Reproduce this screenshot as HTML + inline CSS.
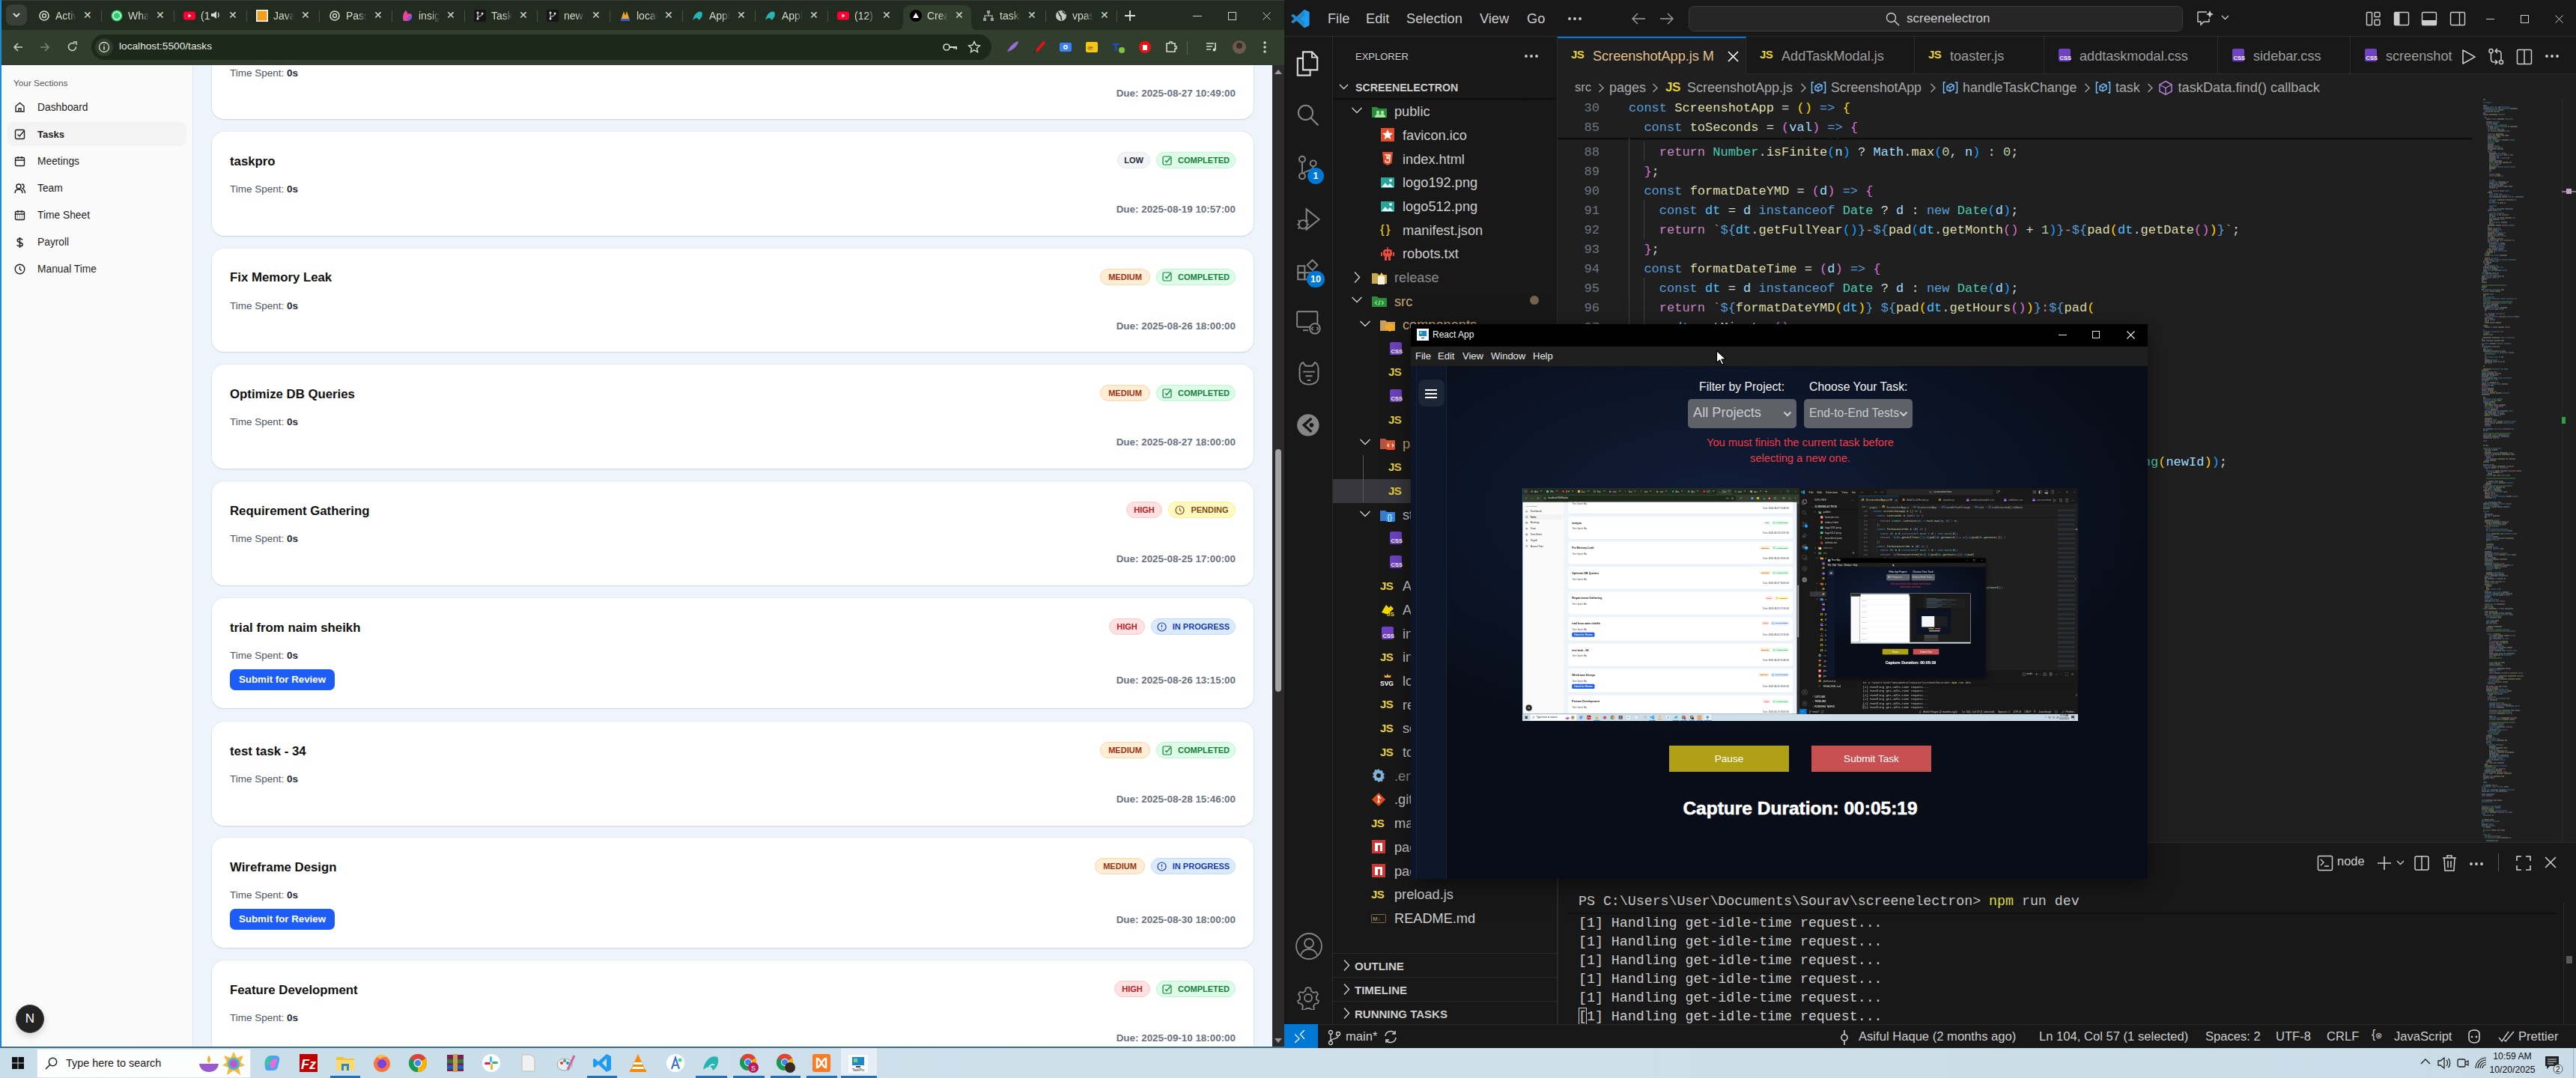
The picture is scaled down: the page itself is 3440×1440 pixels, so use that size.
<!DOCTYPE html><html><head><meta charset="utf-8"><style>
*{margin:0;padding:0;box-sizing:border-box}
html,body{width:3440px;height:1440px;overflow:hidden;background:#181818;font-family:"Liberation Sans",sans-serif}
.abs{position:absolute}
.mono{font-family:"Liberation Mono",monospace}
#browser{position:absolute;left:0;top:0;width:1715px;height:1400px;background:#212b20;overflow:hidden}
#tabstrip{position:absolute;left:0;top:0;width:1715px;height:40px;background:#212b20;border-top:1px solid #3b3b3b}
.tab{position:absolute;top:6px;height:34px;width:97px;color:#d5dacd;font-size:14px}
.tab .ic{position:absolute;left:12px;top:6px;width:16px;height:16px}
.tab .tt{position:absolute;left:35px;top:6px;width:28px;overflow:hidden;white-space:nowrap;-webkit-mask-image:linear-gradient(90deg,#000 60%,transparent)}
.tab .x{position:absolute;left:72px;top:5px;font-size:14px;color:#d5dacd}
.tab .sep{position:absolute;left:96px;top:7px;width:1px;height:15px;background:#4a5346}
#toolbar{position:absolute;left:0;top:40px;width:1715px;height:47px;background:#323e2d}
#omni{position:absolute;left:122px;top:6px;width:1202px;height:34px;border-radius:17px;background:#1c2819}
#page{position:absolute;left:0;top:87px;width:1715px;height:1313px;background:#eef4fc;overflow:hidden}
#side{position:absolute;left:0;top:0;width:258px;height:1313px;background:#fafafa;border-right:1px solid #e6e6e6}
.nav{position:absolute;left:10px;width:239px;height:32px;border-radius:8px;font-size:13.8px;color:#1f1f1f}
.nav span{position:absolute;left:40px;top:8.5px}
.nav svg{position:absolute;left:9px;top:9px}
.card{position:absolute;left:283px;width:1391px;background:#fff;border-radius:16px;box-shadow:0 1px 2px rgba(0,0,0,.10),0 0 0 1px rgba(0,0,0,.035)}
.ttl{position:absolute;left:24px;top:29.5px;font-size:16.8px;font-weight:bold;color:#111}
.ts{position:absolute;left:24px;font-size:13.5px;color:#4b5563}
.ts b{color:#1f2937;font-weight:bold}
.due{position:absolute;right:24px;font-size:13.4px;color:#6b7280;font-weight:bold}
.bdg{position:absolute;top:27px;height:22px;border-radius:11px;font-size:11px;font-weight:bold;line-height:20px;border:1px solid;white-space:nowrap;display:flex;align-items:center;justify-content:center}
.sfr{position:absolute;left:24px;width:140px;height:28px;border-radius:7px;background:#1d5cf5;color:#fff;font-size:13.3px;font-weight:bold;line-height:28px;text-align:center}
#scroll{position:absolute;left:1699px;top:87px;width:16px;height:1313px;background:#2b2b2b}


#vs{position:absolute;left:1715px;top:0;width:1725px;height:1400px;background:#1f1f1f;overflow:hidden;color:#cccccc}
#vtitle{position:absolute;left:0;top:0;width:1725px;height:49px;background:#181818;border-bottom:1px solid #2b2b2b}
.menu{position:absolute;top:15px;font-size:18.2px;color:#cccccc}
#act{position:absolute;left:0;top:49px;width:65px;height:1319px;background:#181818;border-right:1px solid #2b2b2b}
#exp{position:absolute;left:65px;top:49px;width:300px;height:1319px;background:#181818;border-right:1px solid #2b2b2b}
.row{position:absolute;left:0;width:299px;height:31.7px;font-size:18.2px;color:#cccccc;white-space:nowrap}
.row .nm{position:absolute;top:6.5px}
.chev{position:absolute;top:10px}
.fi{position:absolute;top:6px;width:20px;height:20px}
#edtabs{position:absolute;left:365px;top:49px;width:1360px;height:50px;background:#181818;border-bottom:1px solid #2b2b2b}
.etab{position:absolute;top:0;height:50px;border-right:1px solid #2b2b2b;font-size:18.1px;color:#9d9d9d;white-space:nowrap}
.etab .nm{position:absolute;top:16px}
#code{position:absolute;left:365px;top:99px;width:1360px;height:1026px;background:#1f1f1f}
.ln{position:absolute;left:0;width:56px;text-align:right;font-family:"Liberation Mono",monospace;font-size:17px;color:#6e7681;height:26px;line-height:26px}
.cl{position:absolute;left:95px;font-family:"Liberation Mono",monospace;font-size:17px;white-space:pre;height:26px;line-height:26px;color:#d4d4d4}
.k{color:#569cd6}.dt{color:#4fc1ff}.f{color:#dcdcaa}.r{color:#c586c0}.t{color:#4ec9b0}.v{color:#9cdcfe}.b1{color:#ffd700}.b2{color:#da70d6}.b3{color:#179fff}.nu{color:#b5cea8}.s{color:#ce9178}
#panel{position:absolute;left:365px;top:1125px;width:1360px;height:243px;background:#181818;border-top:1px solid #2b2b2b}
.term{position:absolute;left:28px;font-family:"Liberation Mono",monospace;font-size:18.27px;white-space:pre;color:#cccccc;height:25px;line-height:25px}
#status{position:absolute;left:0;top:1368px;width:1725px;height:32px;background:#181818;border-top:1px solid #2b2b2b;font-size:16.6px;color:#cccccc}
#status .si{position:absolute;top:6px;white-space:nowrap}
.sect{position:absolute;left:0;width:299px;height:32px;border-top:1px solid #2b2b2b;font-size:15px;font-weight:bold;color:#cccccc}
.sect span{position:absolute;left:29px;top:8px}


#rw{position:absolute;left:1884px;top:433px;width:984px;height:741px;background:#0a101c;box-shadow:0 0 0 1px #333,0 8px 30px rgba(0,0,0,.5);box-shadow:0 8px 30px rgba(0,0,0,.5);overflow:hidden}
#rtitle{position:absolute;left:0;top:0;width:984px;height:30px;background:#000}
#rmenu{position:absolute;left:0;top:30px;width:984px;height:26px;background:#1f1f1f;font-size:13px;color:#e6e6e6}
#rmenu span{position:absolute;top:5px}
#rcontent{position:absolute;left:0;top:56px;width:984px;height:685px;background:radial-gradient(ellipse 60% 45% at 42% 28%,#111d38 0%,#0c1528 55%,#080d18 100%)}
#rside{position:absolute;left:0;top:0;width:48px;height:685px;background:#0c1628;border-right:1px solid #1b2538}
.rlbl{position:absolute;top:19px;font-size:15.8px;color:#f0f0f0;white-space:nowrap}
.rsel{position:absolute;top:56px;height:39px;border-radius:5px;background:#5f6168;color:#c9cacd;font-size:17.5px;white-space:nowrap;overflow:hidden}
.rsel span{position:absolute;left:7px;top:9px}
.rsel svg{position:absolute;right:6px;top:16px}
</style></head><body>
<div id="browser">
<div class="abs" style="left:0;top:0;width:2px;height:1400px;background:#1f8ad2;z-index:50"></div>
<div id="tabstrip">
<div class="abs" style="left:8px;top:5px;width:28px;height:28px;border-radius:8px;background:#3a4038"></div>
<svg class="abs" style="left:16px;top:14px" width="12" height="10" viewBox="0 0 12 10"><path d="M2 3l4 4 4-4" stroke="#dfe3da" stroke-width="1.8" fill="none"/></svg>
<div class="tab" style="left:39px"><svg class="ic" viewBox="0 0 16 16"><circle cx="8" cy="8" r="6" fill="none" stroke="#d5dacd" stroke-width="1.6"/><circle cx="8" cy="8" r="2.5" fill="none" stroke="#d5dacd" stroke-width="1.4"/></svg><div class="tt">Activ</div><div class="x">&#x2715;</div><div class="sep"></div></div>
<div class="tab" style="left:136px"><svg class="ic" viewBox="0 0 16 16"><circle cx="8" cy="8" r="7.5" fill="#25d366"/><circle cx="8" cy="8" r="5" fill="none" stroke="#fff" stroke-width="1.3"/></svg><div class="tt">What</div><div class="x">&#x2715;</div><div class="sep"></div></div>
<div class="tab" style="left:233px"><svg class="ic" viewBox="0 0 16 16"><rect x="0" y="2.5" width="16" height="11" rx="3" fill="#ff0033"/><path d="M6.5 5.5v5l4-2.5z" fill="#fff"/></svg><div class="tt">(1</div><div class="x">&#x2715;</div><div class="sep"></div></div>
<div class="tab" style="left:330px"><svg class="ic" viewBox="0 0 16 16"><rect x="0" y="0" width="16" height="16" fill="#fff"/><rect x="1.5" y="1.5" width="13" height="13" fill="#f0a020"/></svg><div class="tt">Javas</div><div class="x">&#x2715;</div><div class="sep"></div></div>
<div class="tab" style="left:427px"><svg class="ic" viewBox="0 0 16 16"><circle cx="8" cy="8" r="6" fill="none" stroke="#d5dacd" stroke-width="1.6"/><circle cx="8" cy="8" r="2.5" fill="none" stroke="#d5dacd" stroke-width="1.4"/></svg><div class="tt">Pass</div><div class="x">&#x2715;</div><div class="sep"></div></div>
<div class="tab" style="left:524px"><svg class="ic" viewBox="0 0 16 16"><path d="M3 15C1 11 2 4 6 1c3 3 2 5 2 5s3-2 6 1c1 4-2 8-6 8z" fill="#e8459a"/><path d="M8 15c3 0 6-3 6-7-3-1-6 2-6 7z" fill="#6b5cf0"/></svg><div class="tt">insig</div><div class="x">&#x2715;</div><div class="sep"></div></div>
<div class="tab" style="left:621px"><svg class="ic" viewBox="0 0 16 16"><rect width="16" height="16" rx="2" fill="#151515"/><circle cx="5" cy="4" r="1.5" fill="#ddd"/><circle cx="5" cy="12" r="1.5" fill="#ddd"/><circle cx="11" cy="5" r="1.5" fill="#ddd"/><path d="M5 5v6M11 6c0 3-6 2-6 5" stroke="#ddd" fill="none"/></svg><div class="tt">Task</div><div class="x">&#x2715;</div><div class="sep"></div></div>
<div class="tab" style="left:718px"><svg class="ic" viewBox="0 0 16 16"><rect width="16" height="16" rx="2" fill="#151515"/><circle cx="5" cy="4" r="1.5" fill="#ddd"/><circle cx="5" cy="12" r="1.5" fill="#ddd"/><circle cx="11" cy="5" r="1.5" fill="#ddd"/><path d="M5 5v6M11 6c0 3-6 2-6 5" stroke="#ddd" fill="none"/></svg><div class="tt">new</div><div class="x">&#x2715;</div><div class="sep"></div></div>
<div class="tab" style="left:815px"><svg class="ic" viewBox="0 0 16 16"><path d="M2 14L6 2l2 6 2-6 4 12z" fill="#f5a623"/><rect x="2" y="12" width="12" height="3" fill="#3b5bdb"/></svg><div class="tt">local</div><div class="x">&#x2715;</div><div class="sep"></div></div>
<div class="tab" style="left:912px"><svg class="ic" viewBox="0 0 16 16"><path d="M1 14C3 6 8 1 13 3c2 3 0 9-4 11-1-4-4-4-8 0z" fill="#26b5b0"/></svg><div class="tt">Appl</div><div class="x">&#x2715;</div><div class="sep"></div></div>
<div class="tab" style="left:1009px"><svg class="ic" viewBox="0 0 16 16"><path d="M1 14C3 6 8 1 13 3c2 3 0 9-4 11-1-4-4-4-8 0z" fill="#26b5b0"/></svg><div class="tt">Appl</div><div class="x">&#x2715;</div><div class="sep"></div></div>
<div class="tab" style="left:1106px"><svg class="ic" viewBox="0 0 16 16"><rect x="0" y="2.5" width="16" height="11" rx="3" fill="#ff0033"/><path d="M6.5 5.5v5l4-2.5z" fill="#fff"/></svg><div class="tt">(12) V</div><div class="x">&#x2715;</div></div>
<div class="abs" style="left:1206px;top:6px;width:91px;height:34px;background:#323e2d;border-radius:9px 9px 0 0"></div>
<div class="abs" style="left:1197px;top:31px;width:9px;height:9px;background:radial-gradient(circle at 0 0,#212b20 8.5px,#323e2d 9px)"></div>
<div class="abs" style="left:1297px;top:31px;width:9px;height:9px;background:radial-gradient(circle at 100% 0,#212b20 8.5px,#323e2d 9px)"></div>
<div class="tab" style="left:1203px"><svg class="ic" viewBox="0 0 16 16"><circle cx="8" cy="8" r="8" fill="#000"/><path d="M8 4l4 7H4z" fill="#fff"/></svg><div class="tt">Crea</div><div class="x">&#x2715;</div></div>
<div class="tab" style="left:1300px"><svg class="ic" viewBox="0 0 16 16"><rect x="6" y="1" width="4" height="4" fill="#9aa096"/><rect x="1" y="11" width="4" height="4" fill="#9aa096"/><rect x="11" y="11" width="4" height="4" fill="#9aa096"/><path d="M8 5v3M3 11V8h10v3" stroke="#9aa096" stroke-width="1.5" fill="none"/></svg><div class="tt">taskp</div><div class="x">&#x2715;</div><div class="sep"></div></div>
<div class="tab" style="left:1397px"><svg class="ic" viewBox="0 0 16 16"><circle cx="8" cy="8" r="7" fill="#c5cac0"/><path d="M4 3c2 2 1 4 3 5s0 4 2 6M10 2c0 2 3 2 4 4" stroke="#212b20" stroke-width="1.6" fill="none"/></svg><div class="tt">vpas</div><div class="x">&#x2715;</div></div>
<svg class="abs" style="left:281px;top:12px" width="13" height="14" viewBox="0 0 13 14"><path d="M1 5h3l4-3v10L4 9H1z" fill="#d5dacd"/><path d="M10 4c1.5 1.5 1.5 4.5 0 6" stroke="#d5dacd" stroke-width="1.3" fill="none"/></svg>
<div class="abs" style="left:1491px;top:13px;width:1px;height:15px;background:#4a5346"></div>
<svg class="abs" style="left:1502px;top:13px" width="14" height="14" viewBox="0 0 14 14"><path d="M7 0v14M0 7h14" stroke="#dfe3da" stroke-width="1.8"/></svg>
<div class="abs" style="left:1593px;top:20px;width:12px;height:1px;background:#c9cdc4"></div>
<div class="abs" style="left:1640px;top:15px;width:11px;height:11px;border:1px solid #c9cdc4"></div>
<svg class="abs" style="left:1686px;top:15px" width="11" height="11" viewBox="0 0 11 11"><path d="M0.5 0.5l10 10M10.5 0.5l-10 10" stroke="#c9cdc4" stroke-width="1"/></svg>
</div>
<div id="toolbar">
<svg class="abs" style="left:17px;top:16px" width="14" height="14" viewBox="0 0 14 14"><path d="M13 7H2M7 2L2 7l5 5" stroke="#c9cdc4" stroke-width="1.6" fill="none"/></svg>
<svg class="abs" style="left:53px;top:16px" width="14" height="14" viewBox="0 0 14 14"><path d="M1 7h11M7 2l5 5-5 5" stroke="#7c8578" stroke-width="1.6" fill="none"/></svg>
<svg class="abs" style="left:89px;top:15px" width="15" height="15" viewBox="0 0 15 15"><path d="M12.5 7.5A5 5 0 1 1 10.5 3.5" stroke="#c9cdc4" stroke-width="1.6" fill="none"/><path d="M9 1h4v4" stroke="#c9cdc4" stroke-width="1.6" fill="none"/></svg>
<div id="omni">
<div class="abs" style="left:5px;top:5px;width:24px;height:24px;border-radius:12px;background:#2f3b2b"></div>
<svg class="abs" style="left:9px;top:9px" width="16" height="16" viewBox="0 0 16 16"><circle cx="8" cy="8" r="6.5" stroke="#d5dacd" stroke-width="1.3" fill="none"/><path d="M8 7v4.5M8 4.5v1" stroke="#d5dacd" stroke-width="1.6"/></svg>
<div class="abs" style="left:37px;top:8px;font-size:13.7px;color:#e8ebe4">localhost:5500/tasks</div>
<svg class="abs" style="left:1137px;top:10px" width="20" height="14" viewBox="0 0 20 14"><circle cx="5" cy="7" r="4" stroke="#d5dacd" stroke-width="1.6" fill="none"/><path d="M9 7h9v3M15 7v2" stroke="#d5dacd" stroke-width="2" fill="none"/></svg>
<svg class="abs" style="left:1170px;top:8px" width="18" height="18" viewBox="0 0 18 18"><path d="M9 1.5l2.2 4.8 5.2.6-3.9 3.5 1.1 5.1L9 12.9l-4.6 2.6 1.1-5.1L1.6 6.9l5.2-.6z" stroke="#d5dacd" stroke-width="1.4" fill="none"/></svg>
</div>
<svg class="abs" style="left:1343px;top:13px" width="20" height="20" viewBox="0 0 20 20"><path d="M2 16C6 8 12 3 17 2c-1 6-6 11-14 14z" fill="#9b6ad6"/></svg>
<svg class="abs" style="left:1378px;top:13px" width="20" height="20" viewBox="0 0 20 20"><path d="M4 17l2-4 9-11 3 2-9 11z" fill="#e11"/><path d="M2 18l3-2-1-2z" fill="#222"/></svg>
<svg class="abs" style="left:1413px;top:13px" width="20" height="20" viewBox="0 0 20 20"><rect x="2" y="4" width="16" height="12" rx="2" fill="#3b82f6"/><circle cx="10" cy="10" r="3" fill="#fff"/><circle cx="10" cy="10" r="1.5" fill="#3b82f6"/></svg>
<svg class="abs" style="left:1448px;top:13px" width="20" height="20" viewBox="0 0 20 20"><rect x="2" y="3" width="16" height="14" rx="2" fill="#f5c518"/><text x="4" y="14" font-size="8" fill="#333">বং</text></svg>
<svg class="abs" style="left:1484px;top:13px" width="20" height="20" viewBox="0 0 20 20"><text x="2" y="15" font-size="15" font-weight="bold" fill="#1d4ed8">T</text><circle cx="14" cy="14" r="4" fill="#7fc241"/></svg>
<svg class="abs" style="left:1519px;top:13px" width="20" height="20" viewBox="0 0 20 20"><circle cx="10" cy="10" r="8" fill="#e11"/><path d="M7 14V7h6v7z" fill="#fff"/></svg>
<svg class="abs" style="left:1554px;top:13px" width="20" height="20" viewBox="0 0 20 20"><path d="M4 5h4V3h3v2h4v4h2v3h-2v4H4z" stroke="#d5dacd" stroke-width="1.6" fill="none"/></svg>
<svg class="abs" style="left:1609px;top:13px" width="20" height="20" viewBox="0 0 20 20"><path d="M2 5h10M2 9h8M2 13h6M14 4v9" stroke="#d5dacd" stroke-width="1.6" fill="none"/><circle cx="12.5" cy="13.5" r="2" fill="#d5dacd"/></svg>
<svg class="abs" style="left:1645px;top:13px" width="20" height="20" viewBox="0 0 20 20"><circle cx="10" cy="10" r="9" fill="#6b5a4e"/><circle cx="10" cy="8" r="4" fill="#3a2c24"/></svg>
<div class="abs" style="left:1585px;top:15px;width:1px;height:18px;background:#59645a"></div>
<svg class="abs" style="left:1686px;top:14px" width="6" height="18" viewBox="0 0 6 18"><circle cx="3" cy="3" r="1.7" fill="#d5dacd"/><circle cx="3" cy="9" r="1.7" fill="#d5dacd"/><circle cx="3" cy="15" r="1.7" fill="#d5dacd"/></svg>
</div>
<div id="page">
<div id="side">
<div class="abs" style="left:18px;top:17px;font-size:11.8px;color:#555">Your Sections</div>
<div class="nav" style="top:40px;"><svg width="15" height="15" viewBox="0 0 15 15"><path d="M2 13V6l5.5-4.5L13 6v7zM6 13V9h3v4" stroke="#222" stroke-width="1.4" fill="none"/></svg><span>Dashboard</span></div>
<div class="nav" style="top:76px;background:#f3f3f3;font-weight:bold;font-size:13px;"><svg width="15" height="15" viewBox="0 0 15 15"><rect x="1.5" y="1.5" width="12" height="12" rx="1.5" stroke="#222" stroke-width="1.4" fill="none"/><path d="M4.5 7.5l2.5 2.5 6-7" stroke="#222" stroke-width="1.4" fill="none"/></svg><span>Tasks</span></div>
<div class="nav" style="top:112px;"><svg width="15" height="15" viewBox="0 0 15 15"><rect x="1.5" y="2.5" width="12" height="11" rx="1.5" stroke="#222" stroke-width="1.4" fill="none"/><path d="M1.5 6h12M5 1v3M10 1v3" stroke="#222" stroke-width="1.4"/></svg><span>Meetings</span></div>
<div class="nav" style="top:148px;"><svg width="15" height="15" viewBox="0 0 15 15"><circle cx="6" cy="5" r="3" stroke="#222" stroke-width="1.4" fill="none"/><path d="M1 14c0-4 2-5 5-5s5 1 5 5M10 2a3 3 0 0 1 0 6M12 9c2 1 2.5 3 2.5 5" stroke="#222" stroke-width="1.4" fill="none"/></svg><span>Team</span></div>
<div class="nav" style="top:184px;"><svg width="15" height="15" viewBox="0 0 15 15"><rect x="1.5" y="2.5" width="12" height="11" rx="1.5" stroke="#222" stroke-width="1.4" fill="none"/><path d="M1.5 6h12M5 1v3M10 1v3" stroke="#222" stroke-width="1.4"/><path d="M4 8.5h1M7 8.5h1M10 8.5h1M4 11h1M7 11h1M10 11h1" stroke="#222" stroke-width="1.2"/></svg><span>Time Sheet</span></div>
<div class="nav" style="top:220px;"><svg width="15" height="15" viewBox="0 0 15 15"><path d="M11 4.5C10 3 9 2.8 7.5 2.8 5.5 2.8 4.2 3.8 4.2 5.3c0 3.4 7 1.8 7 5.2 0 1.5-1.5 2.5-3.6 2.5-1.8 0-3-.6-3.8-1.8M7.5 1v14" stroke="#222" stroke-width="1.5" fill="none"/></svg><span>Payroll</span></div>
<div class="nav" style="top:256px;"><svg width="15" height="15" viewBox="0 0 15 15"><circle cx="7.5" cy="7.5" r="6.3" stroke="#222" stroke-width="1.4" fill="none"/><path d="M7.5 4v4l2.5 1.5" stroke="#222" stroke-width="1.4" fill="none"/></svg><span>Manual Time</span></div>
<div class="abs" style="left:21px;top:1255px;width:38px;height:38px;border-radius:19px;background:#232323;border:1.5px solid #444;box-shadow:0 4px 10px rgba(0,0,0,.15);color:#fff;font-size:17px;text-align:center;line-height:35px">N</div>
</div>
<div class="card" style="top:-70px;height:142px">
<div class="ts" style="top:72.5px">Time Spent: <b>0s</b></div>
<div class="due" style="top:99.5px">Due: 2025-08-27 10:49:00</div>
</div>
<div class="card" style="top:89px;height:138.5px">
<div class="ttl">taskpro</div>
<div class="ts" style="top:69px">Time Spent: <b>0s</b></div>
<div class="due" style="top:96.0px">Due: 2025-08-19 10:57:00</div>
<div class="bdg" style="right:24px;width:106px;background:#dcfce7;border-color:#bbf7d0;color:#15803d"><svg width="13" height="13" viewBox="0 0 13 13" style="margin-right:8px"><rect x="1" y="1" width="11" height="11" rx="1.5" stroke="#15803d" stroke-width="1.2" fill="none"/><path d="M4 6.5l2 2 5-6" stroke="#15803d" stroke-width="1.2" fill="none"/></svg>COMPLETED</div>
<div class="bdg" style="right:138px;width:44px;background:#f3f4f6;border-color:#e5e7eb;color:#1f2937">LOW</div>
</div>
<div class="card" style="top:244.6px;height:138.5px">
<div class="ttl">Fix Memory Leak</div>
<div class="ts" style="top:69px">Time Spent: <b>0s</b></div>
<div class="due" style="top:96.0px">Due: 2025-08-26 18:00:00</div>
<div class="bdg" style="right:24px;width:106px;background:#dcfce7;border-color:#bbf7d0;color:#15803d"><svg width="13" height="13" viewBox="0 0 13 13" style="margin-right:8px"><rect x="1" y="1" width="11" height="11" rx="1.5" stroke="#15803d" stroke-width="1.2" fill="none"/><path d="M4 6.5l2 2 5-6" stroke="#15803d" stroke-width="1.2" fill="none"/></svg>COMPLETED</div>
<div class="bdg" style="right:138px;width:67px;background:#ffedd5;border-color:#fed7aa;color:#9a3412">MEDIUM</div>
</div>
<div class="card" style="top:400px;height:138.5px">
<div class="ttl">Optimize DB Queries</div>
<div class="ts" style="top:69px">Time Spent: <b>0s</b></div>
<div class="due" style="top:96.0px">Due: 2025-08-27 18:00:00</div>
<div class="bdg" style="right:24px;width:106px;background:#dcfce7;border-color:#bbf7d0;color:#15803d"><svg width="13" height="13" viewBox="0 0 13 13" style="margin-right:8px"><rect x="1" y="1" width="11" height="11" rx="1.5" stroke="#15803d" stroke-width="1.2" fill="none"/><path d="M4 6.5l2 2 5-6" stroke="#15803d" stroke-width="1.2" fill="none"/></svg>COMPLETED</div>
<div class="bdg" style="right:138px;width:67px;background:#ffedd5;border-color:#fed7aa;color:#9a3412">MEDIUM</div>
</div>
<div class="card" style="top:556px;height:138.5px">
<div class="ttl">Requirement Gathering</div>
<div class="ts" style="top:69px">Time Spent: <b>0s</b></div>
<div class="due" style="top:96.0px">Due: 2025-08-25 17:00:00</div>
<div class="bdg" style="right:24px;width:90px;background:#fef9c3;border-color:#fef08a;color:#854d0e"><svg width="13" height="13" viewBox="0 0 13 13" style="margin-right:8px"><circle cx="6.5" cy="6.5" r="5.5" stroke="#854d0e" stroke-width="1.2" fill="none"/><path d="M6.5 3.5v3l2 1.5" stroke="#854d0e" stroke-width="1.2" fill="none"/></svg>PENDING</div>
<div class="bdg" style="right:122px;width:48px;background:#fee2e2;border-color:#fecaca;color:#b91c1c">HIGH</div>
</div>
<div class="card" style="top:712.4px;height:147px">
<div class="ttl">trial from naim sheikh</div>
<div class="ts" style="top:69px">Time Spent: <b>0s</b></div>
<div class="sfr" style="top:95px">Submit for Review</div>
<div class="due" style="top:102px">Due: 2025-08-26 13:15:00</div>
<div class="bdg" style="right:24px;width:113px;background:#dbeafe;border-color:#bfdbfe;color:#1e40af"><svg width="13" height="13" viewBox="0 0 13 13" style="margin-right:8px"><circle cx="6.5" cy="6.5" r="5.5" stroke="#1e40af" stroke-width="1.2" fill="none"/><path d="M6.5 3.5v3.5M6.5 8.5v1" stroke="#1e40af" stroke-width="1.2" fill="none"/></svg>IN PROGRESS</div>
<div class="bdg" style="right:145px;width:48px;background:#fee2e2;border-color:#fecaca;color:#b91c1c">HIGH</div>
</div>
<div class="card" style="top:877px;height:138.5px">
<div class="ttl">test task - 34</div>
<div class="ts" style="top:69px">Time Spent: <b>0s</b></div>
<div class="due" style="top:96.0px">Due: 2025-08-28 15:46:00</div>
<div class="bdg" style="right:24px;width:106px;background:#dcfce7;border-color:#bbf7d0;color:#15803d"><svg width="13" height="13" viewBox="0 0 13 13" style="margin-right:8px"><rect x="1" y="1" width="11" height="11" rx="1.5" stroke="#15803d" stroke-width="1.2" fill="none"/><path d="M4 6.5l2 2 5-6" stroke="#15803d" stroke-width="1.2" fill="none"/></svg>COMPLETED</div>
<div class="bdg" style="right:138px;width:67px;background:#ffedd5;border-color:#fed7aa;color:#9a3412">MEDIUM</div>
</div>
<div class="card" style="top:1032px;height:147px">
<div class="ttl">Wireframe Design</div>
<div class="ts" style="top:69px">Time Spent: <b>0s</b></div>
<div class="sfr" style="top:95px">Submit for Review</div>
<div class="due" style="top:102px">Due: 2025-08-30 18:00:00</div>
<div class="bdg" style="right:24px;width:113px;background:#dbeafe;border-color:#bfdbfe;color:#1e40af"><svg width="13" height="13" viewBox="0 0 13 13" style="margin-right:8px"><circle cx="6.5" cy="6.5" r="5.5" stroke="#1e40af" stroke-width="1.2" fill="none"/><path d="M6.5 3.5v3.5M6.5 8.5v1" stroke="#1e40af" stroke-width="1.2" fill="none"/></svg>IN PROGRESS</div>
<div class="bdg" style="right:145px;width:67px;background:#ffedd5;border-color:#fed7aa;color:#9a3412">MEDIUM</div>
</div>
<div class="card" style="top:1196.3px;height:138.5px">
<div class="ttl">Feature Development</div>
<div class="ts" style="top:69px">Time Spent: <b>0s</b></div>
<div class="due" style="top:96.0px">Due: 2025-09-10 18:00:00</div>
<div class="bdg" style="right:24px;width:106px;background:#dcfce7;border-color:#bbf7d0;color:#15803d"><svg width="13" height="13" viewBox="0 0 13 13" style="margin-right:8px"><rect x="1" y="1" width="11" height="11" rx="1.5" stroke="#15803d" stroke-width="1.2" fill="none"/><path d="M4 6.5l2 2 5-6" stroke="#15803d" stroke-width="1.2" fill="none"/></svg>COMPLETED</div>
<div class="bdg" style="right:138px;width:48px;background:#fee2e2;border-color:#fecaca;color:#b91c1c">HIGH</div>
</div>
</div>
<div class="abs" style="left:0;top:1398px;width:1715px;height:2px;background:#3f6f86;z-index:60"></div>
<div id="scroll"><svg class="abs" style="left:3px;top:6px" width="10" height="6"><path d="M0 6L5 0l5 6z" fill="#9a9a9a"/></svg><div class="abs" style="left:4px;top:513px;width:8px;height:324px;border-radius:4px;background:#a3a3a3"></div><svg class="abs" style="left:3px;top:1300px" width="10" height="6"><path d="M0 0h10L5 6z" fill="#9a9a9a"/></svg></div>
</div>

<div id="vs">
<div id="vtitle">
<svg class="abs" style="left:9px;top:13px" width="25" height="24" viewBox="0 0 100 100"><path d="M96 10.8L75.4 1a6.2 6.2 0 0 0-7.1 1.2L29 38.1 11.9 25.1a4.2 4.2 0 0 0-5.3.2L1.1 30.3a4.2 4.2 0 0 0 0 6.2L15.9 50 1.1 63.5a4.2 4.2 0 0 0 0 6.2l5.5 5a4.2 4.2 0 0 0 5.3.2L29 61.9l39.3 35.9a6.2 6.2 0 0 0 7.1 1.2L96 89.2a6.2 6.2 0 0 0 3.5-5.6V16.4a6.2 6.2 0 0 0-3.5-5.6zM75 72.7L45.2 50 75 27.3z" fill="#2489ca"/><path d="M75 27.3L45.2 50 75 72.7V27.3zM96 10.8L75.4 1a6.2 6.2 0 0 0-7.1 1.2L75 27.3V72.7l-6.7 25.1a6.2 6.2 0 0 0 7.1 1.2L96 89.2a6.2 6.2 0 0 0 3.5-5.6V16.4a6.2 6.2 0 0 0-3.5-5.6z" fill="#1f9cf0"/></svg>
<div class="menu" style="left:58px">File</div>
<div class="menu" style="left:109px">Edit</div>
<div class="menu" style="left:163px">Selection</div>
<div class="menu" style="left:261px">View</div>
<div class="menu" style="left:324px">Go</div>
<svg class="abs" style="left:378px;top:22px" width="20" height="6" viewBox="0 0 20 6"><circle cx="3" cy="3" r="1.9" fill="#cccccc"/><circle cx="10" cy="3" r="1.9" fill="#cccccc"/><circle cx="17" cy="3" r="1.9" fill="#cccccc"/></svg>
<svg class="abs" style="left:463px;top:16px" width="20" height="18" viewBox="0 0 20 18"><path d="M19 9H2M9 2L2 9l7 7" stroke="#9d9d9d" stroke-width="1.4" fill="none"/></svg>
<svg class="abs" style="left:501px;top:16px" width="20" height="18" viewBox="0 0 20 18"><path d="M1 9h17M11 2l7 7-7 7" stroke="#9d9d9d" stroke-width="1.4" fill="none"/></svg>
<div class="abs" style="left:540px;top:8px;width:660px;height:34px;border-radius:7px;background:#262626;border:1px solid #3a3a3a"></div>
<svg class="abs" style="left:803px;top:16px" width="19" height="19" viewBox="0 0 19 19"><circle cx="7.5" cy="7.5" r="6" stroke="#cccccc" stroke-width="1.4" fill="none"/><path d="M12 12l6 6" stroke="#cccccc" stroke-width="1.5"/></svg>
<div class="abs" style="left:831px;top:15px;font-size:17px;color:#cccccc">screenelectron</div>
<svg class="abs" style="left:1218px;top:13px" width="24" height="22" viewBox="0 0 24 22"><path d="M2 3h12M2 3v13h4v4l4-4h7v-4" stroke="#cccccc" stroke-width="1.4" fill="none"/><path d="M18 1l1.5 3.5L23 6l-3.5 1.5L18 11l-1.5-3.5L13 6l3.5-1.5z" fill="#cccccc"/></svg>
<svg class="abs" style="left:1251px;top:20px" width="11" height="7" viewBox="0 0 11 7"><path d="M1 1l4.5 4.5L10 1" stroke="#cccccc" stroke-width="1.3" fill="none"/></svg>
<svg class="abs" style="left:1444px;top:14px" width="22" height="22" viewBox="0 0 22 22"><rect x="1.5" y="2.5" width="7" height="17" rx="1" stroke="#cccccc" stroke-width="1.4" fill="none"/><rect x="12" y="2.5" width="7" height="6" rx="1" stroke="#cccccc" stroke-width="1.4" fill="none"/><rect x="12" y="12.5" width="7" height="7" rx="1" stroke="#cccccc" stroke-width="1.4" fill="none"/></svg>
<svg class="abs" style="left:1481px;top:14px" width="22" height="22" viewBox="0 0 22 22"><rect x="1.5" y="2.5" width="19" height="17" rx="1.5" stroke="#cccccc" stroke-width="1.4" fill="none"/><rect x="1.5" y="2.5" width="7" height="17" fill="#cccccc"/></svg>
<svg class="abs" style="left:1518px;top:14px" width="22" height="22" viewBox="0 0 22 22"><rect x="1.5" y="2.5" width="19" height="17" rx="1.5" stroke="#cccccc" stroke-width="1.4" fill="none"/><rect x="1.5" y="13" width="19" height="6.5" fill="#cccccc"/></svg>
<svg class="abs" style="left:1556px;top:14px" width="22" height="22" viewBox="0 0 22 22"><rect x="1.5" y="2.5" width="19" height="17" rx="1.5" stroke="#cccccc" stroke-width="1.4" fill="none"/><path d="M13.5 2.5v17" stroke="#cccccc" stroke-width="1.4"/></svg>
<div class="abs" style="left:1605px;top:25px;width:11px;height:1px;background:#cccccc"></div>
<div class="abs" style="left:1651px;top:20px;width:10.5px;height:10.5px;border:1px solid #cccccc"></div>
<svg class="abs" style="left:1697px;top:20px" width="11" height="11" viewBox="0 0 11 11"><path d="M0.5 0.5l10 10M10.5 0.5l-10 10" stroke="#cccccc" stroke-width="1"/></svg>
</div>
<div id="act">
<svg class="abs" style="left:15px;top:18px" width="32" height="36" viewBox="-1 -1 26 30"><path d="M7 1h10l6 6v14H7z" stroke="#d7d7d7" stroke-width="1.8" fill="none"/><path d="M17 1v6h6" stroke="#d7d7d7" stroke-width="1.6" fill="none"/><path d="M7 8H1v19h14v-6" stroke="#d7d7d7" stroke-width="1.8" fill="none"/></svg>
<svg class="abs" style="left:16px;top:88.5px" width="34" height="34" viewBox="0 0 30 30"><circle cx="11" cy="11" r="8.5" stroke="#858585" stroke-width="1.8" fill="none"/><path d="M17 17l9 9" stroke="#858585" stroke-width="1.9"/></svg>
<svg class="abs" style="left:16px;top:157.5px" width="34" height="34" viewBox="0 0 30 30"><circle cx="7" cy="5" r="3.5" stroke="#858585" stroke-width="1.7" fill="none"/><circle cx="7" cy="25" r="3.5" stroke="#858585" stroke-width="1.7" fill="none"/><circle cx="20" cy="10" r="3.5" stroke="#858585" stroke-width="1.7" fill="none"/><path d="M7 9v12M20 14c0 5-9 4-12 8" stroke="#858585" stroke-width="1.7" fill="none"/></svg>
<svg class="abs" style="left:16px;top:226.5px" width="34" height="34" viewBox="0 0 30 30"><path d="M12 3v24l15-12z" stroke="#858585" stroke-width="1.8" fill="none"/><circle cx="8" cy="21" r="5" stroke="#858585" stroke-width="1.7" fill="#181818"/><path d="M1 21h3M12 21h3M2 16l3 2M14 16l-3 2M2 26l3-2M14 26l-3-2" stroke="#858585" stroke-width="1.4"/></svg>
<svg class="abs" style="left:16px;top:295.5px" width="34" height="34" viewBox="0 0 30 30"><rect x="2" y="9" width="8" height="8" stroke="#858585" stroke-width="1.7" fill="none"/><rect x="2" y="17" width="8" height="8" stroke="#858585" stroke-width="1.7" fill="none"/><rect x="10" y="17" width="8" height="8" stroke="#858585" stroke-width="1.7" fill="none"/><path d="M19 2l6 6-6 6-6-6z" stroke="#858585" stroke-width="1.7" fill="none"/></svg>
<svg class="abs" style="left:16px;top:364.5px" width="34" height="34" viewBox="0 0 30 30"><rect x="1" y="2" width="24" height="18" rx="1" stroke="#858585" stroke-width="1.7" fill="none"/><path d="M8 24h6" stroke="#858585" stroke-width="1.7"/><circle cx="22" cy="22" r="6" stroke="#858585" stroke-width="1.7" fill="#181818"/><path d="M20 20l-2 2 2 2M24 20l2 2-2 2" stroke="#858585" stroke-width="1.2" fill="none"/></svg>
<svg class="abs" style="left:16px;top:433.5px" width="34" height="34" viewBox="0 0 30 30"><path d="M4 8c0-5 4-7 4-7l3 4h8l3-4s4 2 4 7v10c0 6-5 9-11 9S4 24 4 18z" stroke="#858585" stroke-width="1.7" fill="none"/><path d="M8 12h14M11 17h8M13 22h4" stroke="#858585" stroke-width="1.7"/></svg>
<svg class="abs" style="left:16px;top:502.5px" width="34" height="34" viewBox="0 0 30 30"><circle cx="14" cy="14" r="13" fill="#858585"/><path d="M18 6L9 14l9 8" stroke="#181818" stroke-width="3" fill="none"/><circle cx="18" cy="14" r="2.5" fill="#181818"/></svg>
<div class="abs" style="left:31px;top:175px;width:22px;height:22px;border-radius:11px;background:#0078d4;color:#fff;font-size:12.5px;font-weight:bold;text-align:center;line-height:22px">1</div>
<div class="abs" style="left:30px;top:313px;width:24px;height:22px;border-radius:11px;background:#0078d4;color:#fff;font-size:12.5px;font-weight:bold;text-align:center;line-height:22px">10</div>
<svg class="abs" style="left:14px;top:1196px" width="38" height="38" viewBox="0 0 38 38"><circle cx="19" cy="19" r="17" stroke="#858585" stroke-width="1.8" fill="none"/><circle cx="19" cy="15" r="6" stroke="#858585" stroke-width="1.8" fill="none"/><path d="M8 31c2-6 6-8 11-8s9 2 11 8" stroke="#858585" stroke-width="1.8" fill="none"/></svg>
<svg class="abs" style="left:16px;top:1268px" width="32" height="32" viewBox="0 0 32 32"><path d="M16 2l3 1 1 4 3 2 4-1 2 3-2 3v4l3 2-1 3-4 1-2 3 1 4-3 1-3-2h-4l-3 2-3-1 1-4-2-3-4-1-1-3 3-2v-4l-2-3 2-3 4 1 3-2 1-4z" stroke="#858585" stroke-width="1.8" fill="none"/><circle cx="16" cy="16" r="5" stroke="#858585" stroke-width="1.8" fill="none"/></svg>
</div>
<div id="exp">
<div class="abs" style="left:30px;top:18.5px;font-size:13px;color:#cccccc">EXPLORER</div>
<svg class="abs" style="left:255px;top:23px" width="20" height="6" viewBox="0 0 20 6"><circle cx="3" cy="3" r="1.9" fill="#cccccc"/><circle cx="10" cy="3" r="1.9" fill="#cccccc"/><circle cx="17" cy="3" r="1.9" fill="#cccccc"/></svg>
<svg class="abs" style="left:8px;top:63px" width="13" height="8" viewBox="0 0 13 8"><path d="M1 1l5.5 5.5L12 1" stroke="#cccccc" stroke-width="1.4" fill="none"/></svg>
<div class="abs" style="left:30px;top:60px;font-size:14.2px;font-weight:bold;color:#cccccc">SCREENELECTRON</div>
<div class="abs" style="left:0;top:82px;width:299px;height:4px;background:linear-gradient(#0b0b0b,transparent)"></div>
<div class="row" style="top:83.7px;">
<svg class="chev" style="left:24px;top:9px" width="16" height="11" viewBox="0 0 16 11"><path d="M1.5 2l6.5 6.5L14.5 2" stroke="#cccccc" stroke-width="1.4" fill="none"/></svg>
<svg class="fi" style="left:51px;width:22px" viewBox="0 0 22 20"><path d="M1 4h7l2 2h11v12H1z" fill="#2e8b3e"/><circle cx="9" cy="11" r="2.2" fill="#9fe89f"/><circle cx="15" cy="11" r="2.2" fill="#9fe89f"/><path d="M5 18c0-3 2-5 4-5s4 2 4 5zM11 18c0-3 2-5 4-5s4 2 4 5z" fill="#9fe89f"/></svg>
<div class="nm" style="left:82px;color:#cccccc">public</div>
</div>
<div class="row" style="top:115.3px;">
<svg class="fi" style="left:63px" viewBox="0 0 20 20"><rect x="1" y="1" width="18" height="18" fill="#e54a2a"/><path d="M10 3l2 4.5 5 .5-3.8 3.3 1.2 4.9L10 13.6l-4.4 2.6 1.2-4.9L3 8l5-.5z" fill="#fff"/></svg>
<div class="nm" style="left:93px;color:#cccccc">favicon.ico</div>
</div>
<div class="row" style="top:147.1px;">
<svg class="fi" style="left:63px" viewBox="0 0 20 20"><path d="M3 1h14l-1.5 15L10 19l-5.5-3z" fill="#e44d26"/><path d="M6.5 5h7l-.3 2.5H9l.2 2h3.8l-.5 4.5-2.5 1-2.5-1-.2-2" stroke="#fff" stroke-width="1.3" fill="none"/></svg>
<div class="nm" style="left:93px;color:#cccccc">index.html</div>
</div>
<div class="row" style="top:178.8px;">
<svg class="fi" style="left:63px" viewBox="0 0 20 20"><rect x="1" y="3" width="18" height="14" rx="1" fill="#26a69a"/><path d="M2 16l5-6 3 4 3-3 5 5z" fill="#e0f2f1"/><circle cx="14" cy="7" r="2" fill="#e0f2f1"/></svg>
<div class="nm" style="left:93px;color:#cccccc">logo192.png</div>
</div>
<div class="row" style="top:210.5px;">
<svg class="fi" style="left:63px" viewBox="0 0 20 20"><rect x="1" y="3" width="18" height="14" rx="1" fill="#26a69a"/><path d="M2 16l5-6 3 4 3-3 5 5z" fill="#e0f2f1"/><circle cx="14" cy="7" r="2" fill="#e0f2f1"/></svg>
<div class="nm" style="left:93px;color:#cccccc">logo512.png</div>
</div>
<div class="row" style="top:242.2px;">
<div class="fi" style="left:63px;color:#f1d700;font-size:17px;line-height:19px;letter-spacing:2px">{}</div>
<div class="nm" style="left:93px;color:#cccccc">manifest.json</div>
</div>
<div class="row" style="top:273.8px;">
<svg class="fi" style="left:63px" viewBox="0 0 20 20"><rect x="4" y="4" width="12" height="10" rx="4" fill="#e74c3c"/><rect x="6" y="14" width="3" height="5" fill="#e74c3c"/><rect x="11" y="14" width="3" height="5" fill="#e74c3c"/><rect x="1" y="8" width="2" height="5" fill="#e74c3c"/><rect x="17" y="8" width="2" height="5" fill="#e74c3c"/><circle cx="8" cy="8" r="1.2" fill="#181818"/><circle cx="12" cy="8" r="1.2" fill="#181818"/><path d="M10 1v3" stroke="#e74c3c" stroke-width="1.5"/></svg>
<div class="nm" style="left:93px;color:#cccccc">robots.txt</div>
</div>
<div class="row" style="top:305.5px;">
<svg class="chev" style="left:27px;top:7px" width="11" height="17" viewBox="0 0 11 17"><path d="M2 1.5l6.5 7L2 15.5" stroke="#cccccc" stroke-width="1.4" fill="none"/></svg>
<svg class="fi" style="left:51px;width:22px" viewBox="0 0 22 20"><path d="M1 4h7l2 2h11v12H1z" fill="#c9a74e"/><rect x="9" y="8" width="9" height="11" fill="#f5f0e0"/><path d="M11 8l3-5 3 5z" fill="#ffd84d"/></svg>
<div class="nm" style="left:82px;color:#8c8c8c">release</div>
</div>
<div class="row" style="top:337.2px;">
<svg class="chev" style="left:24px;top:9px" width="16" height="11" viewBox="0 0 16 11"><path d="M1.5 2l6.5 6.5L14.5 2" stroke="#cccccc" stroke-width="1.4" fill="none"/></svg>
<svg class="fi" style="left:51px;width:22px" viewBox="0 0 22 20"><path d="M1 4h7l2 2h11v12H1z" fill="#2e8b3e"/><path d="M8 10l-2.5 2.5L8 15M14 10l2.5 2.5L14 15M12 9l-2 7" stroke="#7ee87e" stroke-width="1.4" fill="none"/></svg>
<div class="nm" style="left:82px;color:#c5a572">src</div>
</div>
<div class="row" style="top:368.9px;">
<svg class="chev" style="left:35px;top:9px" width="16" height="11" viewBox="0 0 16 11"><path d="M1.5 2l6.5 6.5L14.5 2" stroke="#cccccc" stroke-width="1.4" fill="none"/></svg>
<svg class="fi" style="left:62px;width:22px" viewBox="0 0 22 20"><path d="M1 4h7l2 2h11v12H1z" fill="#c9a060"/><path d="M8 10l6-3 6 3v6l-6 3-6-3z" fill="#f4a928"/></svg>
<div class="nm" style="left:93px;color:#c5a572">components</div>
</div>
<div class="row" style="top:400.6px;">
<svg class="fi" style="left:74px" viewBox="0 0 20 20"><path d="M2 3c0-1 1-2 2-2h12c1 0 2 1 2 2v13c0 1-1 2-2 2H4c-1 0-2-1-2-2z" fill="#6f42c1"/><text x="3.5" y="16" font-size="7.5" font-weight="bold" fill="#fff" font-family="Liberation Sans">CSS</text></svg>
<div class="nm" style="left:104px;color:#cccccc">x</div>
</div>
<div class="row" style="top:432.3px;">
<div class="fi" style="left:74px;color:#e8cf3c;font-weight:bold;font-size:15px;line-height:20px;letter-spacing:-0.5px">JS</div>
<div class="nm" style="left:104px;color:#cccccc">x</div>
</div>
<div class="row" style="top:464.0px;">
<svg class="fi" style="left:74px" viewBox="0 0 20 20"><path d="M2 3c0-1 1-2 2-2h12c1 0 2 1 2 2v13c0 1-1 2-2 2H4c-1 0-2-1-2-2z" fill="#6f42c1"/><text x="3.5" y="16" font-size="7.5" font-weight="bold" fill="#fff" font-family="Liberation Sans">CSS</text></svg>
<div class="nm" style="left:104px;color:#cccccc">x</div>
</div>
<div class="row" style="top:495.7px;">
<div class="fi" style="left:74px;color:#e8cf3c;font-weight:bold;font-size:15px;line-height:20px;letter-spacing:-0.5px">JS</div>
<div class="nm" style="left:104px;color:#cccccc">x</div>
</div>
<div class="row" style="top:527.4px;">
<svg class="chev" style="left:35px;top:9px" width="16" height="11" viewBox="0 0 16 11"><path d="M1.5 2l6.5 6.5L14.5 2" stroke="#cccccc" stroke-width="1.4" fill="none"/></svg>
<svg class="fi" style="left:62px;width:22px" viewBox="0 0 22 20"><path d="M1 4h7l2 2h11v12H1z" fill="#b35543"/><rect x="9" y="7" width="12" height="12" rx="2" fill="#e0552f"/><path d="M13 11l-2 2 2 2M17 11l2 2-2 2" stroke="#fff" stroke-width="1.2" fill="none"/></svg>
<div class="nm" style="left:93px;color:#c5a572">pages</div>
</div>
<div class="row" style="top:559.1px;">
<div class="fi" style="left:74px;color:#e8cf3c;font-weight:bold;font-size:15px;line-height:20px;letter-spacing:-0.5px">JS</div>
<div class="nm" style="left:104px;color:#cccccc">x</div>
</div>
<div class="row" style="top:590.9px;background:#37373d;">
<div class="fi" style="left:74px;color:#e8cf3c;font-weight:bold;font-size:15px;line-height:20px;letter-spacing:-0.5px">JS</div>
<div class="nm" style="left:104px;color:#cccccc">x</div>
</div>
<div class="row" style="top:622.5px;">
<svg class="chev" style="left:35px;top:9px" width="16" height="11" viewBox="0 0 16 11"><path d="M1.5 2l6.5 6.5L14.5 2" stroke="#cccccc" stroke-width="1.4" fill="none"/></svg>
<svg class="fi" style="left:62px;width:22px" viewBox="0 0 22 20"><path d="M1 4h7l2 2h11v12H1z" fill="#3f7ac9"/><rect x="9" y="6" width="12" height="13" rx="2" fill="#2f8ee6"/><text x="10.5" y="16.5" font-size="10" fill="#fff" font-family="Liberation Sans">{}</text></svg>
<div class="nm" style="left:93px;color:#cccccc">styles</div>
</div>
<div class="row" style="top:654.2px;">
<svg class="fi" style="left:74px" viewBox="0 0 20 20"><path d="M2 3c0-1 1-2 2-2h12c1 0 2 1 2 2v13c0 1-1 2-2 2H4c-1 0-2-1-2-2z" fill="#6f42c1"/><text x="3.5" y="16" font-size="7.5" font-weight="bold" fill="#fff" font-family="Liberation Sans">CSS</text></svg>
<div class="nm" style="left:104px;color:#cccccc">x</div>
</div>
<div class="row" style="top:685.9px;">
<svg class="fi" style="left:74px" viewBox="0 0 20 20"><path d="M2 3c0-1 1-2 2-2h12c1 0 2 1 2 2v13c0 1-1 2-2 2H4c-1 0-2-1-2-2z" fill="#6f42c1"/><text x="3.5" y="16" font-size="7.5" font-weight="bold" fill="#fff" font-family="Liberation Sans">CSS</text></svg>
<div class="nm" style="left:104px;color:#cccccc">x</div>
</div>
<div class="row" style="top:717.6px;">
<div class="fi" style="left:63px;color:#e8cf3c;font-weight:bold;font-size:15px;line-height:20px;letter-spacing:-0.5px">JS</div>
<div class="nm" style="left:93px;color:#cccccc">App.js</div>
</div>
<div class="row" style="top:749.3px;">
<svg class="fi" style="left:63px" viewBox="0 0 20 20"><path d="M2 14l6-10 4 4 2-3 4 4-8 8z" fill="#f1d700"/><text x="9" y="19" font-size="8" font-weight="bold" fill="#f1d700" font-family="Liberation Sans">JS</text></svg>
<div class="nm" style="left:93px;color:#cccccc">App.test.js</div>
</div>
<div class="row" style="top:781.0px;">
<svg class="fi" style="left:63px" viewBox="0 0 20 20"><path d="M2 3c0-1 1-2 2-2h12c1 0 2 1 2 2v13c0 1-1 2-2 2H4c-1 0-2-1-2-2z" fill="#6f42c1"/><text x="3.5" y="16" font-size="7.5" font-weight="bold" fill="#fff" font-family="Liberation Sans">CSS</text></svg>
<div class="nm" style="left:93px;color:#cccccc">index.css</div>
</div>
<div class="row" style="top:812.8px;">
<div class="fi" style="left:63px;color:#e8cf3c;font-weight:bold;font-size:15px;line-height:20px;letter-spacing:-0.5px">JS</div>
<div class="nm" style="left:93px;color:#cccccc">index.js</div>
</div>
<div class="row" style="top:844.4px;">
<svg class="fi" style="left:63px" viewBox="0 0 20 20"><path d="M10 1l1.5 3 3-1.5-.5 3.5h-8l-.5-3.5 3 1.5z" fill="#ffb13b"/><text x="0" y="17" font-size="8.5" font-weight="bold" fill="#fff" font-family="Liberation Sans">SVG</text></svg>
<div class="nm" style="left:93px;color:#cccccc">logo.svg</div>
</div>
<div class="row" style="top:876.1px;">
<div class="fi" style="left:63px;color:#e8cf3c;font-weight:bold;font-size:15px;line-height:20px;letter-spacing:-0.5px">JS</div>
<div class="nm" style="left:93px;color:#cccccc">reportWebVitals.js</div>
</div>
<div class="row" style="top:907.8px;">
<div class="fi" style="left:63px;color:#e8cf3c;font-weight:bold;font-size:15px;line-height:20px;letter-spacing:-0.5px">JS</div>
<div class="nm" style="left:93px;color:#cccccc">setupTests.js</div>
</div>
<div class="row" style="top:939.5px;">
<div class="fi" style="left:63px;color:#e8cf3c;font-weight:bold;font-size:15px;line-height:20px;letter-spacing:-0.5px">JS</div>
<div class="nm" style="left:93px;color:#cccccc">toaster.js</div>
</div>
<div class="row" style="top:971.2px;">
<svg class="fi" style="left:51px" viewBox="0 0 20 20"><path d="M10 1l2 2.5 3-.5.5 3 2.5 2-1.5 2.5 1.5 2.5-2.5 2-.5 3-3-.5L10 19l-2-2.5-3 .5-.5-3L2 12l1.5-2.5L2 7l2.5-2 .5-3 3 .5z" fill="#7fb2d4"/><circle cx="10" cy="10" r="3" fill="#181818"/></svg>
<div class="nm" style="left:82px;color:#8c8c8c">.env</div>
</div>
<div class="row" style="top:1002.9px;">
<svg class="fi" style="left:51px" viewBox="0 0 20 20"><path d="M10 1l9 9-9 9-9-9z" fill="#e64a19"/><circle cx="10" cy="6" r="1.5" fill="#fff"/><circle cx="10" cy="13" r="1.5" fill="#fff"/><path d="M10 6v7M10 6l3 3" stroke="#fff" stroke-width="1.2"/></svg>
<div class="nm" style="left:82px;color:#cccccc">.gitignore</div>
</div>
<div class="row" style="top:1034.7px;">
<div class="fi" style="left:51px;color:#e8cf3c;font-weight:bold;font-size:15px;line-height:20px;letter-spacing:-0.5px">JS</div>
<div class="nm" style="left:82px;color:#cccccc">main.js</div>
</div>
<div class="row" style="top:1066.3px;">
<svg class="fi" style="left:51px" viewBox="0 0 20 20"><rect x="1" y="1" width="18" height="18" fill="#cb3837"/><path d="M5 16V5h10v11h-3V8h-3v8z" fill="#fff"/></svg>
<div class="nm" style="left:82px;color:#cccccc">package.json</div>
</div>
<div class="row" style="top:1098.1px;">
<svg class="fi" style="left:51px" viewBox="0 0 20 20"><rect x="1" y="1" width="18" height="18" fill="#cb3837"/><path d="M5 16V5h10v11h-3V8h-3v8z" fill="#fff"/></svg>
<div class="nm" style="left:82px;color:#cccccc">package-lock.json</div>
</div>
<div class="row" style="top:1129.8px;">
<div class="fi" style="left:51px;color:#e8cf3c;font-weight:bold;font-size:15px;line-height:20px;letter-spacing:-0.5px">JS</div>
<div class="nm" style="left:82px;color:#cccccc">preload.js</div>
</div>
<div class="row" style="top:1161.5px;">
<svg class="fi" style="left:51px" viewBox="0 0 20 20"><rect x="0.5" y="4.5" width="19" height="11" rx="1" stroke="#7a6a4a" fill="none"/><text x="2" y="13" font-size="8" font-weight="bold" fill="#8a7a5a" font-family="Liberation Sans">M↓</text></svg>
<div class="nm" style="left:82px;color:#cccccc">README.md</div>
</div>
<div class="abs" style="left:40px;top:559px;width:1px;height:63px;background:#585858"></div>
<div class="abs" style="left:263px;top:346px;width:12px;height:12px;border-radius:6px;background:#73644c"></div>
<div class="sect" style="top:1224px"><svg class="chev" style="left:13px;top:7px" width="11" height="17" viewBox="0 0 11 17"><path d="M2 1.5l6.5 7L2 15.5" stroke="#cccccc" stroke-width="1.4" fill="none"/></svg><span>OUTLINE</span></div>
<div class="sect" style="top:1256px"><svg class="chev" style="left:13px;top:7px" width="11" height="17" viewBox="0 0 11 17"><path d="M2 1.5l6.5 7L2 15.5" stroke="#cccccc" stroke-width="1.4" fill="none"/></svg><span>TIMELINE</span></div>
<div class="sect" style="top:1288px"><svg class="chev" style="left:13px;top:7px" width="11" height="17" viewBox="0 0 11 17"><path d="M2 1.5l6.5 7L2 15.5" stroke="#cccccc" stroke-width="1.4" fill="none"/></svg><span>RUNNING TASKS</span></div>
</div>
<div id="edtabs">
<div class="etab" style="left:0px;width:252px;background:#1f1f1f;border-top:2px solid #0078d4;">
<div class="abs" style="left:18px;top:13px;color:#e8cf3c;font-weight:bold;font-size:15px;letter-spacing:-0.5px">JS</div>
<div class="nm" style="left:47px;top:14px;color:#e2c08d">ScreenshotApp.js M</div>
<svg class="abs" style="left:227px;top:17px" width="15" height="15" viewBox="0 0 15 15"><path d="M1 1l13 13M14 1L1 14" stroke="#ffffff" stroke-width="1.6"/></svg>
</div>
<div class="etab" style="left:252px;width:225px;">
<div class="abs" style="left:18px;top:15px;color:#e8cf3c;font-weight:bold;font-size:15px;letter-spacing:-0.5px">JS</div>
<div class="nm" style="left:47px;color:#9d9d9d">AddTaskModal.js</div>
</div>
<div class="etab" style="left:477px;width:173px;">
<div class="abs" style="left:18px;top:15px;color:#e8cf3c;font-weight:bold;font-size:15px;letter-spacing:-0.5px">JS</div>
<div class="nm" style="left:47px;color:#9d9d9d">toaster.js</div>
</div>
<div class="etab" style="left:650px;width:232px;">
<svg class="abs" style="left:17px;top:15px" width="20" height="20" viewBox="0 0 20 20"><path d="M2 3c0-1 1-2 2-2h12c1 0 2 1 2 2v13c0 1-1 2-2 2H4c-1 0-2-1-2-2z" fill="#6f42c1"/><text x="3.5" y="16" font-size="7.5" font-weight="bold" fill="#fff" font-family="Liberation Sans">CSS</text></svg>
<div class="nm" style="left:47px;color:#9d9d9d">addtaskmodal.css</div>
</div>
<div class="etab" style="left:882px;width:177px;">
<svg class="abs" style="left:17px;top:15px" width="20" height="20" viewBox="0 0 20 20"><path d="M2 3c0-1 1-2 2-2h12c1 0 2 1 2 2v13c0 1-1 2-2 2H4c-1 0-2-1-2-2z" fill="#6f42c1"/><text x="3.5" y="16" font-size="7.5" font-weight="bold" fill="#fff" font-family="Liberation Sans">CSS</text></svg>
<div class="nm" style="left:47px;color:#9d9d9d">sidebar.css</div>
</div>
<div class="etab" style="left:1059px;width:171px;border-right:none;">
<svg class="abs" style="left:17px;top:15px" width="20" height="20" viewBox="0 0 20 20"><path d="M2 3c0-1 1-2 2-2h12c1 0 2 1 2 2v13c0 1-1 2-2 2H4c-1 0-2-1-2-2z" fill="#6f42c1"/><text x="3.5" y="16" font-size="7.5" font-weight="bold" fill="#fff" font-family="Liberation Sans">CSS</text></svg>
<div class="nm" style="left:47px;color:#9d9d9d">screenshot</div>
</div>
<svg class="abs" style="left:1206px;top:16px" width="22" height="22" viewBox="0 0 22 22"><path d="M3 2l16 9-16 9z" stroke="#cccccc" stroke-width="1.6" stroke-linejoin="round" fill="none"/></svg>
<svg class="abs" style="left:1242px;top:15px" width="23" height="23" viewBox="0 0 23 23"><circle cx="4.5" cy="4" r="2.6" stroke="#cccccc" stroke-width="1.5" fill="none"/><circle cx="18" cy="19" r="2.6" stroke="#cccccc" stroke-width="1.5" fill="none"/><path d="M4.5 7v8c0 3 2 4 4 4h4M10 16l3 3-3 3M18 16V8c0-3-2-4-4-4H11M13 1l-3 3 3 3" stroke="#cccccc" stroke-width="1.5" fill="none"/></svg>
<svg class="abs" style="left:1280px;top:16px" width="22" height="22" viewBox="0 0 22 22"><rect x="1.5" y="1.5" width="19" height="19" rx="1.5" stroke="#cccccc" stroke-width="1.5" fill="none"/><path d="M11 1.5v19" stroke="#cccccc" stroke-width="1.5"/></svg>
<svg class="abs" style="left:1318px;top:23px" width="20" height="6" viewBox="0 0 20 6"><circle cx="3" cy="3" r="1.9" fill="#cccccc"/><circle cx="10" cy="3" r="1.9" fill="#cccccc"/><circle cx="17" cy="3" r="1.9" fill="#cccccc"/></svg>
</div>
<div id="code">
<div class="abs" style="left:23px;top:8.4px;font-size:16.5px;color:#a9a9a9;white-space:nowrap">src</div><svg class="abs" style="left:54px;top:12px" width="9" height="13" viewBox="0 0 9 13"><path d="M1.5 1l5.5 5.5L1.5 12" stroke="#a9a9a9" stroke-width="1.3" fill="none"/></svg><div class="abs" style="left:69px;top:7.6px;font-size:17.99px;color:#a9a9a9;white-space:nowrap">pages</div><svg class="abs" style="left:126px;top:12px" width="9" height="13" viewBox="0 0 9 13"><path d="M1.5 1l5.5 5.5L1.5 12" stroke="#a9a9a9" stroke-width="1.3" fill="none"/></svg><div class="abs" style="left:144px;top:8px;color:#e8cf3c;font-weight:bold;font-size:17px;letter-spacing:-0.5px">JS</div><div class="abs" style="left:173px;top:7.6px;font-size:17.99px;color:#a9a9a9;white-space:nowrap">ScreenshotApp.js</div><svg class="abs" style="left:324px;top:12px" width="9" height="13" viewBox="0 0 9 13"><path d="M1.5 1l5.5 5.5L1.5 12" stroke="#a9a9a9" stroke-width="1.3" fill="none"/></svg><svg class="abs" style="left:338px;top:9px" width="21" height="18" viewBox="0 0 21 18"><path d="M4 2H1.5v14H4M17 2h2.5v14H17" stroke="#75beff" stroke-width="1.5" fill="none"/><path d="M6 7l5-3 4 2v5l-5 3-4-2z" stroke="#75beff" stroke-width="1.4" fill="none"/><path d="M6 7l4 2 5-3M10 9v5" stroke="#75beff" stroke-width="1.2" fill="none"/></svg><div class="abs" style="left:365px;top:7.7px;font-size:17.7px;color:#a9a9a9;white-space:nowrap">ScreenshotApp</div><svg class="abs" style="left:497px;top:12px" width="9" height="13" viewBox="0 0 9 13"><path d="M1.5 1l5.5 5.5L1.5 12" stroke="#a9a9a9" stroke-width="1.3" fill="none"/></svg><svg class="abs" style="left:514px;top:9px" width="21" height="18" viewBox="0 0 21 18"><path d="M4 2H1.5v14H4M17 2h2.5v14H17" stroke="#75beff" stroke-width="1.5" fill="none"/><path d="M6 7l5-3 4 2v5l-5 3-4-2z" stroke="#75beff" stroke-width="1.4" fill="none"/><path d="M6 7l4 2 5-3M10 9v5" stroke="#75beff" stroke-width="1.2" fill="none"/></svg><div class="abs" style="left:541px;top:7.7px;font-size:17.81px;color:#a9a9a9;white-space:nowrap">handleTaskChange</div><svg class="abs" style="left:703px;top:12px" width="9" height="13" viewBox="0 0 9 13"><path d="M1.5 1l5.5 5.5L1.5 12" stroke="#a9a9a9" stroke-width="1.3" fill="none"/></svg><svg class="abs" style="left:718px;top:9px" width="21" height="18" viewBox="0 0 21 18"><path d="M4 2H1.5v14H4M17 2h2.5v14H17" stroke="#75beff" stroke-width="1.5" fill="none"/><path d="M6 7l5-3 4 2v5l-5 3-4-2z" stroke="#75beff" stroke-width="1.4" fill="none"/><path d="M6 7l4 2 5-3M10 9v5" stroke="#75beff" stroke-width="1.2" fill="none"/></svg><div class="abs" style="left:745px;top:7.7px;font-size:17.83px;color:#a9a9a9;white-space:nowrap">task</div><svg class="abs" style="left:787px;top:12px" width="9" height="13" viewBox="0 0 9 13"><path d="M1.5 1l5.5 5.5L1.5 12" stroke="#a9a9a9" stroke-width="1.3" fill="none"/></svg><svg class="abs" style="left:802px;top:8px" width="20" height="21" viewBox="0 0 20 21"><path d="M10 1.5l8 4.5v9l-8 4.5-8-4.5v-9z" stroke="#b180d7" stroke-width="1.5" fill="none"/><path d="M2 6l8 4.5L18 6M10 10.5v9" stroke="#b180d7" stroke-width="1.4" fill="none"/></svg><div class="abs" style="left:828.5px;top:7.4px;font-size:18.23px;color:#a9a9a9;white-space:nowrap">taskData.find() callback</div>
<div class="ln" style="top:65.5px">87</div><div class="cl" style="top:65.5px">      <span class="k">const</span> n = <span class="f">Number</span><span class="b3">(</span><span class="v">val</span><span class="b3">)</span>;</div>
<div class="ln" style="top:91.5px">88</div><div class="cl" style="top:91.5px">    <span class="r">return</span> <span class="t">Number</span>.<span class="f">isFinite</span><span class="b3">(</span><span class="v">n</span><span class="b3">)</span> ? <span class="v">Math</span>.<span class="f">max</span><span class="b3">(</span><span class="nu">0</span>, <span class="v">n</span><span class="b3">)</span> : <span class="nu">0</span>;</div>
<div class="ln" style="top:117.5px">89</div><div class="cl" style="top:117.5px">  <span class="b2">}</span>;</div>
<div class="ln" style="top:143.5px">90</div><div class="cl" style="top:143.5px">  <span class="k">const</span> <span class="f">formatDateYMD</span> = <span class="b2">(</span><span class="v">d</span><span class="b2">)</span> <span class="k">=&gt;</span> <span class="b2">{</span></div>
<div class="ln" style="top:169.5px">91</div><div class="cl" style="top:169.5px">    <span class="k">const</span> <span class="dt">dt</span> = <span class="v">d</span> <span class="k">instanceof</span> <span class="t">Date</span> ? <span class="v">d</span> : <span class="k">new</span> <span class="t">Date</span><span class="b3">(</span><span class="v">d</span><span class="b3">)</span>;</div>
<div class="ln" style="top:195.5px">92</div><div class="cl" style="top:195.5px">    <span class="r">return</span> <span class="s">`</span><span class="k">${</span><span class="dt">dt</span>.<span class="f">getFullYear</span><span class="b3">()</span><span class="k">}</span><span class="s">-</span><span class="k">${</span><span class="f">pad</span><span class="b3">(</span><span class="dt">dt</span>.<span class="f">getMonth</span><span class="b2">()</span> + <span class="nu">1</span><span class="b3">)</span><span class="k">}</span><span class="s">-</span><span class="k">${</span><span class="f">pad</span><span class="b1">(</span><span class="dt">dt</span>.<span class="f">getDate</span><span class="b2">()</span><span class="b1">)</span><span class="k">}</span><span class="s">`</span>;</div>
<div class="ln" style="top:221.5px">93</div><div class="cl" style="top:221.5px">  <span class="b2">}</span>;</div>
<div class="ln" style="top:247.5px">94</div><div class="cl" style="top:247.5px">  <span class="k">const</span> <span class="f">formatDateTime</span> = <span class="b2">(</span><span class="v">d</span><span class="b2">)</span> <span class="k">=&gt;</span> <span class="b2">{</span></div>
<div class="ln" style="top:273.5px">95</div><div class="cl" style="top:273.5px">    <span class="k">const</span> <span class="dt">dt</span> = <span class="v">d</span> <span class="k">instanceof</span> <span class="t">Date</span> ? <span class="v">d</span> : <span class="k">new</span> <span class="t">Date</span><span class="b3">(</span><span class="v">d</span><span class="b3">)</span>;</div>
<div class="ln" style="top:299.5px">96</div><div class="cl" style="top:299.5px">    <span class="r">return</span> <span class="s">`</span><span class="k">${</span><span class="f">formatDateYMD</span><span class="b1">(</span><span class="dt">dt</span><span class="b1">)</span><span class="k">}</span><span class="s"> </span><span class="k">${</span><span class="f">pad</span><span class="b1">(</span><span class="dt">dt</span>.<span class="f">getHours</span><span class="b2">()</span><span class="b1">)</span><span class="k">}</span><span class="s">:</span><span class="k">${</span><span class="f">pad</span><span class="b1">(</span></div>
<div class="ln" style="top:325.5px">97</div><div class="cl" style="top:325.5px">      <span class="dt">dt</span>.<span class="f">getMinutes</span><span class="b2">()</span></div>
<div class="cl" style="top:506px;left:781.8px"><span class="t">ng</span><span class="b1">(</span><span class="v">newId</span><span class="b1">)</span><span class="b3">)</span>;</div>
<div class="abs" style="left:0;top:33px;width:1222px;height:52px;background:#1f1f1f"></div><div class="abs" style="left:0;top:85px;width:1222px;height:4px;background:linear-gradient(rgba(0,0,0,.75),rgba(0,0,0,0))"></div>
<div class="ln" style="top:33px">30</div><div class="cl" style="top:33px"><span class="k">const</span> <span class="f">ScreenshotApp</span> = <span class="b1">()</span> <span class="k">=&gt;</span> <span class="b1">{</span></div>
<div class="ln" style="top:59px">85</div><div class="cl" style="top:59px">  <span class="k">const</span> <span class="f">toSeconds</span> = <span class="b2">(</span><span class="v">val</span><span class="b2">)</span> <span class="k">=&gt;</span> <span class="b2">{</span></div>
<div class="abs" style="left:95px;top:85px;width:1px;height:260px;background:#404040"></div>
<div class="abs" style="left:115px;top:90px;width:1px;height:26px;background:#404040"></div>
<div class="abs" style="left:115px;top:168px;width:1px;height:52px;background:#404040"></div>
<div class="abs" style="left:115px;top:272px;width:1px;height:80px;background:#404040"></div>
<div id="minimap" class="abs" style="left:1234px;top:33px;width:110px;height:993px"><svg width="110" height="993" viewBox="0 0 110 993" style="position:absolute;left:0;top:0"><path d="M2 5h2M5 5h8M2 11h8M11 11h5M17 11h4M27 11h11M14 13h7M26 13h11M4 15h7M17 15h5M22 21h9M13 27h7M31 27h11M15 31h9M6 35h5M12 35h4M17 35h5M23 35h11M8 39h2M21 39h2M8 41h11M8 43h3M32 43h6M8 47h10M8 55h6M8 57h9M17 63h7M26 65h2M8 69h2M8 71h5M14 71h5M21 73h4M19 75h10M24 79h2M27 79h6M19 87h7M14 89h9M21 91h8M30 91h7M38 91h7M10 97h3M10 103h7M26 103h3M10 109h3M10 111h11M17 113h5M10 115h2M10 123h4M31 123h6M10 127h5M16 127h6M23 127h4M10 129h5M16 129h2M19 129h3M23 129h11M35 129h2M35 131h9M10 135h10M10 137h3M10 139h10M10 143h10M10 145h6M22 149h4M10 153h9M20 153h10M20 155h2M10 159h10M41 159h4M24 161h7M14 165h11M15 173h10M22 175h5M8 177h4M18 179h10M29 179h3M16 183h9M26 183h7M8 185h3M8 187h2M24 189h5M12 191h2M15 191h4M21 193h3M10 195h11M22 195h10M20 197h10M10 199h2M23 199h8M6 203h3M16 203h5M22 203h5M28 203h6M16 209h7M12 213h3M16 213h6M17 215h8M26 215h9M11 217h8M19 223h3M25 225h4M2 227h11M8 229h4M27 229h7M0 233h4M2 235h7M10 235h6M17 235h5M6 237h8M6 239h7M14 239h6M21 239h2M0 253h5M4 255h10M15 255h10M2 265h4M7 265h10M14 267h10M25 267h7M33 267h10M44 267h3M2 269h6M25 273h9M35 273h5M2 275h3M6 275h5M12 279h9M9 281h8M23 281h7M4 287h3M19 287h4M28 287h3M4 289h5M13 291h9M34 291h9M12 305h2M2 309h2M2 311h10M13 311h11M25 311h4M25 319h5M31 319h2M34 319h10M0 327h10M20 327h9M30 327h9M0 331h2M6 333h2M7 335h7M4 339h11M16 339h4M21 339h2M4 343h2M8 345h8M17 345h5M23 345h2M4 347h4M15 349h6M8 353h6M14 361h10M25 361h4M0 365h7M10 371h7M0 373h5M22 373h6M29 373h11M12 375h4M17 375h5M0 377h3M0 379h6M7 379h3M7 381h4M12 381h8M0 385h8M0 391h10M0 393h10M28 393h9M2 401h11M14 401h5M2 403h9M14 407h5M9 411h8M4 413h11M16 413h2M6 415h5M36 417h6M20 419h10M21 421h2M12 423h3M24 423h2M13 429h7M15 431h5M29 431h10M40 431h6M29 433h7M37 433h6M4 437h8M16 441h11M40 441h3M14 449h7M12 467h2M15 467h11M36 473h6M4 477h9M6 481h4M2 491h5M8 491h5M20 493h3M24 493h11M6 495h2M6 497h11M8 499h3M6 503h8M26 503h5M6 511h2M14 513h8M33 513h9M13 521h2M11 523h4M8 525h9M18 525h10M16 529h6M12 531h9M22 531h10M41 531h8M15 533h4M4 539h4M22 541h9M2 543h5M8 543h7M2 545h10M2 551h3M6 551h4M4 553h2M12 557h2M16 563h8M13 571h10M6 573h5M9 575h2M12 575h11M24 575h11M6 577h3M10 577h10M27 577h6M6 581h6M30 581h10M6 583h10M6 585h8M6 587h6M13 587h7M14 589h9M6 591h2M6 597h10M15 599h7M4 601h10M15 601h9M25 607h9M15 609h7M33 609h6M10 613h2M39 623h3M6 625h10M6 627h10M6 629h8M15 633h11M27 633h2M4 637h3M8 637h3M10 639h4M18 641h2M28 645h3M4 647h8M13 647h9M12 655h7M20 655h2M4 657h5M14 659h5M20 659h7M4 661h10M4 663h10M30 663h8M4 667h7M12 667h3M4 669h5M10 669h6M17 669h6M19 671h4M12 675h3M16 675h3M21 681h2M4 687h5M9 689h5M15 689h10M26 689h10M6 693h4M6 697h6M9 701h5M15 701h6M6 709h11M28 709h9M8 715h5M14 715h2M10 717h4M38 717h7M10 719h5M27 721h3M31 721h5M10 725h2M10 729h9M19 731h11M33 737h8M42 737h5M30 743h10M16 745h3M10 753h6M10 761h9M17 763h9M10 765h9M20 771h2M8 775h11M10 777h2M13 777h11M8 779h8M23 789h7M31 789h5M22 791h11M24 793h11M15 801h3M22 801h11M8 803h2M19 809h7M10 811h8M44 811h7M10 813h4M15 813h4M10 821h10M32 821h6M10 827h10M21 827h4M10 829h9M10 835h2M10 837h2M13 837h8M22 837h7M10 839h9M10 841h6M17 841h7M22 843h9M11 845h9M8 849h6M15 849h7M15 853h2M13 855h7M21 855h3M6 857h2M9 857h10M6 861h3M10 861h4M8 863h10M10 869h2M16 871h3M21 879h11M33 879h4M10 881h10M21 881h7M24 883h8M6 887h3M15 891h8M24 891h10M6 895h6M13 895h9M2 901h7M16 901h3M2 909h3M0 919h2M3 919h10M14 919h6M21 919h8M0 921h6M0 923h6M7 923h4M33 923h11M11 925h7M0 931h5M0 937h4M0 939h10M11 939h3M0 945h8M12 945h4M17 945h9M0 951h3M18 951h8M27 951h7M0 953h10M31 953h3M0 955h5M0 963h2M4 965h9M14 965h10M0 967h2M9 969h7M9 971h9M2 973h3M2 979h2M2 983h5M8 983h4M4 987h3M8 987h11" stroke="#4f7fa8" stroke-width="1.1" opacity="0.7"/><path d="M38 13h10M23 15h6M16 17h3M10 21h11M21 27h9M6 31h8M35 37h2M38 37h10M11 39h5M17 39h3M22 43h9M19 47h10M19 49h6M26 49h4M31 49h5M8 53h5M18 57h5M11 69h3M10 73h10M30 75h4M34 79h3M10 81h9M10 83h6M23 85h4M28 85h8M10 89h3M10 91h10M10 93h8M19 101h6M21 103h4M14 109h3M10 113h6M24 115h5M36 117h5M8 125h6M15 131h11M24 139h5M30 139h2M20 147h3M10 155h5M25 159h5M31 159h9M10 161h4M15 161h8M10 165h3M8 169h10M8 173h6M15 175h6M8 179h9M21 181h8M12 185h5M25 193h6M10 197h9M8 201h5M10 203h5M6 205h9M7 207h4M4 213h7M4 215h5M20 217h2M6 219h7M14 227h7M2 229h5M5 233h8M0 237h5M15 237h5M0 241h7M0 245h7M0 251h7M26 255h4M18 257h7M2 263h3M2 277h3M4 279h7M25 279h9M18 281h4M4 293h4M4 299h6M19 299h7M22 305h8M2 315h6M2 319h11M0 323h5M26 323h4M0 329h3M2 337h10M24 337h2M4 349h7M12 349h2M4 351h10M25 351h2M28 351h3M2 357h2M2 361h11M17 365h3M0 367h6M7 367h10M16 373h5M0 375h11M11 379h8M20 379h2M0 381h6M7 387h9M11 391h5M11 393h7M0 395h11M2 399h3M21 403h5M10 405h8M4 407h9M4 409h4M9 409h6M16 409h6M23 409h9M12 415h9M8 419h6M15 419h4M4 421h5M24 421h7M4 423h7M4 427h10M21 431h7M6 443h2M9 449h4M34 449h2M14 451h8M21 453h2M2 463h2M14 469h7M9 471h3M4 473h9M24 473h11M27 475h11M39 475h5M14 477h2M22 481h9M11 483h8M2 485h8M14 491h6M21 491h11M18 497h6M15 499h9M8 501h6M15 503h4M6 513h7M23 513h9M28 519h3M8 521h4M2 523h8M4 525h3M4 527h7M4 531h7M33 531h7M11 541h2M14 541h7M2 547h9M4 557h3M15 557h9M4 559h3M4 563h11M13 565h11M10 571h2M13 581h11M25 581h4M15 585h7M32 587h11M6 595h10M6 599h8M25 601h4M4 605h9M23 609h9M8 611h7M15 615h8M4 621h10M16 623h11M17 627h5M6 635h10M12 637h10M4 639h5M4 641h3M30 641h2M4 645h6M4 649h7M6 651h7M6 653h3M6 655h5M23 655h2M28 659h8M4 679h4M9 681h11M18 685h3M10 687h3M14 687h8M31 687h9M4 689h4M18 697h5M6 701h2M8 705h7M16 705h11M22 717h7M30 717h7M25 725h10M19 727h3M28 727h4M33 727h2M20 729h7M34 733h7M18 737h8M15 743h10M17 753h4M20 761h11M10 763h6M35 771h11M10 773h11M22 773h7M25 775h9M35 775h9M45 775h7M6 785h3M14 787h8M6 789h10M21 821h10M10 825h5M26 827h11M43 827h4M28 829h8M13 835h8M6 851h8M20 857h10M31 857h3M10 867h8M19 867h10M30 867h4M32 871h2M31 873h2M34 873h9M10 875h8M19 875h3M13 883h2M6 885h7M17 887h3M4 889h4M4 891h10M19 897h8M13 899h6M10 901h5M20 901h9M30 901h10M16 905h9M26 905h4M19 925h3M16 937h4M9 949h7M9 951h8M11 953h9M3 963h7M11 963h5M5 971h3M6 973h6M2 977h2M13 977h6" stroke="#b5b38a" stroke-width="1.1" opacity="0.7"/><path d="M2 9h5M22 11h4M2 13h11M22 13h3M12 15h4M2 21h7M8 37h7M20 41h5M26 41h4M15 49h3M20 67h9M38 75h4M10 77h9M20 77h3M37 85h3M23 113h10M13 115h10M10 117h9M29 117h6M24 123h6M10 131h4M45 131h11M14 137h4M21 139h2M31 147h11M8 149h6M15 149h6M10 157h3M10 167h6M8 191h3M20 191h2M10 193h10M22 201h7M2 217h2M13 229h3M17 229h9M2 231h6M21 237h5M27 237h3M0 243h3M2 273h4M7 273h5M6 277h9M16 277h6M22 279h2M4 283h2M10 289h7M44 291h6M9 293h6M8 295h2M11 299h7M15 305h6M0 321h2M6 323h10M3 331h10M13 337h10M27 337h5M15 351h6M4 353h3M0 369h10M11 369h11M0 371h9M6 373h9M12 383h4M2 405h7M19 413h3M4 417h4M21 417h3M4 419h3M10 421h10M16 423h7M4 429h8M5 441h10M2 443h3M22 449h11M2 451h11M23 451h2M26 451h11M2 453h8M11 453h3M4 469h9M11 481h10M32 481h3M4 483h6M2 489h8M12 493h7M12 499h2M17 511h5M23 511h6M4 521h3M16 521h9M29 525h5M9 539h11M21 539h5M16 543h7M29 545h8M4 555h11M4 565h8M34 577h7M21 587h10M6 589h7M4 607h11M4 609h10M13 613h6M4 615h10M4 617h11M17 625h6M23 627h2M17 635h4M22 635h8M23 637h9M33 637h2M8 641h9M21 641h8M15 661h9M25 661h6M32 661h9M15 663h3M19 663h3M9 679h2M12 679h4M31 681h11M23 687h7M37 689h5M11 693h9M13 697h4M6 699h4M16 719h3M15 721h11M10 733h11M22 733h11M24 735h5M10 737h7M27 737h5M17 741h5M23 741h5M33 741h11M26 743h3M10 745h5M22 753h3M26 753h5M32 761h7M28 779h7M23 785h4M6 791h8M10 797h4M11 803h10M10 809h8M36 809h3M32 811h11M22 817h4M27 817h11M39 821h2M10 843h11M6 853h2M10 865h9M10 873h10M10 877h3M14 877h10M10 879h10M8 883h4M4 899h8M2 903h3M2 907h8M11 907h6M2 913h5M2 917h2M30 919h6M12 923h10M23 923h9M0 925h10M6 929h11M18 947h7M14 957h2M0 969h8M0 971h4M20 987h5" stroke="#7fa9c4" stroke-width="1.1" opacity="0.7"/><path d="M2 1h3M20 17h4M2 19h3M4 25h2M6 27h6M15 33h6M8 51h11M20 51h5M14 53h7M27 55h9M8 61h8M8 63h8M8 65h8M17 65h3M8 67h11M10 75h8M10 79h9M17 83h10M17 85h5M18 103h2M22 111h10M19 119h2M27 131h7M21 135h10M32 135h11M44 135h2M24 147h6M23 155h3M14 157h4M21 159h3M10 163h5M26 165h8M19 169h7M8 175h6M8 181h6M8 183h7M11 187h8M18 189h5M14 201h7M4 209h7M24 209h10M10 215h6M5 217h5M4 221h6M4 223h2M2 225h8M11 225h8M14 233h5M20 233h3M0 239h5M0 255h3M11 257h6M2 261h8M12 275h10M4 281h4M4 295h3M2 303h6M4 305h7M5 313h5M14 319h10M17 323h8M11 327h8M2 335h4M26 345h3M22 351h2M0 363h9M27 381h8M0 389h7M8 389h8M19 393h8M17 403h3M25 417h10M4 431h10M19 433h9M4 435h8M2 441h2M5 463h4M9 467h2M12 475h2M15 475h11M6 479h6M36 481h9M25 497h9M47 497h6M9 511h7M4 515h9M10 519h4M19 519h8M16 523h11M13 529h2M4 533h10M2 541h8M13 545h7M21 545h7M8 557h3M34 565h2M6 567h8M15 567h11M27 567h7M6 575h2M40 609h6M4 611h3M24 615h10M28 623h10M6 633h8M4 659h9M23 663h6M4 665h8M4 671h9M20 675h11M4 685h5M10 685h7M21 693h5M11 699h9M17 715h8M15 717h6M10 741h6M29 741h3M10 755h7M18 755h7M17 767h8M23 771h11M20 775h4M10 785h6M17 789h5M34 791h6M8 795h8M17 795h3M34 801h3M27 809h8M20 813h10M39 817h5M45 817h6M37 829h7M20 839h11M8 845h2M9 853h5M6 855h3M10 871h5M20 871h11M25 877h11M16 883h7M21 887h9M4 897h11M16 897h2M5 917h8M23 925h11M0 929h5M5 937h10M21 937h6M0 947h10M4 951h4M0 965h3M26 977h5M26 987h10M37 987h2M6 991h11M18 991h4" stroke="#a7a7a7" stroke-width="1.1" opacity="0.7"/><path d="M6 33h8M26 73h7M35 75h2M20 79h3M10 87h3M10 101h8M15 123h8M10 147h9M27 169h8M13 177h10M15 181h5M13 199h9M2 219h3M13 273h11M8 287h10M6 291h6M31 305h7M2 333h3M4 345h3M8 365h8M0 383h11M0 387h6M17 391h3M18 411h11M4 433h6M28 441h11M2 449h6M15 453h5M2 457h5M4 475h7M11 489h6M33 491h10M4 493h7M25 499h3M2 519h7M4 529h8M4 571h5M16 607h8M26 621h4M4 623h11M24 625h10M24 671h7M4 675h7M24 681h6M20 719h8M10 723h2M13 725h11M10 727h8M23 727h4M10 735h10M21 735h2M10 739h5M10 743h4M10 767h6M26 767h11M10 771h9M8 781h10M17 785h5M6 787h7M21 795h7M8 801h6M19 811h9M10 817h11M38 827h4M20 829h7M32 839h9M32 843h2M23 895h9M20 899h8M11 905h4M19 917h2M6 931h8M21 953h9M35 953h6" stroke="#a57aa1" stroke-width="1.1" opacity="0.7"/><path d="M16 37h7M24 37h10M15 55h11M37 55h7M8 59h9M10 85h6M14 87h4M16 155h3M36 169h8M8 171h2M41 189h3M16 205h2M12 209h3M36 215h10M7 223h11M20 225h4M2 257h8M11 261h5M2 267h11M2 313h2M24 339h11M30 361h5M21 381h5M20 401h8M12 403h4M4 411h4M2 467h6M14 473h9M32 503h6M15 519h3M32 541h8M21 577h5M41 581h6M15 621h10M4 643h4M14 671h4M2 681h6M18 709h9M49 767h6M15 791h6M8 793h3M12 793h11M29 811h2M16 825h3M22 835h8M19 863h10M13 869h10M29 899h4M9 945h2M11 947h6M2 957h11M5 977h7" stroke="#4a9a86" stroke-width="1.1" opacity="0.7"/><path d="M4 17h11M12 43h9M8 49h6M21 65h4M10 95h3M33 111h3M20 117h8M10 119h8M27 155h9M20 187h9M8 189h9M30 189h10M4 207h2M9 269h2M24 287h3M23 291h10M11 295h7M4 297h6M9 315h6M14 331h10M36 339h7M18 367h8M4 377h4M9 417h11M11 433h7M4 471h4M35 497h11M20 503h5M12 527h6M25 565h8M4 613h5M11 645h6M18 645h9M12 649h2M6 707h9M10 721h4M10 731h8M38 767h10M47 771h9M17 779h10M28 785h6M19 801h2M21 845h4M10 855h2M6 859h7M21 873h9M10 887h6M2 905h8M14 917h4M0 949h8M20 977h5" stroke="#b08a6e" stroke-width="1.1" opacity="0.7"/><path d="M0 249h33M2 271h39M4 341h14M2 447h37M6 507h39M2 517h39M6 569h26M4 619h12M4 677h11M6 691h21M6 711h39M10 747h17M10 757h18M8 799h11M10 807h20M10 819h30M10 833h35M10 847h13M4 893h15M4 985h22" stroke="#5c8f4f" stroke-width="1.1" opacity="0.7"/></svg></div>
<div class="abs" style="left:1341px;top:33px;width:19px;height:993px;background:#1f1f1f;border-left:1px solid #2b2b2b"></div>
<div class="abs" style="left:1341px;top:156px;width:19px;height:2px;background:#777"></div><div class="abs" style="left:1347px;top:153px;width:7px;height:7px;background:#c4a0c8"></div>
<div class="abs" style="left:1341px;top:458px;width:5px;height:9px;background:#2ea043"></div>
</div>
<div id="panel">
<div class="term" style="top:65.5px">PS C:\Users\User\Documents\Sourav\screenelectron> <span style="color:#e5e53a">npm</span> run dev</div>
<div class="abs" style="left:14px;top:92.5px;width:1320px;height:2px;background:#101010"></div>
<div class="term" style="top:94.5px">[1] Handling get-idle-time request...</div>
<div class="term" style="top:119.5px">[1] Handling get-idle-time request...</div>
<div class="term" style="top:144.5px">[1] Handling get-idle-time request...</div>
<div class="term" style="top:169.5px">[1] Handling get-idle-time request...</div>
<div class="term" style="top:194.5px">[1] Handling get-idle-time request...</div>
<div class="term" style="top:219.5px">[1] Handling get-idle-time request...</div>
<div class="abs" style="left:28px;top:219.5px;width:11px;height:25px;border:1px solid #cccccc"></div>
<div class="abs" style="left:0;top:0;width:1px;height:243px;background:#2b2b2b"></div>
<div class="abs" style="left:1343px;top:80px;width:17px;height:163px;border-left:1px solid #2b2b2b"></div>
<div class="abs" style="left:1347px;top:151px;width:8px;height:10px;background:#5a5a5a"></div>
<svg class="abs" style="left:1014px;top:16px" width="22" height="22" viewBox="0 0 22 22"><rect x="1.5" y="1.5" width="19" height="19" rx="1.5" stroke="#cccccc" stroke-width="1.4" fill="none"/><path d="M5 6l4 4-4 4M10 15h6" stroke="#cccccc" stroke-width="1.4" fill="none"/></svg>
<div class="abs" style="left:1041px;top:15px;font-size:16.5px;color:#cccccc">node</div>
<svg class="abs" style="left:1093px;top:16px" width="22" height="22" viewBox="0 0 22 22"><path d="M11 2v18M2 11h18" stroke="#cccccc" stroke-width="1.6"/></svg>
<svg class="abs" style="left:1120px;top:23px" width="11" height="8" viewBox="0 0 11 8"><path d="M1 1l4.5 4.5L10 1" stroke="#cccccc" stroke-width="1.3" fill="none"/></svg>
<svg class="abs" style="left:1143px;top:16px" width="22" height="22" viewBox="0 0 22 22"><rect x="2" y="2" width="18" height="18" rx="2" stroke="#cccccc" stroke-width="1.5" fill="none"/><path d="M11 2v18" stroke="#cccccc" stroke-width="1.5"/></svg>
<svg class="abs" style="left:1180px;top:15px" width="22" height="24" viewBox="0 0 22 24"><path d="M2 5h18M8 5V2h6v3M4 5l1 17h12l1-17M9 9v9M13 9v9" stroke="#cccccc" stroke-width="1.5" fill="none"/></svg>
<svg class="abs" style="left:1217px;top:25px" width="20" height="6" viewBox="0 0 20 6"><circle cx="3" cy="3" r="1.9" fill="#cccccc"/><circle cx="10" cy="3" r="1.9" fill="#cccccc"/><circle cx="17" cy="3" r="1.9" fill="#cccccc"/></svg>
<div class="abs" style="left:1256px;top:14px;width:1px;height:24px;background:#5a5a5a"></div>
<svg class="abs" style="left:1279px;top:16px" width="22" height="22" viewBox="0 0 22 22"><path d="M2 8V2h6M14 2h6v6M20 14v6h-6M8 20H2v-6" stroke="#cccccc" stroke-width="1.6" fill="none"/></svg>
<svg class="abs" style="left:1317px;top:17px" width="18" height="18" viewBox="0 0 18 18"><path d="M2 2l14 14M16 2L2 16" stroke="#cccccc" stroke-width="1.6"/></svg>
</div>
<div id="status">
<div class="abs" style="left:-1px;top:-1px;width:46px;height:32px;background:#0078d4"></div>
<svg class="abs" style="left:0;top:0" width="40" height="32" viewBox="0 0 40 32"><path d="M14.2 12.6l5.8 5.8-5.8 5.4M26.8 7.2l-5.4 5.4 5.4 6.1" stroke="#fff" stroke-width="1.3" fill="none"/></svg>
<svg class="abs" style="left:58px;top:6px" width="18" height="22" viewBox="0 0 18 22"><circle cx="4" cy="4" r="2.5" stroke="#cccccc" stroke-width="1.4" fill="none"/><circle cx="4" cy="18" r="2.5" stroke="#cccccc" stroke-width="1.4" fill="none"/><circle cx="14" cy="6" r="2.5" stroke="#cccccc" stroke-width="1.4" fill="none"/><path d="M4 7v8M14 9c0 4-8 3-10 6" stroke="#cccccc" stroke-width="1.4" fill="none"/></svg>
<div class="si" style="left:82px">main*</div>
<svg class="abs" style="left:132px;top:6px" width="20" height="20" viewBox="0 0 20 20"><path d="M3 9a7 7 0 0 1 13-3M17 11a7 7 0 0 1-13 3" stroke="#cccccc" stroke-width="1.5" fill="none"/><path d="M16 2v4h-4M4 18v-4h4" stroke="#cccccc" stroke-width="1.5" fill="none"/></svg>
<svg class="abs" style="left:741px;top:6px" width="14" height="22" viewBox="0 0 14 22"><circle cx="7" cy="11" r="4" stroke="#cccccc" stroke-width="1.6" fill="none"/><path d="M7 1v6M7 15v6" stroke="#cccccc" stroke-width="1.6"/></svg>
<div class="si" style="left:767px">Asiful Haque (2 months ago)</div>
<div class="si" style="left:1008px">Ln 104, Col 57 (1 selected)</div>
<div class="si" style="left:1230px">Spaces: 2</div>
<div class="si" style="left:1324px">UTF-8</div>
<div class="si" style="left:1392px">CRLF</div>
<div class="si" style="left:1482px">JavaScript</div>
<div class="si" style="left:1648px">Prettier</div>
<div class="si" style="left:1452px;top:4px;font-size:16px">{<span style="font-size:11px">&#x2297;</span></div>
<svg class="abs" style="left:1578px;top:6px" width="22" height="20" viewBox="0 0 22 20"><path d="M4 6c0-3 2-5 7-5s7 2 7 5v6c0 4-3 6-7 6s-7-2-7-6z" stroke="#cccccc" stroke-width="1.6" fill="none"/><circle cx="8" cy="10" r="1.3" fill="#cccccc"/><circle cx="14" cy="10" r="1.3" fill="#cccccc"/></svg>
<svg class="abs" style="left:1621px;top:8px" width="22" height="16" viewBox="0 0 22 16"><path d="M1 9l4 5 9-13M8 12l2 2 11-13" stroke="#cccccc" stroke-width="1.4" fill="none"/></svg>
</div>
</div>

<div id="rw">
<div id="rtitle">
<svg class="abs" style="left:8px;top:6px" width="16" height="16" viewBox="0 0 16 16"><rect width="16" height="16" fill="#f4f6f8"/><rect x="3" y="3" width="10" height="7" fill="#1e88c8"/><rect x="4" y="4" width="3" height="3" fill="#7fd07f"/><path d="M6 12h4v1H6z" fill="#333"/></svg>
<div class="abs" style="left:29px;top:7px;font-size:12px;color:#f2f2f2">React App</div>
<div class="abs" style="left:865px;top:14px;width:11px;height:1px;background:#e0e0e0"></div>
<div class="abs" style="left:910px;top:9px;width:10px;height:10px;border:1px solid #e0e0e0"></div>
<svg class="abs" style="left:956px;top:9px" width="11" height="11" viewBox="0 0 11 11"><path d="M0.5 0.5l10 10M10.5 0.5l-10 10" stroke="#e8e8e8" stroke-width="1.1"/></svg>
</div>
<div id="rmenu"><span style="left:6px">File</span><span style="left:36px">Edit</span><span style="left:69px">View</span><span style="left:107px">Window</span><span style="left:163px">Help</span></div>
<div id="rcontent">
<div id="rside"><div class="abs" style="left:7px;top:0;width:1px;height:685px;background:#18233a"></div></div>
<div class="abs" style="left:10px;top:18px;width:35px;height:36px;border-radius:8px;background:#1c2637"></div>
<div class="abs" style="left:19px;top:31px;width:16px;height:2px;background:#fff"></div><div class="abs" style="left:19px;top:36px;width:16px;height:2px;background:#fff"></div><div class="abs" style="left:19px;top:41px;width:16px;height:2px;background:#fff"></div>
<div class="rlbl" style="left:385px">Filter by Project:</div>
<div class="rlbl" style="left:532px">Choose Your Task:</div>
<div class="rsel" style="left:370px;width:145px;top:44px"><span style="font-size:18.2px;top:8px">All Projects</span><svg width="12" height="8" viewBox="0 0 12 8"><path d="M1.5 1.5l4.5 4.5 4.5-4.5" stroke="#d0d0d0" stroke-width="2" fill="none"/></svg></div>
<div class="rsel" style="left:525px;width:145px;top:44px"><span style="font-size:15.7px;top:10px">End-to-End Tests</span><svg width="12" height="8" viewBox="0 0 12 8"><path d="M1.5 1.5l4.5 4.5 4.5-4.5" stroke="#d0d0d0" stroke-width="2" fill="none"/></svg></div>
<div class="abs" style="left:0;width:984px;top:92px;text-align:center;padding-left:56px;font-size:14.7px;line-height:20.5px;color:#ef3b4b">You must finish the current task before<br>selecting a new one.</div>
<div id="thumb" class="abs" style="left:149px;top:163px;width:742px;height:311px;overflow:hidden;background:#fff"><div class="abs" style="left:0;top:0;width:3440px;height:1440px;transform:scale(0.215698);transform-origin:0 0">
<div id="browser">
<div class="abs" style="left:0;top:0;width:2px;height:1400px;background:#1f8ad2;z-index:50"></div>
<div id="tabstrip">
<div class="abs" style="left:8px;top:5px;width:28px;height:28px;border-radius:8px;background:#3a4038"></div>
<svg class="abs" style="left:16px;top:14px" width="12" height="10" viewBox="0 0 12 10"><path d="M2 3l4 4 4-4" stroke="#dfe3da" stroke-width="1.8" fill="none"/></svg>
<div class="tab" style="left:39px"><svg class="ic" viewBox="0 0 16 16"><circle cx="8" cy="8" r="6" fill="none" stroke="#d5dacd" stroke-width="1.6"/><circle cx="8" cy="8" r="2.5" fill="none" stroke="#d5dacd" stroke-width="1.4"/></svg><div class="tt">Activ</div><div class="x">&#x2715;</div><div class="sep"></div></div>
<div class="tab" style="left:136px"><svg class="ic" viewBox="0 0 16 16"><circle cx="8" cy="8" r="7.5" fill="#25d366"/><circle cx="8" cy="8" r="5" fill="none" stroke="#fff" stroke-width="1.3"/></svg><div class="tt">What</div><div class="x">&#x2715;</div><div class="sep"></div></div>
<div class="tab" style="left:233px"><svg class="ic" viewBox="0 0 16 16"><rect x="0" y="2.5" width="16" height="11" rx="3" fill="#ff0033"/><path d="M6.5 5.5v5l4-2.5z" fill="#fff"/></svg><div class="tt">(1</div><div class="x">&#x2715;</div><div class="sep"></div></div>
<div class="tab" style="left:330px"><svg class="ic" viewBox="0 0 16 16"><rect x="0" y="0" width="16" height="16" fill="#fff"/><rect x="1.5" y="1.5" width="13" height="13" fill="#f0a020"/></svg><div class="tt">Javas</div><div class="x">&#x2715;</div><div class="sep"></div></div>
<div class="tab" style="left:427px"><svg class="ic" viewBox="0 0 16 16"><circle cx="8" cy="8" r="6" fill="none" stroke="#d5dacd" stroke-width="1.6"/><circle cx="8" cy="8" r="2.5" fill="none" stroke="#d5dacd" stroke-width="1.4"/></svg><div class="tt">Pass</div><div class="x">&#x2715;</div><div class="sep"></div></div>
<div class="tab" style="left:524px"><svg class="ic" viewBox="0 0 16 16"><path d="M3 15C1 11 2 4 6 1c3 3 2 5 2 5s3-2 6 1c1 4-2 8-6 8z" fill="#e8459a"/><path d="M8 15c3 0 6-3 6-7-3-1-6 2-6 7z" fill="#6b5cf0"/></svg><div class="tt">insig</div><div class="x">&#x2715;</div><div class="sep"></div></div>
<div class="tab" style="left:621px"><svg class="ic" viewBox="0 0 16 16"><rect width="16" height="16" rx="2" fill="#151515"/><circle cx="5" cy="4" r="1.5" fill="#ddd"/><circle cx="5" cy="12" r="1.5" fill="#ddd"/><circle cx="11" cy="5" r="1.5" fill="#ddd"/><path d="M5 5v6M11 6c0 3-6 2-6 5" stroke="#ddd" fill="none"/></svg><div class="tt">Task</div><div class="x">&#x2715;</div><div class="sep"></div></div>
<div class="tab" style="left:718px"><svg class="ic" viewBox="0 0 16 16"><rect width="16" height="16" rx="2" fill="#151515"/><circle cx="5" cy="4" r="1.5" fill="#ddd"/><circle cx="5" cy="12" r="1.5" fill="#ddd"/><circle cx="11" cy="5" r="1.5" fill="#ddd"/><path d="M5 5v6M11 6c0 3-6 2-6 5" stroke="#ddd" fill="none"/></svg><div class="tt">new</div><div class="x">&#x2715;</div><div class="sep"></div></div>
<div class="tab" style="left:815px"><svg class="ic" viewBox="0 0 16 16"><path d="M2 14L6 2l2 6 2-6 4 12z" fill="#f5a623"/><rect x="2" y="12" width="12" height="3" fill="#3b5bdb"/></svg><div class="tt">local</div><div class="x">&#x2715;</div><div class="sep"></div></div>
<div class="tab" style="left:912px"><svg class="ic" viewBox="0 0 16 16"><path d="M1 14C3 6 8 1 13 3c2 3 0 9-4 11-1-4-4-4-8 0z" fill="#26b5b0"/></svg><div class="tt">Appl</div><div class="x">&#x2715;</div><div class="sep"></div></div>
<div class="tab" style="left:1009px"><svg class="ic" viewBox="0 0 16 16"><path d="M1 14C3 6 8 1 13 3c2 3 0 9-4 11-1-4-4-4-8 0z" fill="#26b5b0"/></svg><div class="tt">Appl</div><div class="x">&#x2715;</div><div class="sep"></div></div>
<div class="tab" style="left:1106px"><svg class="ic" viewBox="0 0 16 16"><rect x="0" y="2.5" width="16" height="11" rx="3" fill="#ff0033"/><path d="M6.5 5.5v5l4-2.5z" fill="#fff"/></svg><div class="tt">(12) V</div><div class="x">&#x2715;</div></div>
<div class="abs" style="left:1206px;top:6px;width:91px;height:34px;background:#323e2d;border-radius:9px 9px 0 0"></div>
<div class="abs" style="left:1197px;top:31px;width:9px;height:9px;background:radial-gradient(circle at 0 0,#212b20 8.5px,#323e2d 9px)"></div>
<div class="abs" style="left:1297px;top:31px;width:9px;height:9px;background:radial-gradient(circle at 100% 0,#212b20 8.5px,#323e2d 9px)"></div>
<div class="tab" style="left:1203px"><svg class="ic" viewBox="0 0 16 16"><circle cx="8" cy="8" r="8" fill="#000"/><path d="M8 4l4 7H4z" fill="#fff"/></svg><div class="tt">Crea</div><div class="x">&#x2715;</div></div>
<div class="tab" style="left:1300px"><svg class="ic" viewBox="0 0 16 16"><rect x="6" y="1" width="4" height="4" fill="#9aa096"/><rect x="1" y="11" width="4" height="4" fill="#9aa096"/><rect x="11" y="11" width="4" height="4" fill="#9aa096"/><path d="M8 5v3M3 11V8h10v3" stroke="#9aa096" stroke-width="1.5" fill="none"/></svg><div class="tt">taskp</div><div class="x">&#x2715;</div><div class="sep"></div></div>
<div class="tab" style="left:1397px"><svg class="ic" viewBox="0 0 16 16"><circle cx="8" cy="8" r="7" fill="#c5cac0"/><path d="M4 3c2 2 1 4 3 5s0 4 2 6M10 2c0 2 3 2 4 4" stroke="#212b20" stroke-width="1.6" fill="none"/></svg><div class="tt">vpas</div><div class="x">&#x2715;</div></div>
<svg class="abs" style="left:281px;top:12px" width="13" height="14" viewBox="0 0 13 14"><path d="M1 5h3l4-3v10L4 9H1z" fill="#d5dacd"/><path d="M10 4c1.5 1.5 1.5 4.5 0 6" stroke="#d5dacd" stroke-width="1.3" fill="none"/></svg>
<div class="abs" style="left:1491px;top:13px;width:1px;height:15px;background:#4a5346"></div>
<svg class="abs" style="left:1502px;top:13px" width="14" height="14" viewBox="0 0 14 14"><path d="M7 0v14M0 7h14" stroke="#dfe3da" stroke-width="1.8"/></svg>
<div class="abs" style="left:1593px;top:20px;width:12px;height:1px;background:#c9cdc4"></div>
<div class="abs" style="left:1640px;top:15px;width:11px;height:11px;border:1px solid #c9cdc4"></div>
<svg class="abs" style="left:1686px;top:15px" width="11" height="11" viewBox="0 0 11 11"><path d="M0.5 0.5l10 10M10.5 0.5l-10 10" stroke="#c9cdc4" stroke-width="1"/></svg>
</div>
<div id="toolbar">
<svg class="abs" style="left:17px;top:16px" width="14" height="14" viewBox="0 0 14 14"><path d="M13 7H2M7 2L2 7l5 5" stroke="#c9cdc4" stroke-width="1.6" fill="none"/></svg>
<svg class="abs" style="left:53px;top:16px" width="14" height="14" viewBox="0 0 14 14"><path d="M1 7h11M7 2l5 5-5 5" stroke="#7c8578" stroke-width="1.6" fill="none"/></svg>
<svg class="abs" style="left:89px;top:15px" width="15" height="15" viewBox="0 0 15 15"><path d="M12.5 7.5A5 5 0 1 1 10.5 3.5" stroke="#c9cdc4" stroke-width="1.6" fill="none"/><path d="M9 1h4v4" stroke="#c9cdc4" stroke-width="1.6" fill="none"/></svg>
<div id="omni">
<div class="abs" style="left:5px;top:5px;width:24px;height:24px;border-radius:12px;background:#2f3b2b"></div>
<svg class="abs" style="left:9px;top:9px" width="16" height="16" viewBox="0 0 16 16"><circle cx="8" cy="8" r="6.5" stroke="#d5dacd" stroke-width="1.3" fill="none"/><path d="M8 7v4.5M8 4.5v1" stroke="#d5dacd" stroke-width="1.6"/></svg>
<div class="abs" style="left:37px;top:8px;font-size:13.7px;color:#e8ebe4">localhost:5500/tasks</div>
<svg class="abs" style="left:1137px;top:10px" width="20" height="14" viewBox="0 0 20 14"><circle cx="5" cy="7" r="4" stroke="#d5dacd" stroke-width="1.6" fill="none"/><path d="M9 7h9v3M15 7v2" stroke="#d5dacd" stroke-width="2" fill="none"/></svg>
<svg class="abs" style="left:1170px;top:8px" width="18" height="18" viewBox="0 0 18 18"><path d="M9 1.5l2.2 4.8 5.2.6-3.9 3.5 1.1 5.1L9 12.9l-4.6 2.6 1.1-5.1L1.6 6.9l5.2-.6z" stroke="#d5dacd" stroke-width="1.4" fill="none"/></svg>
</div>
<svg class="abs" style="left:1343px;top:13px" width="20" height="20" viewBox="0 0 20 20"><path d="M2 16C6 8 12 3 17 2c-1 6-6 11-14 14z" fill="#9b6ad6"/></svg>
<svg class="abs" style="left:1378px;top:13px" width="20" height="20" viewBox="0 0 20 20"><path d="M4 17l2-4 9-11 3 2-9 11z" fill="#e11"/><path d="M2 18l3-2-1-2z" fill="#222"/></svg>
<svg class="abs" style="left:1413px;top:13px" width="20" height="20" viewBox="0 0 20 20"><rect x="2" y="4" width="16" height="12" rx="2" fill="#3b82f6"/><circle cx="10" cy="10" r="3" fill="#fff"/><circle cx="10" cy="10" r="1.5" fill="#3b82f6"/></svg>
<svg class="abs" style="left:1448px;top:13px" width="20" height="20" viewBox="0 0 20 20"><rect x="2" y="3" width="16" height="14" rx="2" fill="#f5c518"/><text x="4" y="14" font-size="8" fill="#333">বং</text></svg>
<svg class="abs" style="left:1484px;top:13px" width="20" height="20" viewBox="0 0 20 20"><text x="2" y="15" font-size="15" font-weight="bold" fill="#1d4ed8">T</text><circle cx="14" cy="14" r="4" fill="#7fc241"/></svg>
<svg class="abs" style="left:1519px;top:13px" width="20" height="20" viewBox="0 0 20 20"><circle cx="10" cy="10" r="8" fill="#e11"/><path d="M7 14V7h6v7z" fill="#fff"/></svg>
<svg class="abs" style="left:1554px;top:13px" width="20" height="20" viewBox="0 0 20 20"><path d="M4 5h4V3h3v2h4v4h2v3h-2v4H4z" stroke="#d5dacd" stroke-width="1.6" fill="none"/></svg>
<svg class="abs" style="left:1609px;top:13px" width="20" height="20" viewBox="0 0 20 20"><path d="M2 5h10M2 9h8M2 13h6M14 4v9" stroke="#d5dacd" stroke-width="1.6" fill="none"/><circle cx="12.5" cy="13.5" r="2" fill="#d5dacd"/></svg>
<svg class="abs" style="left:1645px;top:13px" width="20" height="20" viewBox="0 0 20 20"><circle cx="10" cy="10" r="9" fill="#6b5a4e"/><circle cx="10" cy="8" r="4" fill="#3a2c24"/></svg>
<div class="abs" style="left:1585px;top:15px;width:1px;height:18px;background:#59645a"></div>
<svg class="abs" style="left:1686px;top:14px" width="6" height="18" viewBox="0 0 6 18"><circle cx="3" cy="3" r="1.7" fill="#d5dacd"/><circle cx="3" cy="9" r="1.7" fill="#d5dacd"/><circle cx="3" cy="15" r="1.7" fill="#d5dacd"/></svg>
</div>
<div id="page">
<div id="side">
<div class="abs" style="left:18px;top:17px;font-size:11.8px;color:#555">Your Sections</div>
<div class="nav" style="top:40px;"><svg width="15" height="15" viewBox="0 0 15 15"><path d="M2 13V6l5.5-4.5L13 6v7zM6 13V9h3v4" stroke="#222" stroke-width="1.4" fill="none"/></svg><span>Dashboard</span></div>
<div class="nav" style="top:76px;background:#f3f3f3;font-weight:bold;font-size:13px;"><svg width="15" height="15" viewBox="0 0 15 15"><rect x="1.5" y="1.5" width="12" height="12" rx="1.5" stroke="#222" stroke-width="1.4" fill="none"/><path d="M4.5 7.5l2.5 2.5 6-7" stroke="#222" stroke-width="1.4" fill="none"/></svg><span>Tasks</span></div>
<div class="nav" style="top:112px;"><svg width="15" height="15" viewBox="0 0 15 15"><rect x="1.5" y="2.5" width="12" height="11" rx="1.5" stroke="#222" stroke-width="1.4" fill="none"/><path d="M1.5 6h12M5 1v3M10 1v3" stroke="#222" stroke-width="1.4"/></svg><span>Meetings</span></div>
<div class="nav" style="top:148px;"><svg width="15" height="15" viewBox="0 0 15 15"><circle cx="6" cy="5" r="3" stroke="#222" stroke-width="1.4" fill="none"/><path d="M1 14c0-4 2-5 5-5s5 1 5 5M10 2a3 3 0 0 1 0 6M12 9c2 1 2.5 3 2.5 5" stroke="#222" stroke-width="1.4" fill="none"/></svg><span>Team</span></div>
<div class="nav" style="top:184px;"><svg width="15" height="15" viewBox="0 0 15 15"><rect x="1.5" y="2.5" width="12" height="11" rx="1.5" stroke="#222" stroke-width="1.4" fill="none"/><path d="M1.5 6h12M5 1v3M10 1v3" stroke="#222" stroke-width="1.4"/><path d="M4 8.5h1M7 8.5h1M10 8.5h1M4 11h1M7 11h1M10 11h1" stroke="#222" stroke-width="1.2"/></svg><span>Time Sheet</span></div>
<div class="nav" style="top:220px;"><svg width="15" height="15" viewBox="0 0 15 15"><path d="M11 4.5C10 3 9 2.8 7.5 2.8 5.5 2.8 4.2 3.8 4.2 5.3c0 3.4 7 1.8 7 5.2 0 1.5-1.5 2.5-3.6 2.5-1.8 0-3-.6-3.8-1.8M7.5 1v14" stroke="#222" stroke-width="1.5" fill="none"/></svg><span>Payroll</span></div>
<div class="nav" style="top:256px;"><svg width="15" height="15" viewBox="0 0 15 15"><circle cx="7.5" cy="7.5" r="6.3" stroke="#222" stroke-width="1.4" fill="none"/><path d="M7.5 4v4l2.5 1.5" stroke="#222" stroke-width="1.4" fill="none"/></svg><span>Manual Time</span></div>
<div class="abs" style="left:21px;top:1255px;width:38px;height:38px;border-radius:19px;background:#232323;border:1.5px solid #444;box-shadow:0 4px 10px rgba(0,0,0,.15);color:#fff;font-size:17px;text-align:center;line-height:35px">N</div>
</div>
<div class="card" style="top:-70px;height:142px">
<div class="ts" style="top:72.5px">Time Spent: <b>0s</b></div>
<div class="due" style="top:99.5px">Due: 2025-08-27 10:49:00</div>
</div>
<div class="card" style="top:89px;height:138.5px">
<div class="ttl">taskpro</div>
<div class="ts" style="top:69px">Time Spent: <b>0s</b></div>
<div class="due" style="top:96.0px">Due: 2025-08-19 10:57:00</div>
<div class="bdg" style="right:24px;width:106px;background:#dcfce7;border-color:#bbf7d0;color:#15803d"><svg width="13" height="13" viewBox="0 0 13 13" style="margin-right:8px"><rect x="1" y="1" width="11" height="11" rx="1.5" stroke="#15803d" stroke-width="1.2" fill="none"/><path d="M4 6.5l2 2 5-6" stroke="#15803d" stroke-width="1.2" fill="none"/></svg>COMPLETED</div>
<div class="bdg" style="right:138px;width:44px;background:#f3f4f6;border-color:#e5e7eb;color:#1f2937">LOW</div>
</div>
<div class="card" style="top:244.6px;height:138.5px">
<div class="ttl">Fix Memory Leak</div>
<div class="ts" style="top:69px">Time Spent: <b>0s</b></div>
<div class="due" style="top:96.0px">Due: 2025-08-26 18:00:00</div>
<div class="bdg" style="right:24px;width:106px;background:#dcfce7;border-color:#bbf7d0;color:#15803d"><svg width="13" height="13" viewBox="0 0 13 13" style="margin-right:8px"><rect x="1" y="1" width="11" height="11" rx="1.5" stroke="#15803d" stroke-width="1.2" fill="none"/><path d="M4 6.5l2 2 5-6" stroke="#15803d" stroke-width="1.2" fill="none"/></svg>COMPLETED</div>
<div class="bdg" style="right:138px;width:67px;background:#ffedd5;border-color:#fed7aa;color:#9a3412">MEDIUM</div>
</div>
<div class="card" style="top:400px;height:138.5px">
<div class="ttl">Optimize DB Queries</div>
<div class="ts" style="top:69px">Time Spent: <b>0s</b></div>
<div class="due" style="top:96.0px">Due: 2025-08-27 18:00:00</div>
<div class="bdg" style="right:24px;width:106px;background:#dcfce7;border-color:#bbf7d0;color:#15803d"><svg width="13" height="13" viewBox="0 0 13 13" style="margin-right:8px"><rect x="1" y="1" width="11" height="11" rx="1.5" stroke="#15803d" stroke-width="1.2" fill="none"/><path d="M4 6.5l2 2 5-6" stroke="#15803d" stroke-width="1.2" fill="none"/></svg>COMPLETED</div>
<div class="bdg" style="right:138px;width:67px;background:#ffedd5;border-color:#fed7aa;color:#9a3412">MEDIUM</div>
</div>
<div class="card" style="top:556px;height:138.5px">
<div class="ttl">Requirement Gathering</div>
<div class="ts" style="top:69px">Time Spent: <b>0s</b></div>
<div class="due" style="top:96.0px">Due: 2025-08-25 17:00:00</div>
<div class="bdg" style="right:24px;width:90px;background:#fef9c3;border-color:#fef08a;color:#854d0e"><svg width="13" height="13" viewBox="0 0 13 13" style="margin-right:8px"><circle cx="6.5" cy="6.5" r="5.5" stroke="#854d0e" stroke-width="1.2" fill="none"/><path d="M6.5 3.5v3l2 1.5" stroke="#854d0e" stroke-width="1.2" fill="none"/></svg>PENDING</div>
<div class="bdg" style="right:122px;width:48px;background:#fee2e2;border-color:#fecaca;color:#b91c1c">HIGH</div>
</div>
<div class="card" style="top:712.4px;height:147px">
<div class="ttl">trial from naim sheikh</div>
<div class="ts" style="top:69px">Time Spent: <b>0s</b></div>
<div class="sfr" style="top:95px">Submit for Review</div>
<div class="due" style="top:102px">Due: 2025-08-26 13:15:00</div>
<div class="bdg" style="right:24px;width:113px;background:#dbeafe;border-color:#bfdbfe;color:#1e40af"><svg width="13" height="13" viewBox="0 0 13 13" style="margin-right:8px"><circle cx="6.5" cy="6.5" r="5.5" stroke="#1e40af" stroke-width="1.2" fill="none"/><path d="M6.5 3.5v3.5M6.5 8.5v1" stroke="#1e40af" stroke-width="1.2" fill="none"/></svg>IN PROGRESS</div>
<div class="bdg" style="right:145px;width:48px;background:#fee2e2;border-color:#fecaca;color:#b91c1c">HIGH</div>
</div>
<div class="card" style="top:877px;height:138.5px">
<div class="ttl">test task - 34</div>
<div class="ts" style="top:69px">Time Spent: <b>0s</b></div>
<div class="due" style="top:96.0px">Due: 2025-08-28 15:46:00</div>
<div class="bdg" style="right:24px;width:106px;background:#dcfce7;border-color:#bbf7d0;color:#15803d"><svg width="13" height="13" viewBox="0 0 13 13" style="margin-right:8px"><rect x="1" y="1" width="11" height="11" rx="1.5" stroke="#15803d" stroke-width="1.2" fill="none"/><path d="M4 6.5l2 2 5-6" stroke="#15803d" stroke-width="1.2" fill="none"/></svg>COMPLETED</div>
<div class="bdg" style="right:138px;width:67px;background:#ffedd5;border-color:#fed7aa;color:#9a3412">MEDIUM</div>
</div>
<div class="card" style="top:1032px;height:147px">
<div class="ttl">Wireframe Design</div>
<div class="ts" style="top:69px">Time Spent: <b>0s</b></div>
<div class="sfr" style="top:95px">Submit for Review</div>
<div class="due" style="top:102px">Due: 2025-08-30 18:00:00</div>
<div class="bdg" style="right:24px;width:113px;background:#dbeafe;border-color:#bfdbfe;color:#1e40af"><svg width="13" height="13" viewBox="0 0 13 13" style="margin-right:8px"><circle cx="6.5" cy="6.5" r="5.5" stroke="#1e40af" stroke-width="1.2" fill="none"/><path d="M6.5 3.5v3.5M6.5 8.5v1" stroke="#1e40af" stroke-width="1.2" fill="none"/></svg>IN PROGRESS</div>
<div class="bdg" style="right:145px;width:67px;background:#ffedd5;border-color:#fed7aa;color:#9a3412">MEDIUM</div>
</div>
<div class="card" style="top:1196.3px;height:138.5px">
<div class="ttl">Feature Development</div>
<div class="ts" style="top:69px">Time Spent: <b>0s</b></div>
<div class="due" style="top:96.0px">Due: 2025-09-10 18:00:00</div>
<div class="bdg" style="right:24px;width:106px;background:#dcfce7;border-color:#bbf7d0;color:#15803d"><svg width="13" height="13" viewBox="0 0 13 13" style="margin-right:8px"><rect x="1" y="1" width="11" height="11" rx="1.5" stroke="#15803d" stroke-width="1.2" fill="none"/><path d="M4 6.5l2 2 5-6" stroke="#15803d" stroke-width="1.2" fill="none"/></svg>COMPLETED</div>
<div class="bdg" style="right:138px;width:48px;background:#fee2e2;border-color:#fecaca;color:#b91c1c">HIGH</div>
</div>
</div>
<div class="abs" style="left:0;top:1398px;width:1715px;height:2px;background:#3f6f86;z-index:60"></div>
<div id="scroll"><svg class="abs" style="left:3px;top:6px" width="10" height="6"><path d="M0 6L5 0l5 6z" fill="#9a9a9a"/></svg><div class="abs" style="left:4px;top:513px;width:8px;height:324px;border-radius:4px;background:#a3a3a3"></div><svg class="abs" style="left:3px;top:1300px" width="10" height="6"><path d="M0 0h10L5 6z" fill="#9a9a9a"/></svg></div>
</div>

<div id="vs">
<div id="vtitle">
<svg class="abs" style="left:9px;top:13px" width="25" height="24" viewBox="0 0 100 100"><path d="M96 10.8L75.4 1a6.2 6.2 0 0 0-7.1 1.2L29 38.1 11.9 25.1a4.2 4.2 0 0 0-5.3.2L1.1 30.3a4.2 4.2 0 0 0 0 6.2L15.9 50 1.1 63.5a4.2 4.2 0 0 0 0 6.2l5.5 5a4.2 4.2 0 0 0 5.3.2L29 61.9l39.3 35.9a6.2 6.2 0 0 0 7.1 1.2L96 89.2a6.2 6.2 0 0 0 3.5-5.6V16.4a6.2 6.2 0 0 0-3.5-5.6zM75 72.7L45.2 50 75 27.3z" fill="#2489ca"/><path d="M75 27.3L45.2 50 75 72.7V27.3zM96 10.8L75.4 1a6.2 6.2 0 0 0-7.1 1.2L75 27.3V72.7l-6.7 25.1a6.2 6.2 0 0 0 7.1 1.2L96 89.2a6.2 6.2 0 0 0 3.5-5.6V16.4a6.2 6.2 0 0 0-3.5-5.6z" fill="#1f9cf0"/></svg>
<div class="menu" style="left:58px">File</div>
<div class="menu" style="left:109px">Edit</div>
<div class="menu" style="left:163px">Selection</div>
<div class="menu" style="left:261px">View</div>
<div class="menu" style="left:324px">Go</div>
<svg class="abs" style="left:378px;top:22px" width="20" height="6" viewBox="0 0 20 6"><circle cx="3" cy="3" r="1.9" fill="#cccccc"/><circle cx="10" cy="3" r="1.9" fill="#cccccc"/><circle cx="17" cy="3" r="1.9" fill="#cccccc"/></svg>
<svg class="abs" style="left:463px;top:16px" width="20" height="18" viewBox="0 0 20 18"><path d="M19 9H2M9 2L2 9l7 7" stroke="#9d9d9d" stroke-width="1.4" fill="none"/></svg>
<svg class="abs" style="left:501px;top:16px" width="20" height="18" viewBox="0 0 20 18"><path d="M1 9h17M11 2l7 7-7 7" stroke="#9d9d9d" stroke-width="1.4" fill="none"/></svg>
<div class="abs" style="left:540px;top:8px;width:660px;height:34px;border-radius:7px;background:#262626;border:1px solid #3a3a3a"></div>
<svg class="abs" style="left:803px;top:16px" width="19" height="19" viewBox="0 0 19 19"><circle cx="7.5" cy="7.5" r="6" stroke="#cccccc" stroke-width="1.4" fill="none"/><path d="M12 12l6 6" stroke="#cccccc" stroke-width="1.5"/></svg>
<div class="abs" style="left:831px;top:15px;font-size:17px;color:#cccccc">screenelectron</div>
<svg class="abs" style="left:1218px;top:13px" width="24" height="22" viewBox="0 0 24 22"><path d="M2 3h12M2 3v13h4v4l4-4h7v-4" stroke="#cccccc" stroke-width="1.4" fill="none"/><path d="M18 1l1.5 3.5L23 6l-3.5 1.5L18 11l-1.5-3.5L13 6l3.5-1.5z" fill="#cccccc"/></svg>
<svg class="abs" style="left:1251px;top:20px" width="11" height="7" viewBox="0 0 11 7"><path d="M1 1l4.5 4.5L10 1" stroke="#cccccc" stroke-width="1.3" fill="none"/></svg>
<svg class="abs" style="left:1444px;top:14px" width="22" height="22" viewBox="0 0 22 22"><rect x="1.5" y="2.5" width="7" height="17" rx="1" stroke="#cccccc" stroke-width="1.4" fill="none"/><rect x="12" y="2.5" width="7" height="6" rx="1" stroke="#cccccc" stroke-width="1.4" fill="none"/><rect x="12" y="12.5" width="7" height="7" rx="1" stroke="#cccccc" stroke-width="1.4" fill="none"/></svg>
<svg class="abs" style="left:1481px;top:14px" width="22" height="22" viewBox="0 0 22 22"><rect x="1.5" y="2.5" width="19" height="17" rx="1.5" stroke="#cccccc" stroke-width="1.4" fill="none"/><rect x="1.5" y="2.5" width="7" height="17" fill="#cccccc"/></svg>
<svg class="abs" style="left:1518px;top:14px" width="22" height="22" viewBox="0 0 22 22"><rect x="1.5" y="2.5" width="19" height="17" rx="1.5" stroke="#cccccc" stroke-width="1.4" fill="none"/><rect x="1.5" y="13" width="19" height="6.5" fill="#cccccc"/></svg>
<svg class="abs" style="left:1556px;top:14px" width="22" height="22" viewBox="0 0 22 22"><rect x="1.5" y="2.5" width="19" height="17" rx="1.5" stroke="#cccccc" stroke-width="1.4" fill="none"/><path d="M13.5 2.5v17" stroke="#cccccc" stroke-width="1.4"/></svg>
<div class="abs" style="left:1605px;top:25px;width:11px;height:1px;background:#cccccc"></div>
<div class="abs" style="left:1651px;top:20px;width:10.5px;height:10.5px;border:1px solid #cccccc"></div>
<svg class="abs" style="left:1697px;top:20px" width="11" height="11" viewBox="0 0 11 11"><path d="M0.5 0.5l10 10M10.5 0.5l-10 10" stroke="#cccccc" stroke-width="1"/></svg>
</div>
<div id="act">
<svg class="abs" style="left:15px;top:18px" width="32" height="36" viewBox="-1 -1 26 30"><path d="M7 1h10l6 6v14H7z" stroke="#d7d7d7" stroke-width="1.8" fill="none"/><path d="M17 1v6h6" stroke="#d7d7d7" stroke-width="1.6" fill="none"/><path d="M7 8H1v19h14v-6" stroke="#d7d7d7" stroke-width="1.8" fill="none"/></svg>
<svg class="abs" style="left:16px;top:88.5px" width="34" height="34" viewBox="0 0 30 30"><circle cx="11" cy="11" r="8.5" stroke="#858585" stroke-width="1.8" fill="none"/><path d="M17 17l9 9" stroke="#858585" stroke-width="1.9"/></svg>
<svg class="abs" style="left:16px;top:157.5px" width="34" height="34" viewBox="0 0 30 30"><circle cx="7" cy="5" r="3.5" stroke="#858585" stroke-width="1.7" fill="none"/><circle cx="7" cy="25" r="3.5" stroke="#858585" stroke-width="1.7" fill="none"/><circle cx="20" cy="10" r="3.5" stroke="#858585" stroke-width="1.7" fill="none"/><path d="M7 9v12M20 14c0 5-9 4-12 8" stroke="#858585" stroke-width="1.7" fill="none"/></svg>
<svg class="abs" style="left:16px;top:226.5px" width="34" height="34" viewBox="0 0 30 30"><path d="M12 3v24l15-12z" stroke="#858585" stroke-width="1.8" fill="none"/><circle cx="8" cy="21" r="5" stroke="#858585" stroke-width="1.7" fill="#181818"/><path d="M1 21h3M12 21h3M2 16l3 2M14 16l-3 2M2 26l3-2M14 26l-3-2" stroke="#858585" stroke-width="1.4"/></svg>
<svg class="abs" style="left:16px;top:295.5px" width="34" height="34" viewBox="0 0 30 30"><rect x="2" y="9" width="8" height="8" stroke="#858585" stroke-width="1.7" fill="none"/><rect x="2" y="17" width="8" height="8" stroke="#858585" stroke-width="1.7" fill="none"/><rect x="10" y="17" width="8" height="8" stroke="#858585" stroke-width="1.7" fill="none"/><path d="M19 2l6 6-6 6-6-6z" stroke="#858585" stroke-width="1.7" fill="none"/></svg>
<svg class="abs" style="left:16px;top:364.5px" width="34" height="34" viewBox="0 0 30 30"><rect x="1" y="2" width="24" height="18" rx="1" stroke="#858585" stroke-width="1.7" fill="none"/><path d="M8 24h6" stroke="#858585" stroke-width="1.7"/><circle cx="22" cy="22" r="6" stroke="#858585" stroke-width="1.7" fill="#181818"/><path d="M20 20l-2 2 2 2M24 20l2 2-2 2" stroke="#858585" stroke-width="1.2" fill="none"/></svg>
<svg class="abs" style="left:16px;top:433.5px" width="34" height="34" viewBox="0 0 30 30"><path d="M4 8c0-5 4-7 4-7l3 4h8l3-4s4 2 4 7v10c0 6-5 9-11 9S4 24 4 18z" stroke="#858585" stroke-width="1.7" fill="none"/><path d="M8 12h14M11 17h8M13 22h4" stroke="#858585" stroke-width="1.7"/></svg>
<svg class="abs" style="left:16px;top:502.5px" width="34" height="34" viewBox="0 0 30 30"><circle cx="14" cy="14" r="13" fill="#858585"/><path d="M18 6L9 14l9 8" stroke="#181818" stroke-width="3" fill="none"/><circle cx="18" cy="14" r="2.5" fill="#181818"/></svg>
<div class="abs" style="left:31px;top:175px;width:22px;height:22px;border-radius:11px;background:#0078d4;color:#fff;font-size:12.5px;font-weight:bold;text-align:center;line-height:22px">1</div>
<div class="abs" style="left:30px;top:313px;width:24px;height:22px;border-radius:11px;background:#0078d4;color:#fff;font-size:12.5px;font-weight:bold;text-align:center;line-height:22px">10</div>
<svg class="abs" style="left:14px;top:1196px" width="38" height="38" viewBox="0 0 38 38"><circle cx="19" cy="19" r="17" stroke="#858585" stroke-width="1.8" fill="none"/><circle cx="19" cy="15" r="6" stroke="#858585" stroke-width="1.8" fill="none"/><path d="M8 31c2-6 6-8 11-8s9 2 11 8" stroke="#858585" stroke-width="1.8" fill="none"/></svg>
<svg class="abs" style="left:16px;top:1268px" width="32" height="32" viewBox="0 0 32 32"><path d="M16 2l3 1 1 4 3 2 4-1 2 3-2 3v4l3 2-1 3-4 1-2 3 1 4-3 1-3-2h-4l-3 2-3-1 1-4-2-3-4-1-1-3 3-2v-4l-2-3 2-3 4 1 3-2 1-4z" stroke="#858585" stroke-width="1.8" fill="none"/><circle cx="16" cy="16" r="5" stroke="#858585" stroke-width="1.8" fill="none"/></svg>
</div>
<div id="exp">
<div class="abs" style="left:30px;top:18.5px;font-size:13px;color:#cccccc">EXPLORER</div>
<svg class="abs" style="left:255px;top:23px" width="20" height="6" viewBox="0 0 20 6"><circle cx="3" cy="3" r="1.9" fill="#cccccc"/><circle cx="10" cy="3" r="1.9" fill="#cccccc"/><circle cx="17" cy="3" r="1.9" fill="#cccccc"/></svg>
<svg class="abs" style="left:8px;top:63px" width="13" height="8" viewBox="0 0 13 8"><path d="M1 1l5.5 5.5L12 1" stroke="#cccccc" stroke-width="1.4" fill="none"/></svg>
<div class="abs" style="left:30px;top:60px;font-size:14.2px;font-weight:bold;color:#cccccc">SCREENELECTRON</div>
<div class="abs" style="left:0;top:82px;width:299px;height:4px;background:linear-gradient(#0b0b0b,transparent)"></div>
<div class="row" style="top:83.7px;">
<svg class="chev" style="left:24px;top:9px" width="16" height="11" viewBox="0 0 16 11"><path d="M1.5 2l6.5 6.5L14.5 2" stroke="#cccccc" stroke-width="1.4" fill="none"/></svg>
<svg class="fi" style="left:51px;width:22px" viewBox="0 0 22 20"><path d="M1 4h7l2 2h11v12H1z" fill="#2e8b3e"/><circle cx="9" cy="11" r="2.2" fill="#9fe89f"/><circle cx="15" cy="11" r="2.2" fill="#9fe89f"/><path d="M5 18c0-3 2-5 4-5s4 2 4 5zM11 18c0-3 2-5 4-5s4 2 4 5z" fill="#9fe89f"/></svg>
<div class="nm" style="left:82px;color:#cccccc">public</div>
</div>
<div class="row" style="top:115.3px;">
<svg class="fi" style="left:63px" viewBox="0 0 20 20"><rect x="1" y="1" width="18" height="18" fill="#e54a2a"/><path d="M10 3l2 4.5 5 .5-3.8 3.3 1.2 4.9L10 13.6l-4.4 2.6 1.2-4.9L3 8l5-.5z" fill="#fff"/></svg>
<div class="nm" style="left:93px;color:#cccccc">favicon.ico</div>
</div>
<div class="row" style="top:147.1px;">
<svg class="fi" style="left:63px" viewBox="0 0 20 20"><path d="M3 1h14l-1.5 15L10 19l-5.5-3z" fill="#e44d26"/><path d="M6.5 5h7l-.3 2.5H9l.2 2h3.8l-.5 4.5-2.5 1-2.5-1-.2-2" stroke="#fff" stroke-width="1.3" fill="none"/></svg>
<div class="nm" style="left:93px;color:#cccccc">index.html</div>
</div>
<div class="row" style="top:178.8px;">
<svg class="fi" style="left:63px" viewBox="0 0 20 20"><rect x="1" y="3" width="18" height="14" rx="1" fill="#26a69a"/><path d="M2 16l5-6 3 4 3-3 5 5z" fill="#e0f2f1"/><circle cx="14" cy="7" r="2" fill="#e0f2f1"/></svg>
<div class="nm" style="left:93px;color:#cccccc">logo192.png</div>
</div>
<div class="row" style="top:210.5px;">
<svg class="fi" style="left:63px" viewBox="0 0 20 20"><rect x="1" y="3" width="18" height="14" rx="1" fill="#26a69a"/><path d="M2 16l5-6 3 4 3-3 5 5z" fill="#e0f2f1"/><circle cx="14" cy="7" r="2" fill="#e0f2f1"/></svg>
<div class="nm" style="left:93px;color:#cccccc">logo512.png</div>
</div>
<div class="row" style="top:242.2px;">
<div class="fi" style="left:63px;color:#f1d700;font-size:17px;line-height:19px;letter-spacing:2px">{}</div>
<div class="nm" style="left:93px;color:#cccccc">manifest.json</div>
</div>
<div class="row" style="top:273.8px;">
<svg class="fi" style="left:63px" viewBox="0 0 20 20"><rect x="4" y="4" width="12" height="10" rx="4" fill="#e74c3c"/><rect x="6" y="14" width="3" height="5" fill="#e74c3c"/><rect x="11" y="14" width="3" height="5" fill="#e74c3c"/><rect x="1" y="8" width="2" height="5" fill="#e74c3c"/><rect x="17" y="8" width="2" height="5" fill="#e74c3c"/><circle cx="8" cy="8" r="1.2" fill="#181818"/><circle cx="12" cy="8" r="1.2" fill="#181818"/><path d="M10 1v3" stroke="#e74c3c" stroke-width="1.5"/></svg>
<div class="nm" style="left:93px;color:#cccccc">robots.txt</div>
</div>
<div class="row" style="top:305.5px;">
<svg class="chev" style="left:27px;top:7px" width="11" height="17" viewBox="0 0 11 17"><path d="M2 1.5l6.5 7L2 15.5" stroke="#cccccc" stroke-width="1.4" fill="none"/></svg>
<svg class="fi" style="left:51px;width:22px" viewBox="0 0 22 20"><path d="M1 4h7l2 2h11v12H1z" fill="#c9a74e"/><rect x="9" y="8" width="9" height="11" fill="#f5f0e0"/><path d="M11 8l3-5 3 5z" fill="#ffd84d"/></svg>
<div class="nm" style="left:82px;color:#8c8c8c">release</div>
</div>
<div class="row" style="top:337.2px;">
<svg class="chev" style="left:24px;top:9px" width="16" height="11" viewBox="0 0 16 11"><path d="M1.5 2l6.5 6.5L14.5 2" stroke="#cccccc" stroke-width="1.4" fill="none"/></svg>
<svg class="fi" style="left:51px;width:22px" viewBox="0 0 22 20"><path d="M1 4h7l2 2h11v12H1z" fill="#2e8b3e"/><path d="M8 10l-2.5 2.5L8 15M14 10l2.5 2.5L14 15M12 9l-2 7" stroke="#7ee87e" stroke-width="1.4" fill="none"/></svg>
<div class="nm" style="left:82px;color:#c5a572">src</div>
</div>
<div class="row" style="top:368.9px;">
<svg class="chev" style="left:35px;top:9px" width="16" height="11" viewBox="0 0 16 11"><path d="M1.5 2l6.5 6.5L14.5 2" stroke="#cccccc" stroke-width="1.4" fill="none"/></svg>
<svg class="fi" style="left:62px;width:22px" viewBox="0 0 22 20"><path d="M1 4h7l2 2h11v12H1z" fill="#c9a060"/><path d="M8 10l6-3 6 3v6l-6 3-6-3z" fill="#f4a928"/></svg>
<div class="nm" style="left:93px;color:#c5a572">components</div>
</div>
<div class="row" style="top:400.6px;">
<svg class="fi" style="left:74px" viewBox="0 0 20 20"><path d="M2 3c0-1 1-2 2-2h12c1 0 2 1 2 2v13c0 1-1 2-2 2H4c-1 0-2-1-2-2z" fill="#6f42c1"/><text x="3.5" y="16" font-size="7.5" font-weight="bold" fill="#fff" font-family="Liberation Sans">CSS</text></svg>
<div class="nm" style="left:104px;color:#cccccc">x</div>
</div>
<div class="row" style="top:432.3px;">
<div class="fi" style="left:74px;color:#e8cf3c;font-weight:bold;font-size:15px;line-height:20px;letter-spacing:-0.5px">JS</div>
<div class="nm" style="left:104px;color:#cccccc">x</div>
</div>
<div class="row" style="top:464.0px;">
<svg class="fi" style="left:74px" viewBox="0 0 20 20"><path d="M2 3c0-1 1-2 2-2h12c1 0 2 1 2 2v13c0 1-1 2-2 2H4c-1 0-2-1-2-2z" fill="#6f42c1"/><text x="3.5" y="16" font-size="7.5" font-weight="bold" fill="#fff" font-family="Liberation Sans">CSS</text></svg>
<div class="nm" style="left:104px;color:#cccccc">x</div>
</div>
<div class="row" style="top:495.7px;">
<div class="fi" style="left:74px;color:#e8cf3c;font-weight:bold;font-size:15px;line-height:20px;letter-spacing:-0.5px">JS</div>
<div class="nm" style="left:104px;color:#cccccc">x</div>
</div>
<div class="row" style="top:527.4px;">
<svg class="chev" style="left:35px;top:9px" width="16" height="11" viewBox="0 0 16 11"><path d="M1.5 2l6.5 6.5L14.5 2" stroke="#cccccc" stroke-width="1.4" fill="none"/></svg>
<svg class="fi" style="left:62px;width:22px" viewBox="0 0 22 20"><path d="M1 4h7l2 2h11v12H1z" fill="#b35543"/><rect x="9" y="7" width="12" height="12" rx="2" fill="#e0552f"/><path d="M13 11l-2 2 2 2M17 11l2 2-2 2" stroke="#fff" stroke-width="1.2" fill="none"/></svg>
<div class="nm" style="left:93px;color:#c5a572">pages</div>
</div>
<div class="row" style="top:559.1px;">
<div class="fi" style="left:74px;color:#e8cf3c;font-weight:bold;font-size:15px;line-height:20px;letter-spacing:-0.5px">JS</div>
<div class="nm" style="left:104px;color:#cccccc">x</div>
</div>
<div class="row" style="top:590.9px;background:#37373d;">
<div class="fi" style="left:74px;color:#e8cf3c;font-weight:bold;font-size:15px;line-height:20px;letter-spacing:-0.5px">JS</div>
<div class="nm" style="left:104px;color:#cccccc">x</div>
</div>
<div class="row" style="top:622.5px;">
<svg class="chev" style="left:35px;top:9px" width="16" height="11" viewBox="0 0 16 11"><path d="M1.5 2l6.5 6.5L14.5 2" stroke="#cccccc" stroke-width="1.4" fill="none"/></svg>
<svg class="fi" style="left:62px;width:22px" viewBox="0 0 22 20"><path d="M1 4h7l2 2h11v12H1z" fill="#3f7ac9"/><rect x="9" y="6" width="12" height="13" rx="2" fill="#2f8ee6"/><text x="10.5" y="16.5" font-size="10" fill="#fff" font-family="Liberation Sans">{}</text></svg>
<div class="nm" style="left:93px;color:#cccccc">styles</div>
</div>
<div class="row" style="top:654.2px;">
<svg class="fi" style="left:74px" viewBox="0 0 20 20"><path d="M2 3c0-1 1-2 2-2h12c1 0 2 1 2 2v13c0 1-1 2-2 2H4c-1 0-2-1-2-2z" fill="#6f42c1"/><text x="3.5" y="16" font-size="7.5" font-weight="bold" fill="#fff" font-family="Liberation Sans">CSS</text></svg>
<div class="nm" style="left:104px;color:#cccccc">x</div>
</div>
<div class="row" style="top:685.9px;">
<svg class="fi" style="left:74px" viewBox="0 0 20 20"><path d="M2 3c0-1 1-2 2-2h12c1 0 2 1 2 2v13c0 1-1 2-2 2H4c-1 0-2-1-2-2z" fill="#6f42c1"/><text x="3.5" y="16" font-size="7.5" font-weight="bold" fill="#fff" font-family="Liberation Sans">CSS</text></svg>
<div class="nm" style="left:104px;color:#cccccc">x</div>
</div>
<div class="row" style="top:717.6px;">
<div class="fi" style="left:63px;color:#e8cf3c;font-weight:bold;font-size:15px;line-height:20px;letter-spacing:-0.5px">JS</div>
<div class="nm" style="left:93px;color:#cccccc">App.js</div>
</div>
<div class="row" style="top:749.3px;">
<svg class="fi" style="left:63px" viewBox="0 0 20 20"><path d="M2 14l6-10 4 4 2-3 4 4-8 8z" fill="#f1d700"/><text x="9" y="19" font-size="8" font-weight="bold" fill="#f1d700" font-family="Liberation Sans">JS</text></svg>
<div class="nm" style="left:93px;color:#cccccc">App.test.js</div>
</div>
<div class="row" style="top:781.0px;">
<svg class="fi" style="left:63px" viewBox="0 0 20 20"><path d="M2 3c0-1 1-2 2-2h12c1 0 2 1 2 2v13c0 1-1 2-2 2H4c-1 0-2-1-2-2z" fill="#6f42c1"/><text x="3.5" y="16" font-size="7.5" font-weight="bold" fill="#fff" font-family="Liberation Sans">CSS</text></svg>
<div class="nm" style="left:93px;color:#cccccc">index.css</div>
</div>
<div class="row" style="top:812.8px;">
<div class="fi" style="left:63px;color:#e8cf3c;font-weight:bold;font-size:15px;line-height:20px;letter-spacing:-0.5px">JS</div>
<div class="nm" style="left:93px;color:#cccccc">index.js</div>
</div>
<div class="row" style="top:844.4px;">
<svg class="fi" style="left:63px" viewBox="0 0 20 20"><path d="M10 1l1.5 3 3-1.5-.5 3.5h-8l-.5-3.5 3 1.5z" fill="#ffb13b"/><text x="0" y="17" font-size="8.5" font-weight="bold" fill="#fff" font-family="Liberation Sans">SVG</text></svg>
<div class="nm" style="left:93px;color:#cccccc">logo.svg</div>
</div>
<div class="row" style="top:876.1px;">
<div class="fi" style="left:63px;color:#e8cf3c;font-weight:bold;font-size:15px;line-height:20px;letter-spacing:-0.5px">JS</div>
<div class="nm" style="left:93px;color:#cccccc">reportWebVitals.js</div>
</div>
<div class="row" style="top:907.8px;">
<div class="fi" style="left:63px;color:#e8cf3c;font-weight:bold;font-size:15px;line-height:20px;letter-spacing:-0.5px">JS</div>
<div class="nm" style="left:93px;color:#cccccc">setupTests.js</div>
</div>
<div class="row" style="top:939.5px;">
<div class="fi" style="left:63px;color:#e8cf3c;font-weight:bold;font-size:15px;line-height:20px;letter-spacing:-0.5px">JS</div>
<div class="nm" style="left:93px;color:#cccccc">toaster.js</div>
</div>
<div class="row" style="top:971.2px;">
<svg class="fi" style="left:51px" viewBox="0 0 20 20"><path d="M10 1l2 2.5 3-.5.5 3 2.5 2-1.5 2.5 1.5 2.5-2.5 2-.5 3-3-.5L10 19l-2-2.5-3 .5-.5-3L2 12l1.5-2.5L2 7l2.5-2 .5-3 3 .5z" fill="#7fb2d4"/><circle cx="10" cy="10" r="3" fill="#181818"/></svg>
<div class="nm" style="left:82px;color:#8c8c8c">.env</div>
</div>
<div class="row" style="top:1002.9px;">
<svg class="fi" style="left:51px" viewBox="0 0 20 20"><path d="M10 1l9 9-9 9-9-9z" fill="#e64a19"/><circle cx="10" cy="6" r="1.5" fill="#fff"/><circle cx="10" cy="13" r="1.5" fill="#fff"/><path d="M10 6v7M10 6l3 3" stroke="#fff" stroke-width="1.2"/></svg>
<div class="nm" style="left:82px;color:#cccccc">.gitignore</div>
</div>
<div class="row" style="top:1034.7px;">
<div class="fi" style="left:51px;color:#e8cf3c;font-weight:bold;font-size:15px;line-height:20px;letter-spacing:-0.5px">JS</div>
<div class="nm" style="left:82px;color:#cccccc">main.js</div>
</div>
<div class="row" style="top:1066.3px;">
<svg class="fi" style="left:51px" viewBox="0 0 20 20"><rect x="1" y="1" width="18" height="18" fill="#cb3837"/><path d="M5 16V5h10v11h-3V8h-3v8z" fill="#fff"/></svg>
<div class="nm" style="left:82px;color:#cccccc">package.json</div>
</div>
<div class="row" style="top:1098.1px;">
<svg class="fi" style="left:51px" viewBox="0 0 20 20"><rect x="1" y="1" width="18" height="18" fill="#cb3837"/><path d="M5 16V5h10v11h-3V8h-3v8z" fill="#fff"/></svg>
<div class="nm" style="left:82px;color:#cccccc">package-lock.json</div>
</div>
<div class="row" style="top:1129.8px;">
<div class="fi" style="left:51px;color:#e8cf3c;font-weight:bold;font-size:15px;line-height:20px;letter-spacing:-0.5px">JS</div>
<div class="nm" style="left:82px;color:#cccccc">preload.js</div>
</div>
<div class="row" style="top:1161.5px;">
<svg class="fi" style="left:51px" viewBox="0 0 20 20"><rect x="0.5" y="4.5" width="19" height="11" rx="1" stroke="#7a6a4a" fill="none"/><text x="2" y="13" font-size="8" font-weight="bold" fill="#8a7a5a" font-family="Liberation Sans">M↓</text></svg>
<div class="nm" style="left:82px;color:#cccccc">README.md</div>
</div>
<div class="abs" style="left:40px;top:559px;width:1px;height:63px;background:#585858"></div>
<div class="abs" style="left:263px;top:346px;width:12px;height:12px;border-radius:6px;background:#73644c"></div>
<div class="sect" style="top:1224px"><svg class="chev" style="left:13px;top:7px" width="11" height="17" viewBox="0 0 11 17"><path d="M2 1.5l6.5 7L2 15.5" stroke="#cccccc" stroke-width="1.4" fill="none"/></svg><span>OUTLINE</span></div>
<div class="sect" style="top:1256px"><svg class="chev" style="left:13px;top:7px" width="11" height="17" viewBox="0 0 11 17"><path d="M2 1.5l6.5 7L2 15.5" stroke="#cccccc" stroke-width="1.4" fill="none"/></svg><span>TIMELINE</span></div>
<div class="sect" style="top:1288px"><svg class="chev" style="left:13px;top:7px" width="11" height="17" viewBox="0 0 11 17"><path d="M2 1.5l6.5 7L2 15.5" stroke="#cccccc" stroke-width="1.4" fill="none"/></svg><span>RUNNING TASKS</span></div>
</div>
<div id="edtabs">
<div class="etab" style="left:0px;width:252px;background:#1f1f1f;border-top:2px solid #0078d4;">
<div class="abs" style="left:18px;top:13px;color:#e8cf3c;font-weight:bold;font-size:15px;letter-spacing:-0.5px">JS</div>
<div class="nm" style="left:47px;top:14px;color:#e2c08d">ScreenshotApp.js M</div>
<svg class="abs" style="left:227px;top:17px" width="15" height="15" viewBox="0 0 15 15"><path d="M1 1l13 13M14 1L1 14" stroke="#ffffff" stroke-width="1.6"/></svg>
</div>
<div class="etab" style="left:252px;width:225px;">
<div class="abs" style="left:18px;top:15px;color:#e8cf3c;font-weight:bold;font-size:15px;letter-spacing:-0.5px">JS</div>
<div class="nm" style="left:47px;color:#9d9d9d">AddTaskModal.js</div>
</div>
<div class="etab" style="left:477px;width:173px;">
<div class="abs" style="left:18px;top:15px;color:#e8cf3c;font-weight:bold;font-size:15px;letter-spacing:-0.5px">JS</div>
<div class="nm" style="left:47px;color:#9d9d9d">toaster.js</div>
</div>
<div class="etab" style="left:650px;width:232px;">
<svg class="abs" style="left:17px;top:15px" width="20" height="20" viewBox="0 0 20 20"><path d="M2 3c0-1 1-2 2-2h12c1 0 2 1 2 2v13c0 1-1 2-2 2H4c-1 0-2-1-2-2z" fill="#6f42c1"/><text x="3.5" y="16" font-size="7.5" font-weight="bold" fill="#fff" font-family="Liberation Sans">CSS</text></svg>
<div class="nm" style="left:47px;color:#9d9d9d">addtaskmodal.css</div>
</div>
<div class="etab" style="left:882px;width:177px;">
<svg class="abs" style="left:17px;top:15px" width="20" height="20" viewBox="0 0 20 20"><path d="M2 3c0-1 1-2 2-2h12c1 0 2 1 2 2v13c0 1-1 2-2 2H4c-1 0-2-1-2-2z" fill="#6f42c1"/><text x="3.5" y="16" font-size="7.5" font-weight="bold" fill="#fff" font-family="Liberation Sans">CSS</text></svg>
<div class="nm" style="left:47px;color:#9d9d9d">sidebar.css</div>
</div>
<div class="etab" style="left:1059px;width:171px;border-right:none;">
<svg class="abs" style="left:17px;top:15px" width="20" height="20" viewBox="0 0 20 20"><path d="M2 3c0-1 1-2 2-2h12c1 0 2 1 2 2v13c0 1-1 2-2 2H4c-1 0-2-1-2-2z" fill="#6f42c1"/><text x="3.5" y="16" font-size="7.5" font-weight="bold" fill="#fff" font-family="Liberation Sans">CSS</text></svg>
<div class="nm" style="left:47px;color:#9d9d9d">screenshot</div>
</div>
<svg class="abs" style="left:1206px;top:16px" width="22" height="22" viewBox="0 0 22 22"><path d="M3 2l16 9-16 9z" stroke="#cccccc" stroke-width="1.6" stroke-linejoin="round" fill="none"/></svg>
<svg class="abs" style="left:1242px;top:15px" width="23" height="23" viewBox="0 0 23 23"><circle cx="4.5" cy="4" r="2.6" stroke="#cccccc" stroke-width="1.5" fill="none"/><circle cx="18" cy="19" r="2.6" stroke="#cccccc" stroke-width="1.5" fill="none"/><path d="M4.5 7v8c0 3 2 4 4 4h4M10 16l3 3-3 3M18 16V8c0-3-2-4-4-4H11M13 1l-3 3 3 3" stroke="#cccccc" stroke-width="1.5" fill="none"/></svg>
<svg class="abs" style="left:1280px;top:16px" width="22" height="22" viewBox="0 0 22 22"><rect x="1.5" y="1.5" width="19" height="19" rx="1.5" stroke="#cccccc" stroke-width="1.5" fill="none"/><path d="M11 1.5v19" stroke="#cccccc" stroke-width="1.5"/></svg>
<svg class="abs" style="left:1318px;top:23px" width="20" height="6" viewBox="0 0 20 6"><circle cx="3" cy="3" r="1.9" fill="#cccccc"/><circle cx="10" cy="3" r="1.9" fill="#cccccc"/><circle cx="17" cy="3" r="1.9" fill="#cccccc"/></svg>
</div>
<div id="code">
<div class="abs" style="left:23px;top:8.4px;font-size:16.5px;color:#a9a9a9;white-space:nowrap">src</div><svg class="abs" style="left:54px;top:12px" width="9" height="13" viewBox="0 0 9 13"><path d="M1.5 1l5.5 5.5L1.5 12" stroke="#a9a9a9" stroke-width="1.3" fill="none"/></svg><div class="abs" style="left:69px;top:7.6px;font-size:17.99px;color:#a9a9a9;white-space:nowrap">pages</div><svg class="abs" style="left:126px;top:12px" width="9" height="13" viewBox="0 0 9 13"><path d="M1.5 1l5.5 5.5L1.5 12" stroke="#a9a9a9" stroke-width="1.3" fill="none"/></svg><div class="abs" style="left:144px;top:8px;color:#e8cf3c;font-weight:bold;font-size:17px;letter-spacing:-0.5px">JS</div><div class="abs" style="left:173px;top:7.6px;font-size:17.99px;color:#a9a9a9;white-space:nowrap">ScreenshotApp.js</div><svg class="abs" style="left:324px;top:12px" width="9" height="13" viewBox="0 0 9 13"><path d="M1.5 1l5.5 5.5L1.5 12" stroke="#a9a9a9" stroke-width="1.3" fill="none"/></svg><svg class="abs" style="left:338px;top:9px" width="21" height="18" viewBox="0 0 21 18"><path d="M4 2H1.5v14H4M17 2h2.5v14H17" stroke="#75beff" stroke-width="1.5" fill="none"/><path d="M6 7l5-3 4 2v5l-5 3-4-2z" stroke="#75beff" stroke-width="1.4" fill="none"/><path d="M6 7l4 2 5-3M10 9v5" stroke="#75beff" stroke-width="1.2" fill="none"/></svg><div class="abs" style="left:365px;top:7.7px;font-size:17.7px;color:#a9a9a9;white-space:nowrap">ScreenshotApp</div><svg class="abs" style="left:497px;top:12px" width="9" height="13" viewBox="0 0 9 13"><path d="M1.5 1l5.5 5.5L1.5 12" stroke="#a9a9a9" stroke-width="1.3" fill="none"/></svg><svg class="abs" style="left:514px;top:9px" width="21" height="18" viewBox="0 0 21 18"><path d="M4 2H1.5v14H4M17 2h2.5v14H17" stroke="#75beff" stroke-width="1.5" fill="none"/><path d="M6 7l5-3 4 2v5l-5 3-4-2z" stroke="#75beff" stroke-width="1.4" fill="none"/><path d="M6 7l4 2 5-3M10 9v5" stroke="#75beff" stroke-width="1.2" fill="none"/></svg><div class="abs" style="left:541px;top:7.7px;font-size:17.81px;color:#a9a9a9;white-space:nowrap">handleTaskChange</div><svg class="abs" style="left:703px;top:12px" width="9" height="13" viewBox="0 0 9 13"><path d="M1.5 1l5.5 5.5L1.5 12" stroke="#a9a9a9" stroke-width="1.3" fill="none"/></svg><svg class="abs" style="left:718px;top:9px" width="21" height="18" viewBox="0 0 21 18"><path d="M4 2H1.5v14H4M17 2h2.5v14H17" stroke="#75beff" stroke-width="1.5" fill="none"/><path d="M6 7l5-3 4 2v5l-5 3-4-2z" stroke="#75beff" stroke-width="1.4" fill="none"/><path d="M6 7l4 2 5-3M10 9v5" stroke="#75beff" stroke-width="1.2" fill="none"/></svg><div class="abs" style="left:745px;top:7.7px;font-size:17.83px;color:#a9a9a9;white-space:nowrap">task</div><svg class="abs" style="left:787px;top:12px" width="9" height="13" viewBox="0 0 9 13"><path d="M1.5 1l5.5 5.5L1.5 12" stroke="#a9a9a9" stroke-width="1.3" fill="none"/></svg><svg class="abs" style="left:802px;top:8px" width="20" height="21" viewBox="0 0 20 21"><path d="M10 1.5l8 4.5v9l-8 4.5-8-4.5v-9z" stroke="#b180d7" stroke-width="1.5" fill="none"/><path d="M2 6l8 4.5L18 6M10 10.5v9" stroke="#b180d7" stroke-width="1.4" fill="none"/></svg><div class="abs" style="left:828.5px;top:7.4px;font-size:18.23px;color:#a9a9a9;white-space:nowrap">taskData.find() callback</div>
<div class="ln" style="top:65.5px">87</div><div class="cl" style="top:65.5px">      <span class="k">const</span> n = <span class="f">Number</span><span class="b3">(</span><span class="v">val</span><span class="b3">)</span>;</div>
<div class="ln" style="top:91.5px">88</div><div class="cl" style="top:91.5px">    <span class="r">return</span> <span class="t">Number</span>.<span class="f">isFinite</span><span class="b3">(</span><span class="v">n</span><span class="b3">)</span> ? <span class="v">Math</span>.<span class="f">max</span><span class="b3">(</span><span class="nu">0</span>, <span class="v">n</span><span class="b3">)</span> : <span class="nu">0</span>;</div>
<div class="ln" style="top:117.5px">89</div><div class="cl" style="top:117.5px">  <span class="b2">}</span>;</div>
<div class="ln" style="top:143.5px">90</div><div class="cl" style="top:143.5px">  <span class="k">const</span> <span class="f">formatDateYMD</span> = <span class="b2">(</span><span class="v">d</span><span class="b2">)</span> <span class="k">=&gt;</span> <span class="b2">{</span></div>
<div class="ln" style="top:169.5px">91</div><div class="cl" style="top:169.5px">    <span class="k">const</span> <span class="dt">dt</span> = <span class="v">d</span> <span class="k">instanceof</span> <span class="t">Date</span> ? <span class="v">d</span> : <span class="k">new</span> <span class="t">Date</span><span class="b3">(</span><span class="v">d</span><span class="b3">)</span>;</div>
<div class="ln" style="top:195.5px">92</div><div class="cl" style="top:195.5px">    <span class="r">return</span> <span class="s">`</span><span class="k">${</span><span class="dt">dt</span>.<span class="f">getFullYear</span><span class="b3">()</span><span class="k">}</span><span class="s">-</span><span class="k">${</span><span class="f">pad</span><span class="b3">(</span><span class="dt">dt</span>.<span class="f">getMonth</span><span class="b2">()</span> + <span class="nu">1</span><span class="b3">)</span><span class="k">}</span><span class="s">-</span><span class="k">${</span><span class="f">pad</span><span class="b1">(</span><span class="dt">dt</span>.<span class="f">getDate</span><span class="b2">()</span><span class="b1">)</span><span class="k">}</span><span class="s">`</span>;</div>
<div class="ln" style="top:221.5px">93</div><div class="cl" style="top:221.5px">  <span class="b2">}</span>;</div>
<div class="ln" style="top:247.5px">94</div><div class="cl" style="top:247.5px">  <span class="k">const</span> <span class="f">formatDateTime</span> = <span class="b2">(</span><span class="v">d</span><span class="b2">)</span> <span class="k">=&gt;</span> <span class="b2">{</span></div>
<div class="ln" style="top:273.5px">95</div><div class="cl" style="top:273.5px">    <span class="k">const</span> <span class="dt">dt</span> = <span class="v">d</span> <span class="k">instanceof</span> <span class="t">Date</span> ? <span class="v">d</span> : <span class="k">new</span> <span class="t">Date</span><span class="b3">(</span><span class="v">d</span><span class="b3">)</span>;</div>
<div class="ln" style="top:299.5px">96</div><div class="cl" style="top:299.5px">    <span class="r">return</span> <span class="s">`</span><span class="k">${</span><span class="f">formatDateYMD</span><span class="b1">(</span><span class="dt">dt</span><span class="b1">)</span><span class="k">}</span><span class="s"> </span><span class="k">${</span><span class="f">pad</span><span class="b1">(</span><span class="dt">dt</span>.<span class="f">getHours</span><span class="b2">()</span><span class="b1">)</span><span class="k">}</span><span class="s">:</span><span class="k">${</span><span class="f">pad</span><span class="b1">(</span></div>
<div class="ln" style="top:325.5px">97</div><div class="cl" style="top:325.5px">      <span class="dt">dt</span>.<span class="f">getMinutes</span><span class="b2">()</span></div>
<div class="cl" style="top:506px;left:781.8px"><span class="t">ng</span><span class="b1">(</span><span class="v">newId</span><span class="b1">)</span><span class="b3">)</span>;</div>
<div class="abs" style="left:0;top:33px;width:1222px;height:52px;background:#1f1f1f"></div><div class="abs" style="left:0;top:85px;width:1222px;height:4px;background:linear-gradient(rgba(0,0,0,.75),rgba(0,0,0,0))"></div>
<div class="ln" style="top:33px">30</div><div class="cl" style="top:33px"><span class="k">const</span> <span class="f">ScreenshotApp</span> = <span class="b1">()</span> <span class="k">=&gt;</span> <span class="b1">{</span></div>
<div class="ln" style="top:59px">85</div><div class="cl" style="top:59px">  <span class="k">const</span> <span class="f">toSeconds</span> = <span class="b2">(</span><span class="v">val</span><span class="b2">)</span> <span class="k">=&gt;</span> <span class="b2">{</span></div>
<div class="abs" style="left:95px;top:85px;width:1px;height:260px;background:#404040"></div>
<div class="abs" style="left:115px;top:90px;width:1px;height:26px;background:#404040"></div>
<div class="abs" style="left:115px;top:168px;width:1px;height:52px;background:#404040"></div>
<div class="abs" style="left:115px;top:272px;width:1px;height:80px;background:#404040"></div>
<div id="minimap" class="abs" style="left:1234px;top:33px;width:110px;height:993px"><div class="abs" style="left:0;top:0;width:110px;height:993px;background:repeating-linear-gradient(#3a4a5a 0 2px,#1f1f1f 2px 4px);opacity:.35"></div></div>
<div class="abs" style="left:1341px;top:33px;width:19px;height:993px;background:#1f1f1f;border-left:1px solid #2b2b2b"></div>
<div class="abs" style="left:1341px;top:156px;width:19px;height:2px;background:#777"></div><div class="abs" style="left:1347px;top:153px;width:7px;height:7px;background:#c4a0c8"></div>
<div class="abs" style="left:1341px;top:458px;width:5px;height:9px;background:#2ea043"></div>
</div>
<div id="panel">
<div class="term" style="top:65.5px">PS C:\Users\User\Documents\Sourav\screenelectron> <span style="color:#e5e53a">npm</span> run dev</div>
<div class="abs" style="left:14px;top:92.5px;width:1320px;height:2px;background:#101010"></div>
<div class="term" style="top:94.5px">[1] Handling get-idle-time request...</div>
<div class="term" style="top:119.5px">[1] Handling get-idle-time request...</div>
<div class="term" style="top:144.5px">[1] Handling get-idle-time request...</div>
<div class="term" style="top:169.5px">[1] Handling get-idle-time request...</div>
<div class="term" style="top:194.5px">[1] Handling get-idle-time request...</div>
<div class="term" style="top:219.5px">[1] Handling get-idle-time request...</div>
<div class="abs" style="left:28px;top:219.5px;width:11px;height:25px;border:1px solid #cccccc"></div>
<div class="abs" style="left:0;top:0;width:1px;height:243px;background:#2b2b2b"></div>
<div class="abs" style="left:1343px;top:80px;width:17px;height:163px;border-left:1px solid #2b2b2b"></div>
<div class="abs" style="left:1347px;top:151px;width:8px;height:10px;background:#5a5a5a"></div>
<svg class="abs" style="left:1014px;top:16px" width="22" height="22" viewBox="0 0 22 22"><rect x="1.5" y="1.5" width="19" height="19" rx="1.5" stroke="#cccccc" stroke-width="1.4" fill="none"/><path d="M5 6l4 4-4 4M10 15h6" stroke="#cccccc" stroke-width="1.4" fill="none"/></svg>
<div class="abs" style="left:1041px;top:15px;font-size:16.5px;color:#cccccc">node</div>
<svg class="abs" style="left:1093px;top:16px" width="22" height="22" viewBox="0 0 22 22"><path d="M11 2v18M2 11h18" stroke="#cccccc" stroke-width="1.6"/></svg>
<svg class="abs" style="left:1120px;top:23px" width="11" height="8" viewBox="0 0 11 8"><path d="M1 1l4.5 4.5L10 1" stroke="#cccccc" stroke-width="1.3" fill="none"/></svg>
<svg class="abs" style="left:1143px;top:16px" width="22" height="22" viewBox="0 0 22 22"><rect x="2" y="2" width="18" height="18" rx="2" stroke="#cccccc" stroke-width="1.5" fill="none"/><path d="M11 2v18" stroke="#cccccc" stroke-width="1.5"/></svg>
<svg class="abs" style="left:1180px;top:15px" width="22" height="24" viewBox="0 0 22 24"><path d="M2 5h18M8 5V2h6v3M4 5l1 17h12l1-17M9 9v9M13 9v9" stroke="#cccccc" stroke-width="1.5" fill="none"/></svg>
<svg class="abs" style="left:1217px;top:25px" width="20" height="6" viewBox="0 0 20 6"><circle cx="3" cy="3" r="1.9" fill="#cccccc"/><circle cx="10" cy="3" r="1.9" fill="#cccccc"/><circle cx="17" cy="3" r="1.9" fill="#cccccc"/></svg>
<div class="abs" style="left:1256px;top:14px;width:1px;height:24px;background:#5a5a5a"></div>
<svg class="abs" style="left:1279px;top:16px" width="22" height="22" viewBox="0 0 22 22"><path d="M2 8V2h6M14 2h6v6M20 14v6h-6M8 20H2v-6" stroke="#cccccc" stroke-width="1.6" fill="none"/></svg>
<svg class="abs" style="left:1317px;top:17px" width="18" height="18" viewBox="0 0 18 18"><path d="M2 2l14 14M16 2L2 16" stroke="#cccccc" stroke-width="1.6"/></svg>
</div>
<div id="status">
<div class="abs" style="left:-1px;top:-1px;width:46px;height:32px;background:#0078d4"></div>
<svg class="abs" style="left:0;top:0" width="40" height="32" viewBox="0 0 40 32"><path d="M14.2 12.6l5.8 5.8-5.8 5.4M26.8 7.2l-5.4 5.4 5.4 6.1" stroke="#fff" stroke-width="1.3" fill="none"/></svg>
<svg class="abs" style="left:58px;top:6px" width="18" height="22" viewBox="0 0 18 22"><circle cx="4" cy="4" r="2.5" stroke="#cccccc" stroke-width="1.4" fill="none"/><circle cx="4" cy="18" r="2.5" stroke="#cccccc" stroke-width="1.4" fill="none"/><circle cx="14" cy="6" r="2.5" stroke="#cccccc" stroke-width="1.4" fill="none"/><path d="M4 7v8M14 9c0 4-8 3-10 6" stroke="#cccccc" stroke-width="1.4" fill="none"/></svg>
<div class="si" style="left:82px">main*</div>
<svg class="abs" style="left:132px;top:6px" width="20" height="20" viewBox="0 0 20 20"><path d="M3 9a7 7 0 0 1 13-3M17 11a7 7 0 0 1-13 3" stroke="#cccccc" stroke-width="1.5" fill="none"/><path d="M16 2v4h-4M4 18v-4h4" stroke="#cccccc" stroke-width="1.5" fill="none"/></svg>
<svg class="abs" style="left:741px;top:6px" width="14" height="22" viewBox="0 0 14 22"><circle cx="7" cy="11" r="4" stroke="#cccccc" stroke-width="1.6" fill="none"/><path d="M7 1v6M7 15v6" stroke="#cccccc" stroke-width="1.6"/></svg>
<div class="si" style="left:767px">Asiful Haque (2 months ago)</div>
<div class="si" style="left:1008px">Ln 104, Col 57 (1 selected)</div>
<div class="si" style="left:1230px">Spaces: 2</div>
<div class="si" style="left:1324px">UTF-8</div>
<div class="si" style="left:1392px">CRLF</div>
<div class="si" style="left:1482px">JavaScript</div>
<div class="si" style="left:1648px">Prettier</div>
<div class="si" style="left:1452px;top:4px;font-size:16px">{<span style="font-size:11px">&#x2297;</span></div>
<svg class="abs" style="left:1578px;top:6px" width="22" height="20" viewBox="0 0 22 20"><path d="M4 6c0-3 2-5 7-5s7 2 7 5v6c0 4-3 6-7 6s-7-2-7-6z" stroke="#cccccc" stroke-width="1.6" fill="none"/><circle cx="8" cy="10" r="1.3" fill="#cccccc"/><circle cx="14" cy="10" r="1.3" fill="#cccccc"/></svg>
<svg class="abs" style="left:1621px;top:8px" width="22" height="16" viewBox="0 0 22 16"><path d="M1 9l4 5 9-13M8 12l2 2 11-13" stroke="#cccccc" stroke-width="1.4" fill="none"/></svg>
</div>
</div>

<div id="rw">
<div id="rtitle">
<svg class="abs" style="left:8px;top:6px" width="16" height="16" viewBox="0 0 16 16"><rect width="16" height="16" fill="#f4f6f8"/><rect x="3" y="3" width="10" height="7" fill="#1e88c8"/><rect x="4" y="4" width="3" height="3" fill="#7fd07f"/><path d="M6 12h4v1H6z" fill="#333"/></svg>
<div class="abs" style="left:29px;top:7px;font-size:12px;color:#f2f2f2">React App</div>
<div class="abs" style="left:865px;top:14px;width:11px;height:1px;background:#e0e0e0"></div>
<div class="abs" style="left:910px;top:9px;width:10px;height:10px;border:1px solid #e0e0e0"></div>
<svg class="abs" style="left:956px;top:9px" width="11" height="11" viewBox="0 0 11 11"><path d="M0.5 0.5l10 10M10.5 0.5l-10 10" stroke="#e8e8e8" stroke-width="1.1"/></svg>
</div>
<div id="rmenu"><span style="left:6px">File</span><span style="left:36px">Edit</span><span style="left:69px">View</span><span style="left:107px">Window</span><span style="left:163px">Help</span></div>
<div id="rcontent">
<div id="rside"><div class="abs" style="left:7px;top:0;width:1px;height:685px;background:#18233a"></div></div>
<div class="abs" style="left:10px;top:18px;width:35px;height:36px;border-radius:8px;background:#1c2637"></div>
<div class="abs" style="left:19px;top:31px;width:16px;height:2px;background:#fff"></div><div class="abs" style="left:19px;top:36px;width:16px;height:2px;background:#fff"></div><div class="abs" style="left:19px;top:41px;width:16px;height:2px;background:#fff"></div>
<div class="rlbl" style="left:385px">Filter by Project:</div>
<div class="rlbl" style="left:532px">Choose Your Task:</div>
<div class="rsel" style="left:370px;width:145px;top:44px"><span style="font-size:18.2px;top:8px">All Projects</span><svg width="12" height="8" viewBox="0 0 12 8"><path d="M1.5 1.5l4.5 4.5 4.5-4.5" stroke="#d0d0d0" stroke-width="2" fill="none"/></svg></div>
<div class="rsel" style="left:525px;width:145px;top:44px"><span style="font-size:15.7px;top:10px">End-to-End Tests</span><svg width="12" height="8" viewBox="0 0 12 8"><path d="M1.5 1.5l4.5 4.5 4.5-4.5" stroke="#d0d0d0" stroke-width="2" fill="none"/></svg></div>
<div class="abs" style="left:0;width:984px;top:92px;text-align:center;padding-left:56px;font-size:14.7px;line-height:20.5px;color:#ef3b4b">You must finish the current task before<br>selecting a new one.</div>
<div id="thumb" class="abs" style="left:149px;top:163px;width:742px;height:311px;overflow:hidden;background:#fff"><div class="abs" style="left:0;top:0;width:742px;height:311px;background:#1b1b1b;overflow:hidden"><div class="abs" style="left:0.0px;top:0.0px;width:369.9px;height:8.6px;background:#212b20;"></div><div class="abs" style="left:0.0px;top:8.6px;width:369.9px;height:10.1px;background:#323e2d;"></div><div class="abs" style="left:0.0px;top:18.8px;width:55.7px;height:283.2px;background:#fafafa;"></div><div class="abs" style="left:55.7px;top:18.8px;width:310.8px;height:283.2px;background:#eef4fc;"></div><div class="abs" style="left:366.5px;top:18.8px;width:3.5px;height:283.2px;background:#2b2b2b;"></div><div class="abs" style="left:61.0px;top:3.7px;width:300.0px;height:30.6px;background:#fff;border-radius:3px"></div><div class="abs" style="left:61.0px;top:38.0px;width:300.0px;height:29.9px;background:#fff;border-radius:3px"></div><div class="abs" style="left:61.0px;top:71.5px;width:300.0px;height:29.9px;background:#fff;border-radius:3px"></div><div class="abs" style="left:61.0px;top:105.0px;width:300.0px;height:29.9px;background:#fff;border-radius:3px"></div><div class="abs" style="left:61.0px;top:138.7px;width:300.0px;height:29.9px;background:#fff;border-radius:3px"></div><div class="abs" style="left:61.0px;top:172.4px;width:300.0px;height:31.7px;background:#fff;border-radius:3px"></div><div class="abs" style="left:61.0px;top:207.9px;width:300.0px;height:29.9px;background:#fff;border-radius:3px"></div><div class="abs" style="left:61.0px;top:241.4px;width:300.0px;height:31.7px;background:#fff;border-radius:3px"></div><div class="abs" style="left:61.0px;top:276.8px;width:300.0px;height:29.9px;background:#fff;border-radius:3px"></div><div class="abs" style="left:66.2px;top:46.2px;width:32.4px;height:1.3px;background:#555;"></div><div class="abs" style="left:66.2px;top:79.7px;width:32.4px;height:1.3px;background:#555;"></div><div class="abs" style="left:66.2px;top:113.2px;width:32.4px;height:1.3px;background:#555;"></div><div class="abs" style="left:66.2px;top:146.9px;width:32.4px;height:1.3px;background:#555;"></div><div class="abs" style="left:66.2px;top:180.6px;width:32.4px;height:1.3px;background:#555;"></div><div class="abs" style="left:66.2px;top:216.1px;width:32.4px;height:1.3px;background:#555;"></div><div class="abs" style="left:66.2px;top:249.6px;width:32.4px;height:1.3px;background:#555;"></div><div class="abs" style="left:66.2px;top:285.0px;width:32.4px;height:1.3px;background:#555;"></div><div class="abs" style="left:369.9px;top:0.0px;width:372.1px;height:10.6px;background:#181818;"></div><div class="abs" style="left:383.9px;top:10.6px;width:64.7px;height:284.5px;background:#181818;"></div><div class="abs" style="left:448.7px;top:28.5px;width:258.8px;height:64.7px;background:#1f1f1f;"></div><div class="abs" style="left:468.9px;top:30.2px;width:64.7px;height:1.7px;background:#6a88a8;"></div><div class="abs" style="left:468.9px;top:35.8px;width:123.8px;height:1.7px;background:#6a88a8;"></div><div class="abs" style="left:468.9px;top:41.4px;width:182.9px;height:1.7px;background:#6a88a8;"></div><div class="abs" style="left:468.9px;top:47.0px;width:94.3px;height:1.7px;background:#6a88a8;"></div><div class="abs" style="left:468.9px;top:52.6px;width:153.4px;height:1.7px;background:#6a88a8;"></div><div class="abs" style="left:468.9px;top:58.2px;width:64.7px;height:1.7px;background:#6a88a8;"></div><div class="abs" style="left:468.9px;top:63.8px;width:123.8px;height:1.7px;background:#6a88a8;"></div><div class="abs" style="left:468.9px;top:69.5px;width:182.9px;height:1.7px;background:#6a88a8;"></div><div class="abs" style="left:468.9px;top:75.1px;width:94.3px;height:1.7px;background:#6a88a8;"></div><div class="abs" style="left:468.9px;top:80.7px;width:153.4px;height:1.7px;background:#6a88a8;"></div><div class="abs" style="left:468.9px;top:86.3px;width:64.7px;height:1.7px;background:#6a88a8;"></div><div class="abs" style="left:406.4px;top:93.4px;width:212.2px;height:159.8px;background:#0b1324;"></div><div class="abs" style="left:406.4px;top:93.4px;width:212.2px;height:12.1px;background:#111;"></div><div class="abs" style="left:438.5px;top:140.6px;width:80.0px;height:67.1px;background:#f4f6f8;"></div><div class="abs" style="left:518.5px;top:140.6px;width:80.0px;height:67.1px;background:#1e1e1e;"></div><div class="abs" style="left:480.8px;top:214.8px;width:34.5px;height:7.5px;background:#b0a015;"></div><div class="abs" style="left:521.8px;top:214.8px;width:34.5px;height:7.5px;background:#c85050;"></div><div class="abs" style="left:484.7px;top:230.4px;width:67.7px;height:4.7px;background:#ddd;"></div><div class="abs" style="left:454.7px;top:256.7px;width:86.3px;height:2.2px;background:#777;"></div><div class="abs" style="left:454.7px;top:262.1px;width:86.3px;height:2.2px;background:#777;"></div><div class="abs" style="left:454.7px;top:267.5px;width:86.3px;height:2.2px;background:#777;"></div><div class="abs" style="left:454.7px;top:272.9px;width:86.3px;height:2.2px;background:#777;"></div><div class="abs" style="left:454.7px;top:278.3px;width:86.3px;height:2.2px;background:#777;"></div><div class="abs" style="left:454.7px;top:283.6px;width:86.3px;height:2.2px;background:#777;"></div><div class="abs" style="left:454.7px;top:289.0px;width:86.3px;height:2.2px;background:#777;"></div><div class="abs" style="left:0.0px;top:302.0px;width:742.0px;height:8.6px;background:#cfe0ea;"></div></div></div>
<div class="abs" style="left:345px;top:507px;width:160px;height:35px;background:#b0a015;color:#fff;font-size:13.6px;text-align:center;line-height:35px">Pause</div>
<div class="abs" style="left:535px;top:507px;width:160px;height:35px;background:#c85050;color:#fff;font-size:13.6px;text-align:center;line-height:35px">Submit Task</div>
<div class="abs" style="left:0;width:984px;padding-left:56px;top:576.5px;text-align:center;font-size:24.5px;font-weight:bold;color:#fff;-webkit-text-stroke:0.6px #fff">Capture Duration: 00:05:19</div>
</div>
</div>
<svg class="abs" style="left:2291px;top:467px;z-index:100" width="15" height="22" viewBox="-1 -1 15 22"><path d="M0.5 0.5v16l4-3.6 3 6.3 2.4-1.1-3-6.1 5.6-.4z" fill="#fff" stroke="#000" stroke-width="1.2" stroke-linejoin="round"/></svg>
<div id="taskbar" class="abs" style="left:0;top:1400px;width:3440px;height:40px;background:linear-gradient(90deg,#c7dde9,#cfe0ea 50%,#c9dbe6)">
<svg class="abs" style="left:16px;top:12px" width="16" height="16" viewBox="0 0 16 16"><rect x="0" y="0" width="7.5" height="7.5" fill="#111"/><rect x="8.5" y="0" width="7.5" height="7.5" fill="#111"/><rect x="0" y="8.5" width="7.5" height="7.5" fill="#111"/><rect x="8.5" y="8.5" width="7.5" height="7.5" fill="#111"/></svg>
<div class="abs" style="left:49px;top:1px;width:286px;height:39px;background:#fcfdfd;border:1px solid #d9e2e8"></div>
<svg class="abs" style="left:60px;top:12px" width="17" height="17" viewBox="0 0 17 17"><circle cx="10.5" cy="6.5" r="5.2" stroke="#222" stroke-width="1.4" fill="none"/><path d="M6.8 10.2L1 16" stroke="#222" stroke-width="1.6"/></svg>
<div class="abs" style="left:88px;top:12px;font-size:14.4px;color:#1b1b1b">Type here to search</div>
<svg class="abs" style="left:264px;top:8px" width="30" height="26" viewBox="0 0 30 26"><path d="M2 13h26c-1 7-6 11-13 11S3 20 2 13z" fill="#9b59d0"/><path d="M15 2c3 4 2 8 0 10-2-2-3-6 0-10z" fill="#f5a623"/></svg>
<svg class="abs" style="left:296px;top:4px" width="32" height="34" viewBox="0 0 32 34"><path d="M16 1l4 8 9-3-4 9 6 4-8 3 2 10-9-6-9 6 2-10-8-3 6-4-4-9 9 3z" fill="#f4b942"/><circle cx="16" cy="17" r="8" fill="#3fb8c9"/><circle cx="16" cy="17" r="5" fill="#c94fd6"/></svg>
<svg class="abs" style="left:350px;top:7px" width="26" height="26" viewBox="0 0 26 26"><path d="M4 18C2 10 6 3 12 3h6c4 0 6 3 5 7l-2 8c-1 4-4 5-7 5H8c-3 0-4-2-4-5z" fill="#4aa3f0"/><path d="M10 14c2-6 6-8 10-6l-2 8c-1 3-3 4-6 4z" fill="#e56fd8"/><path d="M4 10c2-4 5-6 9-5l-3 9c-1 2-3 3-6 2z" fill="#37c5a4"/></svg>
<svg class="abs" style="left:399px;top:7px" width="26" height="26" viewBox="0 0 26 26"><rect x="1" y="1" width="24" height="24" fill="#bf0000"/><text x="3" y="21" font-size="18" font-style="italic" font-weight="bold" fill="#fff" font-family="Liberation Sans">Fz</text></svg>
<svg class="abs" style="left:448px;top:7px" width="26" height="26" viewBox="0 0 26 26"><path d="M1 5h9l2 2h13v16H1z" fill="#f1c232"/><rect x="1" y="9" width="24" height="14" fill="#ffd966"/><rect x="8" y="14" width="10" height="9" fill="#1e88e5"/><rect x="11" y="17" width="4" height="6" fill="#ffd966"/></svg>
<svg class="abs" style="left:497px;top:7px" width="26" height="26" viewBox="0 0 26 26"><circle cx="13" cy="14" r="11" fill="#ff7139"/><circle cx="13" cy="14" r="6" fill="#7542e5"/><path d="M6 4c4-3 10-3 14 1-3-1-8 0-9 3z" fill="#ffbd4f"/></svg>
<svg class="abs" style="left:545px;top:7px" width="26" height="26" viewBox="0 0 26 26"><circle cx="13" cy="13" r="12" fill="#db4437"/><path d="M13 13L2.6 7A12 12 0 0 1 24.4 9z" fill="#db4437"/><path d="M13 13l10.4-6A12 12 0 0 1 13 25z" fill="#f4b400"/><path d="M13 13v12A12 12 0 0 1 2.6 7z" fill="#0f9d58"/><circle cx="13" cy="13" r="5.5" fill="#fff"/><circle cx="13" cy="13" r="4.3" fill="#4285f4"/></svg>
<svg class="abs" style="left:595px;top:7px" width="26" height="26" viewBox="0 0 26 26"><rect x="2" y="2" width="22" height="22" fill="#7a1f5c"/><rect x="2" y="8" width="22" height="5" fill="#2e7d32"/><rect x="2" y="16" width="22" height="5" fill="#1565c0"/><rect x="10" y="1" width="6" height="24" fill="#c8a050"/></svg>
<svg class="abs" style="left:643px;top:7px" width="26" height="26" viewBox="0 0 26 26"><circle cx="13" cy="13" r="12" fill="#fff"/><rect x="11" y="4" width="3" height="8" rx="1.5" fill="#36c5f0"/><rect x="14" y="11" width="8" height="3" rx="1.5" fill="#2eb67d"/><rect x="12" y="14" width="3" height="8" rx="1.5" fill="#ecb22e"/><rect x="4" y="12" width="8" height="3" rx="1.5" fill="#e01e5a"/></svg>
<svg class="abs" style="left:692px;top:7px" width="26" height="26" viewBox="0 0 26 26"><path d="M5 2h12l5 5v17H5z" fill="#f2f2f2" stroke="#bbb"/></svg>
<svg class="abs" style="left:742px;top:7px" width="26" height="26" viewBox="0 0 26 26"><ellipse cx="12" cy="15" rx="10" ry="8" fill="#e6eef2" stroke="#9aa" /><circle cx="8" cy="13" r="2" fill="#e53935"/><circle cx="12" cy="10" r="2" fill="#43a047"/><circle cx="16" cy="13" r="2" fill="#1e88e5"/><path d="M16 22L25 3" stroke="#c69" stroke-width="3"/></svg>
<svg class="abs" style="left:791px;top:7px" width="26" height="26" viewBox="0 0 26 26"><path d="M19 1l6 3v18l-6 3L8 15l-5 4-2-1V8l2-1 5 4zM19 7l-6 6 6 6z" fill="#1f9cf0"/></svg>
<svg class="abs" style="left:839px;top:7px" width="26" height="26" viewBox="0 0 26 26"><path d="M13 1l10 22H3z" fill="#ff8800"/><path d="M8 12h10l1 3H7zM6 18h14l1 3H5z" fill="#fff"/><rect x="2" y="22" width="22" height="3" fill="#ff8800"/></svg>
<svg class="abs" style="left:889px;top:7px" width="26" height="26" viewBox="0 0 26 26"><circle cx="13" cy="13" r="12" fill="#fff"/><path d="M8 21l5-15 5 15M9.5 16h7" stroke="#3b6fd8" stroke-width="2.2" fill="none"/><circle cx="19" cy="9" r="2.5" fill="#3ddc84"/></svg>
<svg class="abs" style="left:937px;top:7px" width="26" height="26" viewBox="0 0 26 26"><path d="M2 22C4 10 12 2 21 5c3 6 0 14-6 18-1-6-6-7-13-1z" fill="#26b5b0"/><path d="M10 18c2-3 5-4 7-2" stroke="#fff" stroke-width="1.5" fill="none"/></svg>
<svg class="abs" style="left:987px;top:7px" width="26" height="26" viewBox="0 0 26 26"><circle cx="12" cy="12" r="11" fill="#db4437"/><path d="M12 12L2.5 6.5A11 11 0 0 1 22.5 8z" fill="#db4437"/><path d="M12 12l9.5-5.5A11 11 0 0 1 12 23z" fill="#f4b400"/><path d="M12 12v11A11 11 0 0 1 2.5 6.5z" fill="#0f9d58"/><circle cx="12" cy="12" r="5" fill="#fff"/><circle cx="12" cy="12" r="4" fill="#4285f4"/><circle cx="19" cy="19" r="7" fill="#c2185b"/><text x="16" y="23" font-size="9" fill="#fff" font-family="Liberation Sans">S</text></svg>
<svg class="abs" style="left:1036px;top:7px" width="26" height="26" viewBox="0 0 26 26"><circle cx="12" cy="12" r="11" fill="#db4437"/><path d="M12 12L2.5 6.5A11 11 0 0 1 22.5 8z" fill="#db4437"/><path d="M12 12l9.5-5.5A11 11 0 0 1 12 23z" fill="#f4b400"/><path d="M12 12v11A11 11 0 0 1 2.5 6.5z" fill="#0f9d58"/><circle cx="12" cy="12" r="5" fill="#fff"/><circle cx="12" cy="12" r="4" fill="#4285f4"/><circle cx="19" cy="19" r="7" fill="#3a2a22"/></svg>
<svg class="abs" style="left:1084px;top:7px" width="26" height="26" viewBox="0 0 26 26"><rect x="1" y="1" width="24" height="24" rx="3" fill="#fb7a24"/><path d="M7 7c3 0 4 3 6 6 2-3 3-6 6-6v12c-3 0-4-3-6-6-2 3-3 6-6 6z" stroke="#fff" stroke-width="2.5" fill="none"/></svg>
<div class="abs" style="left:1123px;top:0;width:48px;height:40px;background:#e4eef4"></div>
<svg class="abs" style="left:1133px;top:9px" width="26" height="24" viewBox="0 0 26 24"><rect width="26" height="24" fill="#fafafa"/><rect x="5" y="3" width="16" height="11" fill="#1e88c8"/><rect x="7" y="5" width="5" height="5" fill="#7fd07f"/><path d="M10 15h6v2h-6z" fill="#444"/><text x="5" y="22" font-size="4.5" fill="#333" font-family="Liberation Sans">TaskPro</text></svg>
<div class="abs" style="left:441px;top:37px;width:40px;height:3px;background:#1a73c9"></div>
<div class="abs" style="left:784px;top:37px;width:40px;height:3px;background:#1a73c9"></div>
<div class="abs" style="left:929px;top:37px;width:42px;height:3px;background:#1a73c9"></div>
<div class="abs" style="left:979px;top:37px;width:42px;height:3px;background:#1a73c9"></div>
<div class="abs" style="left:1029px;top:37px;width:40px;height:3px;background:#1a73c9"></div>
<div class="abs" style="left:1077px;top:37px;width:41px;height:3px;background:#1a73c9"></div>
<div class="abs" style="left:1123px;top:37px;width:48px;height:3px;background:#1a73c9"></div>
<svg class="abs" style="left:3231px;top:13px" width="16" height="10" viewBox="0 0 16 10"><path d="M2 8l6-6 6 6" stroke="#222" stroke-width="1.4" fill="none"/></svg>
<svg class="abs" style="left:3255px;top:11px" width="18" height="18" viewBox="0 0 18 18"><path d="M1 6h3l5-4v14l-5-4H1z" stroke="#222" stroke-width="1.3" fill="none"/><path d="M12 5c2 2 2 6 0 8M14.5 3c3 3 3 9 0 12" stroke="#222" stroke-width="1.3" fill="none"/></svg>
<svg class="abs" style="left:3281px;top:11px" width="16" height="18" viewBox="0 0 16 18"><rect x="1" y="4" width="10" height="10" rx="2" stroke="#222" stroke-width="1.3" fill="none"/><path d="M11 8l4-2v6l-4-2" stroke="#222" stroke-width="1.3" fill="none"/></svg>
<svg class="abs" style="left:3304px;top:11px" width="18" height="18" viewBox="0 0 18 18"><path d="M2 16A14 14 0 0 1 16 2M5 16A11 11 0 0 1 16 5M8 16a8 8 0 0 1 8-8M11 16a5 5 0 0 1 5-5" stroke="#222" stroke-width="1.2" fill="none"/></svg>
<div class="abs" style="left:3322px;top:2px;width:66px;text-align:center;font-size:12.2px;line-height:18px;color:#111">10:59 AM<br>10/20/2025</div>
<div class="abs" style="left:3436px;top:0;width:1px;height:40px;background:#9fb2bd"></div>
<svg class="abs" style="left:3397px;top:9px" width="26" height="26" viewBox="0 0 26 26"><path d="M2 2h18v13H8l-4 4v-4H2z" fill="#222"/><path d="M5 6h12M5 9h12M5 12h8" stroke="#ddd" stroke-width="1"/><circle cx="19" cy="19" r="6" fill="#d8e4ea" stroke="#555" stroke-width="1"/><text x="16" y="23" font-size="10" fill="#111" font-family="Liberation Sans">2</text></svg>
</div></div></div>
<div class="abs" style="left:345px;top:507px;width:160px;height:35px;background:#b0a015;color:#fff;font-size:13.6px;text-align:center;line-height:35px">Pause</div>
<div class="abs" style="left:535px;top:507px;width:160px;height:35px;background:#c85050;color:#fff;font-size:13.6px;text-align:center;line-height:35px">Submit Task</div>
<div class="abs" style="left:0;width:984px;padding-left:56px;top:576.5px;text-align:center;font-size:24.5px;font-weight:bold;color:#fff;-webkit-text-stroke:0.6px #fff">Capture Duration: 00:05:19</div>
</div>
</div>
<svg class="abs" style="left:2291px;top:467px;z-index:100" width="15" height="22" viewBox="-1 -1 15 22"><path d="M0.5 0.5v16l4-3.6 3 6.3 2.4-1.1-3-6.1 5.6-.4z" fill="#fff" stroke="#000" stroke-width="1.2" stroke-linejoin="round"/></svg>
<div id="taskbar" class="abs" style="left:0;top:1400px;width:3440px;height:40px;background:linear-gradient(90deg,#c7dde9,#cfe0ea 50%,#c9dbe6)">
<svg class="abs" style="left:16px;top:12px" width="16" height="16" viewBox="0 0 16 16"><rect x="0" y="0" width="7.5" height="7.5" fill="#111"/><rect x="8.5" y="0" width="7.5" height="7.5" fill="#111"/><rect x="0" y="8.5" width="7.5" height="7.5" fill="#111"/><rect x="8.5" y="8.5" width="7.5" height="7.5" fill="#111"/></svg>
<div class="abs" style="left:49px;top:1px;width:286px;height:39px;background:#fcfdfd;border:1px solid #d9e2e8"></div>
<svg class="abs" style="left:60px;top:12px" width="17" height="17" viewBox="0 0 17 17"><circle cx="10.5" cy="6.5" r="5.2" stroke="#222" stroke-width="1.4" fill="none"/><path d="M6.8 10.2L1 16" stroke="#222" stroke-width="1.6"/></svg>
<div class="abs" style="left:88px;top:12px;font-size:14.4px;color:#1b1b1b">Type here to search</div>
<svg class="abs" style="left:264px;top:8px" width="30" height="26" viewBox="0 0 30 26"><path d="M2 13h26c-1 7-6 11-13 11S3 20 2 13z" fill="#9b59d0"/><path d="M15 2c3 4 2 8 0 10-2-2-3-6 0-10z" fill="#f5a623"/></svg>
<svg class="abs" style="left:296px;top:4px" width="32" height="34" viewBox="0 0 32 34"><path d="M16 1l4 8 9-3-4 9 6 4-8 3 2 10-9-6-9 6 2-10-8-3 6-4-4-9 9 3z" fill="#f4b942"/><circle cx="16" cy="17" r="8" fill="#3fb8c9"/><circle cx="16" cy="17" r="5" fill="#c94fd6"/></svg>
<svg class="abs" style="left:350px;top:7px" width="26" height="26" viewBox="0 0 26 26"><path d="M4 18C2 10 6 3 12 3h6c4 0 6 3 5 7l-2 8c-1 4-4 5-7 5H8c-3 0-4-2-4-5z" fill="#4aa3f0"/><path d="M10 14c2-6 6-8 10-6l-2 8c-1 3-3 4-6 4z" fill="#e56fd8"/><path d="M4 10c2-4 5-6 9-5l-3 9c-1 2-3 3-6 2z" fill="#37c5a4"/></svg>
<svg class="abs" style="left:399px;top:7px" width="26" height="26" viewBox="0 0 26 26"><rect x="1" y="1" width="24" height="24" fill="#bf0000"/><text x="3" y="21" font-size="18" font-style="italic" font-weight="bold" fill="#fff" font-family="Liberation Sans">Fz</text></svg>
<svg class="abs" style="left:448px;top:7px" width="26" height="26" viewBox="0 0 26 26"><path d="M1 5h9l2 2h13v16H1z" fill="#f1c232"/><rect x="1" y="9" width="24" height="14" fill="#ffd966"/><rect x="8" y="14" width="10" height="9" fill="#1e88e5"/><rect x="11" y="17" width="4" height="6" fill="#ffd966"/></svg>
<svg class="abs" style="left:497px;top:7px" width="26" height="26" viewBox="0 0 26 26"><circle cx="13" cy="14" r="11" fill="#ff7139"/><circle cx="13" cy="14" r="6" fill="#7542e5"/><path d="M6 4c4-3 10-3 14 1-3-1-8 0-9 3z" fill="#ffbd4f"/></svg>
<svg class="abs" style="left:545px;top:7px" width="26" height="26" viewBox="0 0 26 26"><circle cx="13" cy="13" r="12" fill="#db4437"/><path d="M13 13L2.6 7A12 12 0 0 1 24.4 9z" fill="#db4437"/><path d="M13 13l10.4-6A12 12 0 0 1 13 25z" fill="#f4b400"/><path d="M13 13v12A12 12 0 0 1 2.6 7z" fill="#0f9d58"/><circle cx="13" cy="13" r="5.5" fill="#fff"/><circle cx="13" cy="13" r="4.3" fill="#4285f4"/></svg>
<svg class="abs" style="left:595px;top:7px" width="26" height="26" viewBox="0 0 26 26"><rect x="2" y="2" width="22" height="22" fill="#7a1f5c"/><rect x="2" y="8" width="22" height="5" fill="#2e7d32"/><rect x="2" y="16" width="22" height="5" fill="#1565c0"/><rect x="10" y="1" width="6" height="24" fill="#c8a050"/></svg>
<svg class="abs" style="left:643px;top:7px" width="26" height="26" viewBox="0 0 26 26"><circle cx="13" cy="13" r="12" fill="#fff"/><rect x="11" y="4" width="3" height="8" rx="1.5" fill="#36c5f0"/><rect x="14" y="11" width="8" height="3" rx="1.5" fill="#2eb67d"/><rect x="12" y="14" width="3" height="8" rx="1.5" fill="#ecb22e"/><rect x="4" y="12" width="8" height="3" rx="1.5" fill="#e01e5a"/></svg>
<svg class="abs" style="left:692px;top:7px" width="26" height="26" viewBox="0 0 26 26"><path d="M5 2h12l5 5v17H5z" fill="#f2f2f2" stroke="#bbb"/></svg>
<svg class="abs" style="left:742px;top:7px" width="26" height="26" viewBox="0 0 26 26"><ellipse cx="12" cy="15" rx="10" ry="8" fill="#e6eef2" stroke="#9aa" /><circle cx="8" cy="13" r="2" fill="#e53935"/><circle cx="12" cy="10" r="2" fill="#43a047"/><circle cx="16" cy="13" r="2" fill="#1e88e5"/><path d="M16 22L25 3" stroke="#c69" stroke-width="3"/></svg>
<svg class="abs" style="left:791px;top:7px" width="26" height="26" viewBox="0 0 26 26"><path d="M19 1l6 3v18l-6 3L8 15l-5 4-2-1V8l2-1 5 4zM19 7l-6 6 6 6z" fill="#1f9cf0"/></svg>
<svg class="abs" style="left:839px;top:7px" width="26" height="26" viewBox="0 0 26 26"><path d="M13 1l10 22H3z" fill="#ff8800"/><path d="M8 12h10l1 3H7zM6 18h14l1 3H5z" fill="#fff"/><rect x="2" y="22" width="22" height="3" fill="#ff8800"/></svg>
<svg class="abs" style="left:889px;top:7px" width="26" height="26" viewBox="0 0 26 26"><circle cx="13" cy="13" r="12" fill="#fff"/><path d="M8 21l5-15 5 15M9.5 16h7" stroke="#3b6fd8" stroke-width="2.2" fill="none"/><circle cx="19" cy="9" r="2.5" fill="#3ddc84"/></svg>
<svg class="abs" style="left:937px;top:7px" width="26" height="26" viewBox="0 0 26 26"><path d="M2 22C4 10 12 2 21 5c3 6 0 14-6 18-1-6-6-7-13-1z" fill="#26b5b0"/><path d="M10 18c2-3 5-4 7-2" stroke="#fff" stroke-width="1.5" fill="none"/></svg>
<svg class="abs" style="left:987px;top:7px" width="26" height="26" viewBox="0 0 26 26"><circle cx="12" cy="12" r="11" fill="#db4437"/><path d="M12 12L2.5 6.5A11 11 0 0 1 22.5 8z" fill="#db4437"/><path d="M12 12l9.5-5.5A11 11 0 0 1 12 23z" fill="#f4b400"/><path d="M12 12v11A11 11 0 0 1 2.5 6.5z" fill="#0f9d58"/><circle cx="12" cy="12" r="5" fill="#fff"/><circle cx="12" cy="12" r="4" fill="#4285f4"/><circle cx="19" cy="19" r="7" fill="#c2185b"/><text x="16" y="23" font-size="9" fill="#fff" font-family="Liberation Sans">S</text></svg>
<svg class="abs" style="left:1036px;top:7px" width="26" height="26" viewBox="0 0 26 26"><circle cx="12" cy="12" r="11" fill="#db4437"/><path d="M12 12L2.5 6.5A11 11 0 0 1 22.5 8z" fill="#db4437"/><path d="M12 12l9.5-5.5A11 11 0 0 1 12 23z" fill="#f4b400"/><path d="M12 12v11A11 11 0 0 1 2.5 6.5z" fill="#0f9d58"/><circle cx="12" cy="12" r="5" fill="#fff"/><circle cx="12" cy="12" r="4" fill="#4285f4"/><circle cx="19" cy="19" r="7" fill="#3a2a22"/></svg>
<svg class="abs" style="left:1084px;top:7px" width="26" height="26" viewBox="0 0 26 26"><rect x="1" y="1" width="24" height="24" rx="3" fill="#fb7a24"/><path d="M7 7c3 0 4 3 6 6 2-3 3-6 6-6v12c-3 0-4-3-6-6-2 3-3 6-6 6z" stroke="#fff" stroke-width="2.5" fill="none"/></svg>
<div class="abs" style="left:1123px;top:0;width:48px;height:40px;background:#e4eef4"></div>
<svg class="abs" style="left:1133px;top:9px" width="26" height="24" viewBox="0 0 26 24"><rect width="26" height="24" fill="#fafafa"/><rect x="5" y="3" width="16" height="11" fill="#1e88c8"/><rect x="7" y="5" width="5" height="5" fill="#7fd07f"/><path d="M10 15h6v2h-6z" fill="#444"/><text x="5" y="22" font-size="4.5" fill="#333" font-family="Liberation Sans">TaskPro</text></svg>
<div class="abs" style="left:441px;top:37px;width:40px;height:3px;background:#1a73c9"></div>
<div class="abs" style="left:784px;top:37px;width:40px;height:3px;background:#1a73c9"></div>
<div class="abs" style="left:929px;top:37px;width:42px;height:3px;background:#1a73c9"></div>
<div class="abs" style="left:979px;top:37px;width:42px;height:3px;background:#1a73c9"></div>
<div class="abs" style="left:1029px;top:37px;width:40px;height:3px;background:#1a73c9"></div>
<div class="abs" style="left:1077px;top:37px;width:41px;height:3px;background:#1a73c9"></div>
<div class="abs" style="left:1123px;top:37px;width:48px;height:3px;background:#1a73c9"></div>
<svg class="abs" style="left:3231px;top:13px" width="16" height="10" viewBox="0 0 16 10"><path d="M2 8l6-6 6 6" stroke="#222" stroke-width="1.4" fill="none"/></svg>
<svg class="abs" style="left:3255px;top:11px" width="18" height="18" viewBox="0 0 18 18"><path d="M1 6h3l5-4v14l-5-4H1z" stroke="#222" stroke-width="1.3" fill="none"/><path d="M12 5c2 2 2 6 0 8M14.5 3c3 3 3 9 0 12" stroke="#222" stroke-width="1.3" fill="none"/></svg>
<svg class="abs" style="left:3281px;top:11px" width="16" height="18" viewBox="0 0 16 18"><rect x="1" y="4" width="10" height="10" rx="2" stroke="#222" stroke-width="1.3" fill="none"/><path d="M11 8l4-2v6l-4-2" stroke="#222" stroke-width="1.3" fill="none"/></svg>
<svg class="abs" style="left:3304px;top:11px" width="18" height="18" viewBox="0 0 18 18"><path d="M2 16A14 14 0 0 1 16 2M5 16A11 11 0 0 1 16 5M8 16a8 8 0 0 1 8-8M11 16a5 5 0 0 1 5-5" stroke="#222" stroke-width="1.2" fill="none"/></svg>
<div class="abs" style="left:3322px;top:2px;width:66px;text-align:center;font-size:12.2px;line-height:18px;color:#111">10:59 AM<br>10/20/2025</div>
<div class="abs" style="left:3436px;top:0;width:1px;height:40px;background:#9fb2bd"></div>
<svg class="abs" style="left:3397px;top:9px" width="26" height="26" viewBox="0 0 26 26"><path d="M2 2h18v13H8l-4 4v-4H2z" fill="#222"/><path d="M5 6h12M5 9h12M5 12h8" stroke="#ddd" stroke-width="1"/><circle cx="19" cy="19" r="6" fill="#d8e4ea" stroke="#555" stroke-width="1"/><text x="16" y="23" font-size="10" fill="#111" font-family="Liberation Sans">2</text></svg>
</div></body></html>
